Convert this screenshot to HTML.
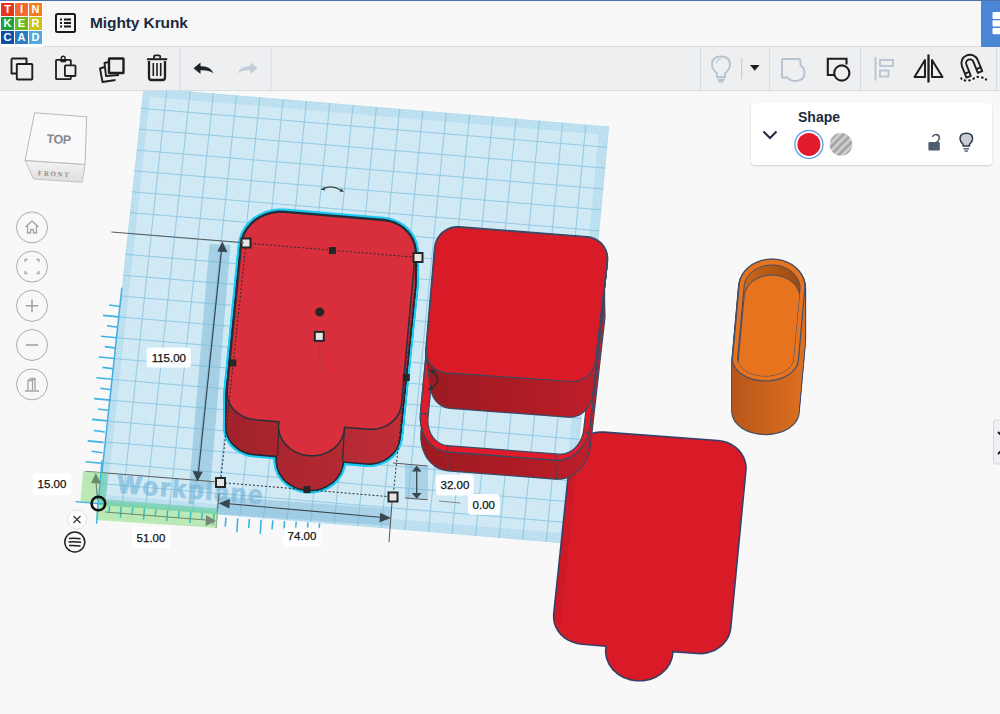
<!DOCTYPE html>
<html><head><meta charset="utf-8">
<style>
*{box-sizing:border-box;margin:0;padding:0}
html,body{width:1000px;height:714px;overflow:hidden;background:#f8f8f8;font-family:"Liberation Sans",sans-serif}
#scene{position:absolute;left:0;top:0;width:1000px;height:714px}
#hdr{position:absolute;left:0;top:0;width:1000px;height:47px;background:#f7f7f7;border-top:1px solid #4a73ad;border-bottom:1px solid #d9dde3}
#logo{position:absolute;left:0;top:0;width:43px;height:46px;background:#fff}
.lg{position:absolute;width:13px;height:13px;color:#fff;font-weight:bold;font-size:11px;line-height:13px;text-align:center}
#title{position:absolute;left:90px;top:13px;font-size:15.5px;font-weight:bold;color:#1c2b3d;letter-spacing:-0.1px}
#blue{position:absolute;left:981px;top:0;width:19px;height:46px;background:#4b86d4}
#tb{position:absolute;left:0;top:47px;width:1000px;height:44px;background:#eeeff1;border-bottom:1px solid #d9dde3}
.sep{position:absolute;top:0;width:1px;height:43px;background:#d8dce2}
svg.ic{position:absolute;overflow:visible}
.lbl{position:absolute;background:rgba(255,255,255,0.92);border-radius:3px;font-size:11px;color:#111;text-align:center}
</style></head><body>
<svg id="scene" width="1000" height="714" viewBox="0 0 1000 714">
<path d="M143.5,87.5 L609.2,126.4 L569.8,543.8 L98.5,504.5Z" fill="#b2dbee"/>
<path d="M150.0,96.9 L598.6,134.3 L560.9,533.0 L107.1,495.1Z" fill="#cae7f4"/>
<path d="M145.8,87.7L100.9,504.7M143.3,89.6L609.0,128.5M148.2,87.9L103.2,504.9M143.1,91.7L608.8,130.6M150.5,88.1L105.6,505.1M142.8,93.8L608.6,132.7M152.8,88.3L107.9,505.3M142.6,95.8L608.4,134.7M155.1,88.5L110.3,505.5M142.4,97.9L608.2,136.8M157.5,88.7L112.6,505.7M142.2,100.0L608.0,138.9M159.8,88.9L115.0,505.9M141.9,102.1L607.8,141.0M162.1,89.1L117.4,506.1M141.7,104.2L607.6,143.1M164.5,89.3L119.7,506.3M141.5,106.3L607.4,145.2M169.1,89.6L124.4,506.7M141.0,110.4L607.0,149.4M171.4,89.8L126.8,506.9M140.8,112.5L606.8,151.4M173.8,90.0L129.1,507.1M140.6,114.6L606.6,153.5M176.1,90.2L131.5,507.3M140.3,116.7L606.4,155.6M178.4,90.4L133.8,507.4M140.1,118.8L606.2,157.7M180.8,90.6L136.2,507.6M139.9,120.9L606.0,159.8M183.1,90.8L138.6,507.8M139.7,122.9L605.9,161.9M185.4,91.0L140.9,508.0M139.5,125.0L605.7,164.0M187.7,91.2L143.3,508.2M139.2,127.1L605.5,166.1M192.4,91.6L148.0,508.6M138.8,131.3L605.1,170.2M194.7,91.8L150.3,508.8M138.6,133.4L604.9,172.3M197.1,92.0L152.7,509.0M138.3,135.5L604.7,174.4M199.4,92.2L155.1,509.2M138.1,137.5L604.5,176.5M201.7,92.4L157.4,509.4M137.9,139.6L604.3,178.6M204.0,92.6L159.8,509.6M137.7,141.7L604.1,180.7M206.4,92.8L162.1,509.8M137.4,143.8L603.9,182.7M208.7,92.9L164.5,510.0M137.2,145.9L603.7,184.8M211.0,93.1L166.8,510.2M137.0,148.0L603.5,186.9M215.7,93.5L171.6,510.6M136.5,152.1L603.1,191.1M218.0,93.7L173.9,510.8M136.3,154.2L602.9,193.2M220.3,93.9L176.3,511.0M136.1,156.3L602.7,195.3M222.7,94.1L178.6,511.2M135.8,158.4L602.5,197.4M225.0,94.3L181.0,511.4M135.6,160.5L602.3,199.4M227.3,94.5L183.3,511.6M135.4,162.6L602.1,201.5M229.7,94.7L185.7,511.8M135.2,164.6L601.9,203.6M232.0,94.9L188.0,512.0M135.0,166.7L601.7,205.7M234.3,95.1L190.4,512.2M134.7,168.8L601.5,207.8M239.0,95.5L195.1,512.6M134.3,173.0L601.1,212.0M241.3,95.7L197.5,512.8M134.1,175.1L600.9,214.1M243.6,95.9L199.8,512.9M133.8,177.2L600.7,216.1M246.0,96.1L202.2,513.1M133.6,179.2L600.5,218.2M248.3,96.3L204.5,513.3M133.4,181.3L600.3,220.3M250.6,96.4L206.9,513.5M133.2,183.4L600.1,222.4M252.9,96.6L209.3,513.7M132.9,185.5L599.9,224.5M255.3,96.8L211.6,513.9M132.7,187.6L599.7,226.6M257.6,97.0L214.0,514.1M132.5,189.7L599.5,228.7M262.3,97.4L218.7,514.5M132.0,193.8L599.2,232.8M264.6,97.6L221.0,514.7M131.8,195.9L599.0,234.9M266.9,97.8L223.4,514.9M131.6,198.0L598.8,237.0M269.2,98.0L225.8,515.1M131.3,200.1L598.6,239.1M271.6,98.2L228.1,515.3M131.1,202.2L598.4,241.2M273.9,98.4L230.5,515.5M130.9,204.3L598.2,243.3M276.2,98.6L232.8,515.7M130.7,206.3L598.0,245.4M278.6,98.8L235.2,515.9M130.4,208.4L597.8,247.4M280.9,99.0L237.5,516.1M130.2,210.5L597.6,249.5M285.5,99.4L242.2,516.5M129.8,214.7L597.2,253.7M287.9,99.6L244.6,516.7M129.5,216.8L597.0,255.8M290.2,99.8L247.0,516.9M129.3,218.9L596.8,257.9M292.5,99.9L249.3,517.1M129.1,220.9L596.6,260.0M294.9,100.1L251.7,517.3M128.9,223.0L596.4,262.1M297.2,100.3L254.0,517.5M128.7,225.1L596.2,264.1M299.5,100.5L256.4,517.7M128.4,227.2L596.0,266.2M301.8,100.7L258.7,517.9M128.2,229.3L595.8,268.3M304.2,100.9L261.1,518.1M128.0,231.4L595.6,270.4M308.8,101.3L265.8,518.5M127.5,235.5L595.2,274.6M311.2,101.5L268.2,518.6M127.3,237.6L595.0,276.7M313.5,101.7L270.5,518.8M127.1,239.7L594.8,278.8M315.8,101.9L272.9,519.0M126.8,241.8L594.6,280.8M318.1,102.1L275.2,519.2M126.6,243.9L594.4,282.9M320.5,102.3L277.6,519.4M126.4,246.0L594.2,285.0M322.8,102.5L280.0,519.6M126.2,248.0L594.0,287.1M325.1,102.7L282.3,519.8M125.9,250.1L593.8,289.2M327.5,102.9L284.7,520.0M125.7,252.2L593.6,291.3M332.1,103.3L289.4,520.4M125.3,256.4L593.2,295.4M334.4,103.4L291.7,520.6M125.1,258.5L593.0,297.5M336.8,103.6L294.1,520.8M124.8,260.6L592.8,299.6M339.1,103.8L296.4,521.0M124.6,262.6L592.7,301.7M341.4,104.0L298.8,521.2M124.4,264.7L592.5,303.8M343.8,104.2L301.2,521.4M124.2,266.8L592.3,305.9M346.1,104.4L303.5,521.6M123.9,268.9L592.1,308.0M348.4,104.6L305.9,521.8M123.7,271.0L591.9,310.1M350.7,104.8L308.2,522.0M123.5,273.1L591.7,312.1M355.4,105.2L312.9,522.4M123.0,277.2L591.3,316.3M357.7,105.4L315.3,522.6M122.8,279.3L591.1,318.4M360.1,105.6L317.7,522.8M122.6,281.4L590.9,320.5M362.4,105.8L320.0,523.0M122.3,283.5L590.7,322.6M364.7,106.0L322.4,523.2M122.1,285.6L590.5,324.7M367.0,106.2L324.7,523.4M121.9,287.7L590.3,326.8M369.4,106.4L327.1,523.6M121.7,289.7L590.1,328.8M371.7,106.6L329.4,523.8M121.5,291.8L589.9,330.9M374.0,106.8L331.8,524.0M121.2,293.9L589.7,333.0M378.7,107.1L336.5,524.3M120.8,298.1L589.3,337.2M381.0,107.3L338.9,524.5M120.5,300.2L589.1,339.3M383.3,107.5L341.2,524.7M120.3,302.3L588.9,341.4M385.7,107.7L343.6,524.9M120.1,304.3L588.7,343.4M388.0,107.9L345.9,525.1M119.9,306.4L588.5,345.5M390.3,108.1L348.3,525.3M119.7,308.5L588.3,347.6M392.6,108.3L350.6,525.5M119.4,310.6L588.1,349.7M395.0,108.5L353.0,525.7M119.2,312.7L587.9,351.8M397.3,108.7L355.4,525.9M119.0,314.8L587.7,353.9M402.0,109.1L360.1,526.3M118.5,318.9L587.3,358.1M404.3,109.3L362.4,526.5M118.3,321.0L587.1,360.1M406.6,109.5L364.8,526.7M118.1,323.1L586.9,362.2M408.9,109.7L367.1,526.9M117.8,325.2L586.7,364.3M411.3,109.9L369.5,527.1M117.6,327.3L586.5,366.4M413.6,110.1L371.9,527.3M117.4,329.4L586.3,368.5M415.9,110.3L374.2,527.5M117.2,331.4L586.2,370.6M418.3,110.5L376.6,527.7M117.0,333.5L586.0,372.7M420.6,110.6L378.9,527.9M116.7,335.6L585.8,374.8M425.2,111.0L383.6,528.3M116.3,339.8L585.4,378.9M427.6,111.2L386.0,528.5M116.1,341.9L585.2,381.0M429.9,111.4L388.3,528.7M115.8,344.0L585.0,383.1M432.2,111.6L390.7,528.9M115.6,346.0L584.8,385.2M434.6,111.8L393.1,529.1M115.4,348.1L584.6,387.3M436.9,112.0L395.4,529.3M115.2,350.2L584.4,389.4M439.2,112.2L397.8,529.5M114.9,352.3L584.2,391.4M441.5,112.4L400.1,529.7M114.7,354.4L584.0,393.5M443.9,112.6L402.5,529.8M114.5,356.5L583.8,395.6M448.5,113.0L407.2,530.2M114.0,360.6L583.4,399.8M450.9,113.2L409.6,530.4M113.8,362.7L583.2,401.9M453.2,113.4L411.9,530.6M113.6,364.8L583.0,404.0M455.5,113.6L414.3,530.8M113.3,366.9L582.8,406.1M457.8,113.8L416.6,531.0M113.1,369.0L582.6,408.1M460.2,114.0L419.0,531.2M112.9,371.1L582.4,410.2M462.5,114.1L421.3,531.4M112.7,373.1L582.2,412.3M464.8,114.3L423.7,531.6M112.4,375.2L582.0,414.4M467.2,114.5L426.1,531.8M112.2,377.3L581.8,416.5M471.8,114.9L430.8,532.2M111.8,381.5L581.4,420.7M474.1,115.1L433.1,532.4M111.6,383.6L581.2,422.8M476.5,115.3L435.5,532.6M111.3,385.7L581.0,424.8M478.8,115.5L437.8,532.8M111.1,387.7L580.8,426.9M481.1,115.7L440.2,533.0M110.9,389.8L580.6,429.0M483.5,115.9L442.5,533.2M110.7,391.9L580.4,431.1M485.8,116.1L444.9,533.4M110.4,394.0L580.2,433.2M488.1,116.3L447.3,533.6M110.2,396.1L580.0,435.3M490.4,116.5L449.6,533.8M110.0,398.2L579.8,437.4M495.1,116.9L454.3,534.2M109.5,402.3L579.5,441.5M497.4,117.1L456.7,534.4M109.3,404.4L579.3,443.6M499.8,117.3L459.0,534.6M109.1,406.5L579.1,445.7M502.1,117.5L461.4,534.8M108.8,408.6L578.9,447.8M504.4,117.6L463.8,535.0M108.6,410.7L578.7,449.9M506.7,117.8L466.1,535.2M108.4,412.8L578.5,452.0M509.1,118.0L468.5,535.4M108.2,414.8L578.3,454.1M511.4,118.2L470.8,535.5M107.9,416.9L578.1,456.1M513.7,118.4L473.2,535.7M107.7,419.0L577.9,458.2M518.4,118.8L477.9,536.1M107.3,423.2L577.5,462.4M520.7,119.0L480.3,536.3M107.1,425.3L577.3,464.5M523.0,119.2L482.6,536.5M106.8,427.4L577.1,466.6M525.4,119.4L485.0,536.7M106.6,429.4L576.9,468.7M527.7,119.6L487.3,536.9M106.4,431.5L576.7,470.8M530.0,119.8L489.7,537.1M106.2,433.6L576.5,472.8M532.4,120.0L492.0,537.3M105.9,435.7L576.3,474.9M534.7,120.2L494.4,537.5M105.7,437.8L576.1,477.0M537.0,120.4L496.7,537.7M105.5,439.9L575.9,479.1M541.7,120.8L501.5,538.1M105.0,444.0L575.5,483.3M544.0,121.0L503.8,538.3M104.8,446.1L575.3,485.4M546.3,121.1L506.2,538.5M104.6,448.2L575.1,487.5M548.7,121.3L508.5,538.7M104.3,450.3L574.9,489.5M551.0,121.5L510.9,538.9M104.1,452.4L574.7,491.6M553.3,121.7L513.2,539.1M103.9,454.5L574.5,493.7M555.6,121.9L515.6,539.3M103.7,456.5L574.3,495.8M558.0,122.1L518.0,539.5M103.5,458.6L574.1,497.9M560.3,122.3L520.3,539.7M103.2,460.7L573.9,500.0M565.0,122.7L525.0,540.1M102.8,464.9L573.5,504.1M567.3,122.9L527.4,540.3M102.5,467.0L573.3,506.2M569.6,123.1L529.7,540.5M102.3,469.1L573.1,508.3M571.9,123.3L532.1,540.7M102.1,471.1L573.0,510.4M574.3,123.5L534.5,540.9M101.9,473.2L572.8,512.5M576.6,123.7L536.8,541.0M101.6,475.3L572.6,514.6M578.9,123.9L539.2,541.2M101.4,477.4L572.4,516.7M581.3,124.1L541.5,541.4M101.2,479.5L572.2,518.8M583.6,124.3L543.9,541.6M101.0,481.6L572.0,520.8M588.2,124.6L548.6,542.0M100.5,485.7L571.6,525.0M590.6,124.8L550.9,542.2M100.3,487.8L571.4,527.1M592.9,125.0L553.3,542.4M100.1,489.9L571.2,529.2M595.2,125.2L555.7,542.6M99.9,492.0L571.0,531.3M597.6,125.4L558.0,542.8M99.6,494.1L570.8,533.4M599.9,125.6L560.4,543.0M99.4,496.2L570.6,535.5M602.2,125.8L562.7,543.2M99.2,498.2L570.4,537.5M604.5,126.0L565.1,543.4M99.0,500.3L570.2,539.6M606.9,126.2L567.4,543.6M98.7,502.4L570.0,541.7" stroke="#eef8fc" stroke-width="0.5" fill="none" opacity="0.45"/>
<path d="M166.8,89.4L122.1,506.5M141.2,108.3L607.2,147.3M190.1,91.4L145.6,508.4M139.0,129.2L605.3,168.1M213.4,93.3L169.2,510.4M136.8,150.1L603.3,189.0M236.6,95.3L192.8,512.4M134.5,170.9L601.3,209.9M259.9,97.2L216.3,514.3M132.2,191.8L599.4,230.8M283.2,99.2L239.9,516.3M130.0,212.6L597.4,251.6M306.5,101.1L263.5,518.3M127.8,233.4L595.4,272.5M329.8,103.1L287.0,520.2M125.5,254.3L593.4,293.4M353.1,105.0L310.6,522.2M123.3,275.2L591.5,314.2M376.4,107.0L334.1,524.1M121.0,296.0L589.5,335.1M399.6,108.9L357.7,526.1M118.8,316.9L587.5,356.0M422.9,110.8L381.3,528.1M116.5,337.7L585.6,376.8M446.2,112.8L404.8,530.0M114.2,358.6L583.6,397.7M469.5,114.7L428.4,532.0M112.0,379.4L581.6,418.6M492.8,116.7L452.0,534.0M109.8,400.2L579.6,439.4M516.1,118.6L475.5,535.9M107.5,421.1L577.7,460.3M539.3,120.6L499.1,537.9M105.2,441.9L575.7,481.2M562.6,122.5L522.7,539.9M103.0,462.8L573.7,502.1M585.9,124.5L546.2,541.8M100.8,483.6L571.8,522.9" stroke="#8bc5e0" stroke-width="0.85" fill="none"/>
<path d="M121.9,287.7 L98.5,504.5" stroke="#46aee0" stroke-width="1.5"/>
<text x="117" y="492.5" transform="rotate(4.4 117 492.5)" font-family="Liberation Sans" font-weight="bold" font-size="25" letter-spacing="2.2" fill="#5aa6d2" stroke="#5aa6d2" stroke-width="1.2" opacity="0.48">Workplane</text>
<path d="M209.5,244 L230.5,245 L210,490 L189,489Z" fill="#7ab6d6" opacity="0.5"/>
<path d="M219,496 L392,509 L391,526 L218,514Z" fill="#7ab6d6" opacity="0.45"/>
<path d="M405,464 L428,466 L428,500 L405,498Z" fill="#7ab6d6" opacity="0.45"/>
<defs><linearGradient id="gside" x1="0" x2="1" y1="0" y2="0"><stop offset="0" stop-color="#9c1b22"/><stop offset="0.5" stop-color="#ad1b24"/><stop offset="1" stop-color="#c0202a"/></linearGradient><linearGradient id="gsideA" x1="0" x2="1" y1="0" y2="0"><stop offset="0" stop-color="#a0222b"/><stop offset="1" stop-color="#c22e37"/></linearGradient><linearGradient id="gor" x1="0" x2="1" y1="0" y2="0"><stop offset="0" stop-color="#b8561a"/><stop offset="1" stop-color="#dd7020"/></linearGradient><linearGradient id="gori" x1="0" x2="1" y1="0" y2="0"><stop offset="0" stop-color="#d06a1c"/><stop offset="0.5" stop-color="#b85a15"/><stop offset="1" stop-color="#9c4a10"/></linearGradient></defs>
<clipPath id="dclip"><path clip-rule="evenodd" d="M0,0H1000V714H0Z M465.5,260.1 L579.4,268.1 L579.4,268.1 L582.8,268.6 L586.1,269.8 L589.2,271.6 L591.9,273.9 L594.2,276.8 L596.1,280.0 L597.6,283.7 L598.5,287.5 L598.8,291.6 L598.7,295.7 L583.7,429.8 L583.7,429.8 L583.0,433.8 L581.7,437.7 L580.0,441.4 L577.8,444.8 L575.3,447.7 L572.4,450.2 L569.2,452.1 L565.9,453.4 L562.5,454.1 L559.0,454.2 L447.3,445.6 L447.3,445.6 L443.9,445.0 L440.7,443.8 L437.7,442.0 L435.0,439.7 L432.6,436.8 L430.7,433.5 L429.3,429.9 L428.3,426.1 L427.9,422.1 L428.0,418.0 L440.8,284.5 L440.8,284.5 L441.5,280.5 L442.7,276.6 L444.4,272.9 L446.5,269.5 L449.1,266.6 L452.0,264.1 L455.2,262.2 L458.5,260.9 L462.0,260.2 L465.5,260.1Z"/></clipPath>
<path d="M603.9,432.1 L717.8,440.5 L717.8,440.5 L722.6,441.2 L727.2,442.6 L731.5,444.6 L735.4,447.1 L738.8,450.2 L741.6,453.8 L743.8,457.7 L745.2,461.8 L746.0,466.2 L745.9,470.5 L730.7,628.3 L730.7,628.3 L729.9,632.6 L728.4,636.7 L726.1,640.6 L723.2,644.1 L719.7,647.2 L715.8,649.7 L711.4,651.6 L706.7,652.9 L701.8,653.6 L696.9,653.5 L672.9,651.6 L672.9,651.6 L672.1,657.6 L669.9,663.5 L666.4,668.7 L661.8,673.3 L656.2,676.9 L649.9,679.4 L643.2,680.7 L636.2,680.8 L629.5,679.6 L623.1,677.2 L617.4,673.7 L612.6,669.3 L609.0,664.1 L606.6,658.3 L605.6,652.3 L606.0,646.2 L582.0,644.2 L582.0,644.2 L577.1,643.5 L572.5,642.1 L568.2,640.1 L564.2,637.5 L560.8,634.4 L558.0,630.8 L555.8,626.9 L554.4,622.8 L553.7,618.5 L553.7,614.2 L570.2,457.3 L570.2,457.3 L571.0,453.1 L572.6,448.9 L574.9,445.1 L577.8,441.6 L581.3,438.5 L585.3,436.0 L589.6,434.1 L594.3,432.7 L599.1,432.1 L603.9,432.1Z" fill="#d91b27" stroke="#34406a" stroke-width="1.6" stroke-linejoin="round" clip-path="url(#dclip)"/>
<path d="M570.0,468.8 L577.0,468.8 L560.6,624.8 L553.6,624.8Z" fill="#b81a26" opacity="0.35"/>
<path d="M604.5,298.1 L590.0,426.4 L590.0,426.4 L589.0,432.0 L587.3,437.4 L584.9,442.5 L581.9,447.2 L578.3,451.2 L574.2,454.6 L569.8,457.3 L565.2,459.1 L560.4,460.1 L555.6,460.2 L447.4,451.8 L447.4,451.8 L442.7,451.0 L438.2,449.4 L434.0,446.9 L430.2,443.6 L426.9,439.7 L424.2,435.1 L422.2,430.1 L420.9,424.8 L420.3,419.2 L420.4,413.6 L432.6,285.9 L433.1,304.9 L420.9,432.6 L420.8,438.2 L421.4,443.8 L422.7,449.1 L424.7,454.1 L427.4,458.7 L430.7,462.6 L434.5,465.9 L438.7,468.4 L443.2,470.0 L447.9,470.8 L447.9,470.8 L556.1,479.2 L560.9,479.1 L565.7,478.1 L570.3,476.3 L574.7,473.6 L578.8,470.2 L582.4,466.2 L585.4,461.5 L587.8,456.4 L589.5,451.0 L590.5,445.4 L590.5,445.4 L605.0,317.1Z" fill="url(#gside)" stroke="#3b4a63" stroke-width="1.2" stroke-linejoin="round"/>
<path d="M467.1,252.2 L577.5,259.8 L577.5,259.8 L582.3,260.6 L586.9,262.3 L591.1,264.8 L594.9,268.0 L598.2,271.9 L600.9,276.5 L602.9,281.5 L604.2,286.8 L604.7,292.4 L604.5,298.1 L590.0,426.4 L590.0,426.4 L589.0,432.0 L587.3,437.4 L584.9,442.5 L581.9,447.2 L578.3,451.2 L574.2,454.6 L569.8,457.3 L565.2,459.1 L560.4,460.1 L555.6,460.2 L447.4,451.8 L447.4,451.8 L442.7,451.0 L438.2,449.4 L434.0,446.9 L430.2,443.6 L426.9,439.7 L424.2,435.1 L422.2,430.1 L420.9,424.8 L420.3,419.2 L420.4,413.6 L432.6,285.9 L432.6,285.9 L433.5,280.3 L435.2,274.9 L437.5,269.8 L440.5,265.2 L444.1,261.2 L448.1,257.8 L452.6,255.1 L457.3,253.3 L462.1,252.3 L467.1,252.2Z M465.5,260.1 L579.4,268.1 L579.4,268.1 L582.8,268.6 L586.1,269.8 L589.2,271.6 L591.9,273.9 L594.2,276.8 L596.1,280.0 L597.6,283.7 L598.5,287.5 L598.8,291.6 L598.7,295.7 L583.7,429.8 L583.7,429.8 L583.0,433.8 L581.7,437.7 L580.0,441.4 L577.8,444.8 L575.3,447.7 L572.4,450.2 L569.2,452.1 L565.9,453.4 L562.5,454.1 L559.0,454.2 L447.3,445.6 L447.3,445.6 L443.9,445.0 L440.7,443.8 L437.7,442.0 L435.0,439.7 L432.6,436.8 L430.7,433.5 L429.3,429.9 L428.3,426.1 L427.9,422.1 L428.0,418.0 L440.8,284.5 L440.8,284.5 L441.5,280.5 L442.7,276.6 L444.4,272.9 L446.5,269.5 L449.1,266.6 L452.0,264.1 L455.2,262.2 L458.5,260.9 L462.0,260.2 L465.5,260.1Z" fill="#e01b2a" fill-rule="evenodd" stroke="#3b4a63" stroke-width="1.2"/>
<path d="M448.0,445.6L447.4,451.8L447.9,470.8" fill="none" stroke="#3b4a63" stroke-width="1.2"/>
<path d="M556.3,454.0L555.6,460.2L556.1,479.2" fill="none" stroke="#3b4a63" stroke-width="1.2"/>
<path d="M583.4,432.0L589.4,432.4L589.4,449.4" fill="none" stroke="#3b4a63" stroke-width="1.2"/>
<path d="M420.4,413.6L428.4,414.2" stroke="#3b4a63" stroke-width="1.2"/>
<g fill="none" stroke="#3b4a63" stroke-width="2.5" stroke-linejoin="round"><path d="M462.6,262.3 L583.6,272.2 L583.6,272.2 L586.9,272.8 L590.0,273.9 L593.0,275.4 L595.6,277.5 L597.9,279.9 L599.8,282.7 L601.2,285.8 L602.2,289.1 L602.6,292.6 L602.5,296.0 L591.6,396.0 L591.6,396.0 L591.0,399.4 L589.8,402.7 L588.2,405.8 L586.2,408.6 L583.8,411.1 L581.1,413.2 L578.1,414.8 L575.0,415.9 L571.7,416.4 L568.5,416.5 L450.3,407.8 L450.3,407.8 L447.1,407.3 L444.0,406.3 L441.1,404.7 L438.4,402.7 L436.1,400.2 L434.2,397.4 L432.8,394.3 L431.8,391.0 L431.3,387.5 L431.3,384.0 L439.6,282.8 L439.6,282.8 L440.1,279.3 L441.2,276.0 L442.7,272.9 L444.7,270.0 L447.1,267.5 L449.8,265.5 L452.8,263.9 L456.0,262.8 L459.3,262.3 L462.6,262.3Z"/><path d="M462.4,260.2 L583.8,270.2 L583.8,270.2 L587.1,270.7 L590.3,271.8 L593.2,273.4 L595.9,275.4 L598.2,277.9 L600.1,280.7 L601.5,283.8 L602.4,287.1 L602.8,290.5 L602.7,294.0 L591.8,393.9 L591.8,393.9 L591.2,397.3 L590.1,400.6 L588.5,403.7 L586.4,406.6 L584.0,409.0 L581.3,411.1 L578.3,412.7 L575.2,413.8 L571.9,414.4 L568.6,414.4 L450.1,405.8 L450.1,405.8 L446.8,405.3 L443.7,404.2 L440.8,402.6 L438.2,400.6 L435.9,398.2 L434.0,395.3 L432.5,392.2 L431.5,388.9 L431.0,385.4 L431.0,381.9 L439.3,280.7 L439.3,280.7 L439.8,277.3 L440.9,273.9 L442.4,270.8 L444.4,268.0 L446.8,265.5 L449.6,263.4 L452.6,261.8 L455.8,260.7 L459.1,260.2 L462.4,260.2Z"/><path d="M462.2,258.1 L584.0,268.1 L584.0,268.1 L587.3,268.7 L590.5,269.7 L593.5,271.3 L596.1,273.4 L598.4,275.8 L600.3,278.6 L601.8,281.7 L602.7,285.0 L603.1,288.4 L603.0,291.9 L592.1,391.9 L592.1,391.9 L591.4,395.3 L590.3,398.6 L588.7,401.7 L586.7,404.5 L584.2,407.0 L581.5,409.0 L578.5,410.6 L575.3,411.8 L572.1,412.3 L568.8,412.4 L449.8,403.7 L449.8,403.7 L446.6,403.2 L443.5,402.1 L440.5,400.6 L437.9,398.6 L435.6,396.1 L433.7,393.3 L432.2,390.2 L431.2,386.8 L430.7,383.4 L430.8,379.9 L439.0,278.7 L439.0,278.7 L439.6,275.2 L440.6,271.9 L442.2,268.7 L444.2,265.9 L446.6,263.4 L449.3,261.4 L452.3,259.8 L455.5,258.7 L458.9,258.1 L462.2,258.1Z"/><path d="M462.1,256.1 L584.2,266.1 L584.2,266.1 L587.5,266.6 L590.7,267.7 L593.7,269.3 L596.4,271.3 L598.7,273.8 L600.6,276.6 L602.0,279.7 L603.0,283.0 L603.4,286.4 L603.3,289.8 L592.3,389.8 L592.3,389.8 L591.7,393.2 L590.5,396.5 L588.9,399.6 L586.9,402.5 L584.4,404.9 L581.7,407.0 L578.7,408.6 L575.5,409.7 L572.2,410.3 L568.9,410.3 L449.6,401.6 L449.6,401.6 L446.3,401.1 L443.2,400.1 L440.3,398.5 L437.6,396.5 L435.3,394.0 L433.4,391.2 L431.9,388.1 L430.9,384.8 L430.4,381.3 L430.5,377.8 L438.8,276.6 L438.8,276.6 L439.3,273.2 L440.4,269.8 L441.9,266.7 L443.9,263.8 L446.3,261.4 L449.1,259.3 L452.1,257.7 L455.3,256.6 L458.7,256.1 L462.1,256.1Z"/><path d="M461.9,254.0 L584.4,264.0 L584.4,264.0 L587.8,264.6 L590.9,265.6 L593.9,267.2 L596.6,269.3 L598.9,271.7 L600.8,274.5 L602.3,277.6 L603.2,280.9 L603.6,284.3 L603.5,287.8 L592.5,387.7 L592.5,387.7 L591.9,391.2 L590.7,394.5 L589.1,397.6 L587.1,400.4 L584.6,402.9 L581.9,404.9 L578.9,406.5 L575.7,407.6 L572.4,408.2 L569.1,408.2 L449.4,399.6 L449.4,399.6 L446.1,399.1 L443.0,398.0 L440.0,396.5 L437.4,394.4 L435.0,392.0 L433.1,389.2 L431.6,386.1 L430.6,382.7 L430.2,379.3 L430.2,375.8 L438.5,274.6 L438.5,274.6 L439.1,271.1 L440.1,267.8 L441.7,264.6 L443.7,261.8 L446.1,259.3 L448.9,257.2 L451.9,255.7 L455.1,254.6 L458.5,254.0 L461.9,254.0Z"/><path d="M461.7,252.0 L584.6,262.0 L584.6,262.0 L588.0,262.5 L591.2,263.6 L594.2,265.2 L596.9,267.2 L599.2,269.6 L601.1,272.5 L602.5,275.5 L603.5,278.8 L603.9,282.3 L603.8,285.7 L592.8,385.7 L592.8,385.7 L592.1,389.1 L591.0,392.4 L589.3,395.5 L587.3,398.3 L584.9,400.8 L582.1,402.9 L579.1,404.5 L575.9,405.6 L572.6,406.2 L569.2,406.2 L449.1,397.5 L449.1,397.5 L445.9,397.0 L442.7,396.0 L439.8,394.4 L437.1,392.4 L434.8,389.9 L432.8,387.1 L431.4,384.0 L430.4,380.7 L429.9,377.2 L429.9,373.7 L438.2,272.5 L438.2,272.5 L438.8,269.0 L439.9,265.7 L441.4,262.6 L443.4,259.7 L445.9,257.2 L448.6,255.2 L451.7,253.6 L454.9,252.5 L458.3,252.0 L461.7,252.0Z"/><path d="M461.5,249.9 L584.8,259.9 L584.8,259.9 L588.2,260.4 L591.4,261.5 L594.4,263.1 L597.1,265.1 L599.4,267.6 L601.4,270.4 L602.8,273.5 L603.7,276.8 L604.2,280.2 L604.1,283.7 L593.0,383.6 L593.0,383.6 L592.3,387.0 L591.2,390.4 L589.6,393.5 L587.5,396.3 L585.1,398.7 L582.3,400.8 L579.3,402.4 L576.0,403.5 L572.7,404.1 L569.4,404.1 L448.9,395.5 L448.9,395.5 L445.6,395.0 L442.5,393.9 L439.5,392.3 L436.8,390.3 L434.5,387.9 L432.6,385.0 L431.1,381.9 L430.1,378.6 L429.6,375.2 L429.6,371.6 L438.0,270.4 L438.0,270.4 L438.5,267.0 L439.6,263.6 L441.2,260.5 L443.2,257.7 L445.6,255.2 L448.4,253.1 L451.5,251.5 L454.7,250.4 L458.1,249.9 L461.5,249.9Z"/><path d="M461.3,247.8 L585.0,257.8 L585.0,257.8 L588.4,258.4 L591.6,259.5 L594.6,261.0 L597.3,263.1 L599.7,265.5 L601.6,268.3 L603.1,271.4 L604.0,274.7 L604.4,278.1 L604.3,281.6 L593.2,381.6 L593.2,381.6 L592.6,385.0 L591.4,388.3 L589.8,391.4 L587.7,394.2 L585.3,396.7 L582.5,398.8 L579.4,400.4 L576.2,401.5 L572.9,402.0 L569.5,402.1 L448.7,393.4 L448.7,393.4 L445.4,392.9 L442.2,391.8 L439.3,390.3 L436.6,388.3 L434.2,385.8 L432.3,383.0 L430.8,379.9 L429.8,376.6 L429.3,373.1 L429.3,369.6 L437.7,268.4 L437.7,268.4 L438.3,264.9 L439.4,261.6 L440.9,258.5 L443.0,255.6 L445.4,253.1 L448.2,251.1 L451.2,249.5 L454.5,248.4 L457.9,247.8 L461.3,247.8Z"/><path d="M461.1,245.8 L585.2,255.8 L585.2,255.8 L588.6,256.3 L591.9,257.4 L594.9,259.0 L597.6,261.0 L599.9,263.5 L601.9,266.3 L603.3,269.4 L604.3,272.7 L604.7,276.1 L604.6,279.6 L593.4,379.5 L593.4,379.5 L592.8,382.9 L591.6,386.2 L590.0,389.3 L587.9,392.2 L585.5,394.6 L582.7,396.7 L579.6,398.3 L576.4,399.4 L573.1,400.0 L569.7,400.0 L448.5,391.4 L448.5,391.4 L445.2,390.8 L442.0,389.8 L439.0,388.2 L436.3,386.2 L434.0,383.7 L432.0,380.9 L430.5,377.8 L429.5,374.5 L429.0,371.0 L429.0,367.5 L437.5,266.3 L437.5,266.3 L438.0,262.9 L439.1,259.5 L440.7,256.4 L442.7,253.6 L445.1,251.1 L447.9,249.0 L451.0,247.4 L454.3,246.3 L457.7,245.8 L461.1,245.8Z"/><path d="M460.9,243.7 L585.4,253.7 L585.4,253.7 L588.8,254.3 L592.1,255.3 L595.1,256.9 L597.8,259.0 L600.2,261.4 L602.1,264.2 L603.6,267.3 L604.5,270.6 L605.0,274.0 L604.8,277.5 L593.7,377.4 L593.7,377.4 L593.0,380.9 L591.9,384.2 L590.2,387.3 L588.1,390.1 L585.7,392.6 L582.9,394.6 L579.8,396.2 L576.6,397.3 L573.2,397.9 L569.9,397.9 L448.2,389.3 L448.2,389.3 L444.9,388.8 L441.7,387.7 L438.7,386.2 L436.0,384.1 L433.7,381.7 L431.7,378.9 L430.2,375.8 L429.2,372.4 L428.7,369.0 L428.7,365.5 L437.2,264.3 L437.2,264.3 L437.8,260.8 L438.8,257.5 L440.4,254.3 L442.5,251.5 L444.9,249.0 L447.7,246.9 L450.8,245.4 L454.1,244.3 L457.5,243.7 L460.9,243.7Z"/><path d="M460.7,241.7 L585.6,251.7 L585.6,251.7 L589.0,252.2 L592.3,253.3 L595.3,254.9 L598.1,256.9 L600.4,259.4 L602.4,262.2 L603.8,265.2 L604.8,268.5 L605.2,272.0 L605.1,275.4 L593.9,375.4 L593.9,375.4 L593.3,378.8 L592.1,382.1 L590.4,385.2 L588.4,388.0 L585.9,390.5 L583.1,392.6 L580.0,394.2 L576.7,395.3 L573.4,395.9 L570.0,395.9 L448.0,387.2 L448.0,387.2 L444.7,386.7 L441.5,385.7 L438.5,384.1 L435.8,382.1 L433.4,379.6 L431.4,376.8 L429.9,373.7 L428.9,370.4 L428.4,366.9 L428.4,363.4 L436.9,262.2 L436.9,262.2 L437.5,258.7 L438.6,255.4 L440.2,252.3 L442.2,249.4 L444.7,247.0 L447.5,244.9 L450.6,243.3 L453.9,242.2 L457.3,241.7 L460.7,241.7Z"/><path d="M460.6,239.6 L585.8,249.6 L585.8,249.6 L589.3,250.1 L592.5,251.2 L595.6,252.8 L598.3,254.8 L600.7,257.3 L602.6,260.1 L604.1,263.2 L605.1,266.5 L605.5,269.9 L605.4,273.4 L594.1,373.3 L594.1,373.3 L593.5,376.8 L592.3,380.1 L590.7,383.2 L588.6,386.0 L586.1,388.5 L583.3,390.5 L580.2,392.1 L576.9,393.2 L573.6,393.8 L570.2,393.8 L447.8,385.2 L447.8,385.2 L444.4,384.7 L441.2,383.6 L438.2,382.1 L435.5,380.0 L433.1,377.6 L431.2,374.8 L429.6,371.6 L428.6,368.3 L428.1,364.9 L428.2,361.4 L436.7,260.2 L436.7,260.2 L437.2,256.7 L438.3,253.3 L439.9,250.2 L442.0,247.4 L444.4,244.9 L447.3,242.8 L450.4,241.2 L453.7,240.2 L457.1,239.6 L460.6,239.6Z"/><path d="M460.4,237.5 L586.1,247.5 L586.1,247.5 L589.5,248.1 L592.8,249.2 L595.8,250.7 L598.6,252.8 L600.9,255.2 L602.9,258.0 L604.4,261.1 L605.3,264.4 L605.8,267.9 L605.6,271.3 L594.4,371.3 L594.4,371.3 L593.7,374.7 L592.5,378.0 L590.9,381.1 L588.8,383.9 L586.3,386.4 L583.5,388.5 L580.4,390.1 L577.1,391.2 L573.7,391.7 L570.3,391.8 L447.5,383.1 L447.5,383.1 L444.2,382.6 L441.0,381.6 L438.0,380.0 L435.2,378.0 L432.9,375.5 L430.9,372.7 L429.4,369.6 L428.3,366.3 L427.8,362.8 L427.9,359.3 L436.4,258.1 L436.4,258.1 L437.0,254.6 L438.1,251.3 L439.7,248.2 L441.7,245.3 L444.2,242.8 L447.0,240.8 L450.1,239.2 L453.4,238.1 L456.9,237.5 L460.4,237.5Z"/><path d="M460.2,235.5 L586.3,245.5 L586.3,245.5 L589.7,246.0 L593.0,247.1 L596.0,248.7 L598.8,250.7 L601.2,253.2 L603.2,256.0 L604.6,259.1 L605.6,262.4 L606.0,265.8 L605.9,269.3 L594.6,369.2 L594.6,369.2 L593.9,372.6 L592.8,375.9 L591.1,379.0 L589.0,381.9 L586.5,384.3 L583.7,386.4 L580.6,388.0 L577.3,389.1 L573.9,389.7 L570.5,389.7 L447.3,381.1 L447.3,381.1 L444.0,380.5 L440.7,379.5 L437.7,377.9 L435.0,375.9 L432.6,373.5 L430.6,370.6 L429.1,367.5 L428.0,364.2 L427.5,360.7 L427.6,357.2 L436.1,256.0 L436.1,256.0 L436.7,252.6 L437.8,249.2 L439.4,246.1 L441.5,243.3 L444.0,240.8 L446.8,238.7 L449.9,237.1 L453.2,236.0 L456.7,235.5 L460.2,235.5Z"/><path d="M460.0,233.4 L586.5,243.4 L586.5,243.4 L589.9,244.0 L593.2,245.0 L596.3,246.6 L599.0,248.7 L601.4,251.1 L603.4,253.9 L604.9,257.0 L605.9,260.3 L606.3,263.7 L606.2,267.2 L594.8,367.2 L594.8,367.2 L594.2,370.6 L593.0,373.9 L591.3,377.0 L589.2,379.8 L586.7,382.3 L583.9,384.3 L580.7,385.9 L577.5,387.0 L574.1,387.6 L570.6,387.7 L447.1,379.0 L447.1,379.0 L443.7,378.5 L440.5,377.4 L437.4,375.9 L434.7,373.8 L432.3,371.4 L430.3,368.6 L428.8,365.5 L427.8,362.1 L427.3,358.7 L427.3,355.2 L435.9,254.0 L435.9,254.0 L436.4,250.5 L437.5,247.2 L439.2,244.0 L441.2,241.2 L443.7,238.7 L446.6,236.7 L449.7,235.1 L453.0,234.0 L456.5,233.4 L460.0,233.4Z"/><path d="M459.8,231.4 L586.7,241.4 L586.7,241.4 L590.1,241.9 L593.4,243.0 L596.5,244.6 L599.3,246.6 L601.7,249.1 L603.7,251.9 L605.2,255.0 L606.1,258.3 L606.6,261.7 L606.4,265.1 L595.1,365.1 L595.1,365.1 L594.4,368.5 L593.2,371.8 L591.5,374.9 L589.4,377.7 L586.9,380.2 L584.1,382.3 L580.9,383.9 L577.6,385.0 L574.2,385.6 L570.8,385.6 L446.9,376.9 L446.9,376.9 L443.5,376.4 L440.2,375.4 L437.2,373.8 L434.4,371.8 L432.0,369.3 L430.0,366.5 L428.5,363.4 L427.5,360.1 L427.0,356.6 L427.0,353.1 L435.6,251.9 L435.6,251.9 L436.2,248.4 L437.3,245.1 L438.9,242.0 L441.0,239.1 L443.5,236.7 L446.3,234.6 L449.5,233.0 L452.8,231.9 L456.3,231.4 L459.8,231.4Z"/><path d="M459.6,229.3 L586.9,239.3 L586.9,239.3 L590.3,239.8 L593.7,240.9 L596.8,242.5 L599.5,244.5 L601.9,247.0 L603.9,249.8 L605.4,252.9 L606.4,256.2 L606.8,259.6 L606.7,263.1 L595.3,363.0 L595.3,363.0 L594.6,366.5 L593.4,369.8 L591.8,372.9 L589.6,375.7 L587.1,378.2 L584.2,380.2 L581.1,381.8 L577.8,382.9 L574.4,383.5 L570.9,383.5 L446.6,374.9 L446.6,374.9 L443.2,374.4 L440.0,373.3 L436.9,371.8 L434.2,369.7 L431.8,367.3 L429.8,364.5 L428.2,361.4 L427.2,358.0 L426.7,354.6 L426.7,351.1 L435.4,249.9 L435.4,249.9 L435.9,246.4 L437.0,243.1 L438.6,239.9 L440.7,237.1 L443.2,234.6 L446.1,232.5 L449.3,230.9 L452.6,229.9 L456.1,229.3 L459.6,229.3Z"/><path d="M459.4,227.3 L587.1,237.2 L587.1,237.2 L590.6,237.8 L593.9,238.9 L597.0,240.4 L599.8,242.5 L602.2,244.9 L604.2,247.7 L605.7,250.8 L606.7,254.1 L607.1,257.6 L607.0,261.0 L595.5,361.0 L595.5,361.0 L594.9,364.4 L593.7,367.7 L592.0,370.8 L589.9,373.6 L587.3,376.1 L584.4,378.2 L581.3,379.8 L578.0,380.9 L574.6,381.4 L571.1,381.5 L446.4,372.8 L446.4,372.8 L443.0,372.3 L439.7,371.3 L436.7,369.7 L433.9,367.7 L431.5,365.2 L429.5,362.4 L427.9,359.3 L426.9,356.0 L426.4,352.5 L426.4,349.0 L435.1,247.8 L435.1,247.8 L435.7,244.3 L436.8,241.0 L438.4,237.9 L440.5,235.0 L443.0,232.5 L445.9,230.5 L449.0,228.9 L452.4,227.8 L455.9,227.3 L459.4,227.3Z"/></g>
<g fill="url(#gside)" stroke="none"><path d="M462.6,262.3 L583.6,272.2 L583.6,272.2 L586.9,272.8 L590.0,273.9 L593.0,275.4 L595.6,277.5 L597.9,279.9 L599.8,282.7 L601.2,285.8 L602.2,289.1 L602.6,292.6 L602.5,296.0 L591.6,396.0 L591.6,396.0 L591.0,399.4 L589.8,402.7 L588.2,405.8 L586.2,408.6 L583.8,411.1 L581.1,413.2 L578.1,414.8 L575.0,415.9 L571.7,416.4 L568.5,416.5 L450.3,407.8 L450.3,407.8 L447.1,407.3 L444.0,406.3 L441.1,404.7 L438.4,402.7 L436.1,400.2 L434.2,397.4 L432.8,394.3 L431.8,391.0 L431.3,387.5 L431.3,384.0 L439.6,282.8 L439.6,282.8 L440.1,279.3 L441.2,276.0 L442.7,272.9 L444.7,270.0 L447.1,267.5 L449.8,265.5 L452.8,263.9 L456.0,262.8 L459.3,262.3 L462.6,262.3Z"/><path d="M462.5,261.2 L583.7,271.2 L583.7,271.2 L587.0,271.8 L590.2,272.8 L593.1,274.4 L595.8,276.5 L598.1,278.9 L599.9,281.7 L601.4,284.8 L602.3,288.1 L602.7,291.5 L602.6,295.0 L591.7,394.9 L591.7,394.9 L591.1,398.4 L590.0,401.7 L588.4,404.8 L586.3,407.6 L583.9,410.1 L581.2,412.1 L578.2,413.7 L575.1,414.8 L571.8,415.4 L568.5,415.4 L450.2,406.8 L450.2,406.8 L446.9,406.3 L443.8,405.2 L440.9,403.7 L438.3,401.6 L436.0,399.2 L434.1,396.4 L432.6,393.3 L431.7,389.9 L431.2,386.5 L431.2,383.0 L439.4,281.8 L439.4,281.8 L440.0,278.3 L441.0,275.0 L442.6,271.8 L444.6,269.0 L446.9,266.5 L449.7,264.4 L452.7,262.9 L455.9,261.8 L459.2,261.2 L462.5,261.2Z"/><path d="M462.4,260.2 L583.8,270.2 L583.8,270.2 L587.1,270.7 L590.3,271.8 L593.2,273.4 L595.9,275.4 L598.2,277.9 L600.1,280.7 L601.5,283.8 L602.4,287.1 L602.8,290.5 L602.7,294.0 L591.8,393.9 L591.8,393.9 L591.2,397.3 L590.1,400.6 L588.5,403.7 L586.4,406.6 L584.0,409.0 L581.3,411.1 L578.3,412.7 L575.2,413.8 L571.9,414.4 L568.6,414.4 L450.1,405.8 L450.1,405.8 L446.8,405.3 L443.7,404.2 L440.8,402.6 L438.2,400.6 L435.9,398.2 L434.0,395.3 L432.5,392.2 L431.5,388.9 L431.0,385.4 L431.0,381.9 L439.3,280.7 L439.3,280.7 L439.8,277.3 L440.9,273.9 L442.4,270.8 L444.4,268.0 L446.8,265.5 L449.6,263.4 L452.6,261.8 L455.8,260.7 L459.1,260.2 L462.4,260.2Z"/><path d="M462.3,259.2 L583.9,269.2 L583.9,269.2 L587.2,269.7 L590.4,270.8 L593.3,272.4 L596.0,274.4 L598.3,276.9 L600.2,279.7 L601.6,282.7 L602.6,286.0 L603.0,289.5 L602.9,292.9 L591.9,392.9 L591.9,392.9 L591.3,396.3 L590.2,399.6 L588.6,402.7 L586.5,405.5 L584.1,408.0 L581.4,410.1 L578.4,411.7 L575.2,412.8 L572.0,413.4 L568.7,413.4 L449.9,404.7 L449.9,404.7 L446.7,404.2 L443.6,403.2 L440.7,401.6 L438.0,399.6 L435.7,397.1 L433.8,394.3 L432.4,391.2 L431.4,387.9 L430.9,384.4 L430.9,380.9 L439.2,279.7 L439.2,279.7 L439.7,276.2 L440.8,272.9 L442.3,269.8 L444.3,266.9 L446.7,264.5 L449.4,262.4 L452.4,260.8 L455.7,259.7 L459.0,259.2 L462.3,259.2Z"/><path d="M462.2,258.1 L584.0,268.1 L584.0,268.1 L587.3,268.7 L590.5,269.7 L593.5,271.3 L596.1,273.4 L598.4,275.8 L600.3,278.6 L601.8,281.7 L602.7,285.0 L603.1,288.4 L603.0,291.9 L592.1,391.9 L592.1,391.9 L591.4,395.3 L590.3,398.6 L588.7,401.7 L586.7,404.5 L584.2,407.0 L581.5,409.0 L578.5,410.6 L575.3,411.8 L572.1,412.3 L568.8,412.4 L449.8,403.7 L449.8,403.7 L446.6,403.2 L443.5,402.1 L440.5,400.6 L437.9,398.6 L435.6,396.1 L433.7,393.3 L432.2,390.2 L431.2,386.8 L430.7,383.4 L430.8,379.9 L439.0,278.7 L439.0,278.7 L439.6,275.2 L440.6,271.9 L442.2,268.7 L444.2,265.9 L446.6,263.4 L449.3,261.4 L452.3,259.8 L455.5,258.7 L458.9,258.1 L462.2,258.1Z"/><path d="M462.2,257.1 L584.1,267.1 L584.1,267.1 L587.4,267.6 L590.6,268.7 L593.6,270.3 L596.2,272.3 L598.6,274.8 L600.5,277.6 L601.9,280.7 L602.8,284.0 L603.2,287.4 L603.1,290.9 L592.2,390.8 L592.2,390.8 L591.5,394.3 L590.4,397.6 L588.8,400.7 L586.8,403.5 L584.3,406.0 L581.6,408.0 L578.6,409.6 L575.4,410.7 L572.1,411.3 L568.8,411.3 L449.7,402.7 L449.7,402.7 L446.5,402.2 L443.3,401.1 L440.4,399.6 L437.8,397.5 L435.5,395.1 L433.5,392.3 L432.1,389.1 L431.1,385.8 L430.6,382.4 L430.6,378.9 L438.9,277.7 L438.9,277.7 L439.5,274.2 L440.5,270.8 L442.1,267.7 L444.1,264.9 L446.5,262.4 L449.2,260.3 L452.2,258.7 L455.4,257.7 L458.8,257.1 L462.2,257.1Z"/><path d="M462.1,256.1 L584.2,266.1 L584.2,266.1 L587.5,266.6 L590.7,267.7 L593.7,269.3 L596.4,271.3 L598.7,273.8 L600.6,276.6 L602.0,279.7 L603.0,283.0 L603.4,286.4 L603.3,289.8 L592.3,389.8 L592.3,389.8 L591.7,393.2 L590.5,396.5 L588.9,399.6 L586.9,402.5 L584.4,404.9 L581.7,407.0 L578.7,408.6 L575.5,409.7 L572.2,410.3 L568.9,410.3 L449.6,401.6 L449.6,401.6 L446.3,401.1 L443.2,400.1 L440.3,398.5 L437.6,396.5 L435.3,394.0 L433.4,391.2 L431.9,388.1 L430.9,384.8 L430.4,381.3 L430.5,377.8 L438.8,276.6 L438.8,276.6 L439.3,273.2 L440.4,269.8 L441.9,266.7 L443.9,263.8 L446.3,261.4 L449.1,259.3 L452.1,257.7 L455.3,256.6 L458.7,256.1 L462.1,256.1Z"/><path d="M462.0,255.0 L584.3,265.0 L584.3,265.0 L587.6,265.6 L590.8,266.7 L593.8,268.2 L596.5,270.3 L598.8,272.7 L600.7,275.5 L602.1,278.6 L603.1,281.9 L603.5,285.4 L603.4,288.8 L592.4,388.8 L592.4,388.8 L591.8,392.2 L590.6,395.5 L589.0,398.6 L587.0,401.4 L584.5,403.9 L581.8,406.0 L578.8,407.6 L575.6,408.7 L572.3,409.2 L569.0,409.3 L449.5,400.6 L449.5,400.6 L446.2,400.1 L443.1,399.1 L440.2,397.5 L437.5,395.5 L435.2,393.0 L433.3,390.2 L431.8,387.1 L430.8,383.8 L430.3,380.3 L430.3,376.8 L438.6,275.6 L438.6,275.6 L439.2,272.1 L440.3,268.8 L441.8,265.7 L443.8,262.8 L446.2,260.3 L449.0,258.3 L452.0,256.7 L455.2,255.6 L458.6,255.0 L462.0,255.0Z"/><path d="M461.9,254.0 L584.4,264.0 L584.4,264.0 L587.8,264.6 L590.9,265.6 L593.9,267.2 L596.6,269.3 L598.9,271.7 L600.8,274.5 L602.3,277.6 L603.2,280.9 L603.6,284.3 L603.5,287.8 L592.5,387.7 L592.5,387.7 L591.9,391.2 L590.7,394.5 L589.1,397.6 L587.1,400.4 L584.6,402.9 L581.9,404.9 L578.9,406.5 L575.7,407.6 L572.4,408.2 L569.1,408.2 L449.4,399.6 L449.4,399.6 L446.1,399.1 L443.0,398.0 L440.0,396.5 L437.4,394.4 L435.0,392.0 L433.1,389.2 L431.6,386.1 L430.6,382.7 L430.2,379.3 L430.2,375.8 L438.5,274.6 L438.5,274.6 L439.1,271.1 L440.1,267.8 L441.7,264.6 L443.7,261.8 L446.1,259.3 L448.9,257.2 L451.9,255.7 L455.1,254.6 L458.5,254.0 L461.9,254.0Z"/><path d="M461.8,253.0 L584.5,263.0 L584.5,263.0 L587.9,263.5 L591.1,264.6 L594.0,266.2 L596.7,268.2 L599.1,270.7 L601.0,273.5 L602.4,276.6 L603.3,279.9 L603.8,283.3 L603.7,286.8 L592.6,386.7 L592.6,386.7 L592.0,390.1 L590.9,393.4 L589.2,396.5 L587.2,399.4 L584.7,401.8 L582.0,403.9 L579.0,405.5 L575.8,406.6 L572.5,407.2 L569.2,407.2 L449.3,398.6 L449.3,398.6 L446.0,398.0 L442.8,397.0 L439.9,395.4 L437.2,393.4 L434.9,391.0 L433.0,388.1 L431.5,385.0 L430.5,381.7 L430.0,378.2 L430.0,374.7 L438.4,273.5 L438.4,273.5 L438.9,270.1 L440.0,266.7 L441.6,263.6 L443.6,260.8 L446.0,258.3 L448.7,256.2 L451.8,254.6 L455.0,253.5 L458.4,253.0 L461.8,253.0Z"/><path d="M461.7,252.0 L584.6,262.0 L584.6,262.0 L588.0,262.5 L591.2,263.6 L594.2,265.2 L596.9,267.2 L599.2,269.6 L601.1,272.5 L602.5,275.5 L603.5,278.8 L603.9,282.3 L603.8,285.7 L592.8,385.7 L592.8,385.7 L592.1,389.1 L591.0,392.4 L589.3,395.5 L587.3,398.3 L584.9,400.8 L582.1,402.9 L579.1,404.5 L575.9,405.6 L572.6,406.2 L569.2,406.2 L449.1,397.5 L449.1,397.5 L445.9,397.0 L442.7,396.0 L439.8,394.4 L437.1,392.4 L434.8,389.9 L432.8,387.1 L431.4,384.0 L430.4,380.7 L429.9,377.2 L429.9,373.7 L438.2,272.5 L438.2,272.5 L438.8,269.0 L439.9,265.7 L441.4,262.6 L443.4,259.7 L445.9,257.2 L448.6,255.2 L451.7,253.6 L454.9,252.5 L458.3,252.0 L461.7,252.0Z"/><path d="M461.6,250.9 L584.7,260.9 L584.7,260.9 L588.1,261.5 L591.3,262.5 L594.3,264.1 L597.0,266.2 L599.3,268.6 L601.2,271.4 L602.7,274.5 L603.6,277.8 L604.0,281.2 L603.9,284.7 L592.9,384.7 L592.9,384.7 L592.2,388.1 L591.1,391.4 L589.5,394.5 L587.4,397.3 L585.0,399.8 L582.2,401.8 L579.2,403.4 L576.0,404.5 L572.6,405.1 L569.3,405.2 L449.0,396.5 L449.0,396.5 L445.7,396.0 L442.6,394.9 L439.6,393.4 L437.0,391.3 L434.6,388.9 L432.7,386.1 L431.2,383.0 L430.2,379.6 L429.7,376.2 L429.7,372.7 L438.1,271.5 L438.1,271.5 L438.7,268.0 L439.7,264.7 L441.3,261.5 L443.3,258.7 L445.7,256.2 L448.5,254.2 L451.6,252.6 L454.8,251.5 L458.2,250.9 L461.6,250.9Z"/><path d="M461.5,249.9 L584.8,259.9 L584.8,259.9 L588.2,260.4 L591.4,261.5 L594.4,263.1 L597.1,265.1 L599.4,267.6 L601.4,270.4 L602.8,273.5 L603.7,276.8 L604.2,280.2 L604.1,283.7 L593.0,383.6 L593.0,383.6 L592.3,387.0 L591.2,390.4 L589.6,393.5 L587.5,396.3 L585.1,398.7 L582.3,400.8 L579.3,402.4 L576.0,403.5 L572.7,404.1 L569.4,404.1 L448.9,395.5 L448.9,395.5 L445.6,395.0 L442.5,393.9 L439.5,392.3 L436.8,390.3 L434.5,387.9 L432.6,385.0 L431.1,381.9 L430.1,378.6 L429.6,375.2 L429.6,371.6 L438.0,270.4 L438.0,270.4 L438.5,267.0 L439.6,263.6 L441.2,260.5 L443.2,257.7 L445.6,255.2 L448.4,253.1 L451.5,251.5 L454.7,250.4 L458.1,249.9 L461.5,249.9Z"/><path d="M461.4,248.9 L584.9,258.9 L584.9,258.9 L588.3,259.4 L591.5,260.5 L594.5,262.1 L597.2,264.1 L599.6,266.6 L601.5,269.4 L602.9,272.5 L603.9,275.8 L604.3,279.2 L604.2,282.6 L593.1,382.6 L593.1,382.6 L592.5,386.0 L591.3,389.3 L589.7,392.4 L587.6,395.2 L585.2,397.7 L582.4,399.8 L579.3,401.4 L576.1,402.5 L572.8,403.1 L569.5,403.1 L448.8,394.4 L448.8,394.4 L445.5,393.9 L442.3,392.9 L439.4,391.3 L436.7,389.3 L434.4,386.8 L432.4,384.0 L430.9,380.9 L429.9,377.6 L429.4,374.1 L429.5,370.6 L437.9,269.4 L437.9,269.4 L438.4,265.9 L439.5,262.6 L441.1,259.5 L443.1,256.6 L445.5,254.2 L448.3,252.1 L451.3,250.5 L454.6,249.4 L458.0,248.9 L461.4,248.9Z"/><path d="M461.3,247.8 L585.0,257.8 L585.0,257.8 L588.4,258.4 L591.6,259.5 L594.6,261.0 L597.3,263.1 L599.7,265.5 L601.6,268.3 L603.1,271.4 L604.0,274.7 L604.4,278.1 L604.3,281.6 L593.2,381.6 L593.2,381.6 L592.6,385.0 L591.4,388.3 L589.8,391.4 L587.7,394.2 L585.3,396.7 L582.5,398.8 L579.4,400.4 L576.2,401.5 L572.9,402.0 L569.5,402.1 L448.7,393.4 L448.7,393.4 L445.4,392.9 L442.2,391.8 L439.3,390.3 L436.6,388.3 L434.2,385.8 L432.3,383.0 L430.8,379.9 L429.8,376.6 L429.3,373.1 L429.3,369.6 L437.7,268.4 L437.7,268.4 L438.3,264.9 L439.4,261.6 L440.9,258.5 L443.0,255.6 L445.4,253.1 L448.2,251.1 L451.2,249.5 L454.5,248.4 L457.9,247.8 L461.3,247.8Z"/><path d="M461.2,246.8 L585.1,256.8 L585.1,256.8 L588.5,257.3 L591.7,258.4 L594.8,260.0 L597.5,262.0 L599.8,264.5 L601.7,267.3 L603.2,270.4 L604.1,273.7 L604.6,277.1 L604.4,280.6 L593.3,380.5 L593.3,380.5 L592.7,384.0 L591.5,387.3 L589.9,390.4 L587.8,393.2 L585.4,395.7 L582.6,397.7 L579.5,399.3 L576.3,400.4 L573.0,401.0 L569.6,401.0 L448.6,392.4 L448.6,392.4 L445.3,391.9 L442.1,390.8 L439.1,389.3 L436.4,387.2 L434.1,384.8 L432.1,382.0 L430.6,378.9 L429.6,375.5 L429.1,372.1 L429.2,368.6 L437.6,267.4 L437.6,267.4 L438.1,263.9 L439.2,260.6 L440.8,257.4 L442.8,254.6 L445.3,252.1 L448.1,250.0 L451.1,248.4 L454.4,247.4 L457.8,246.8 L461.2,246.8Z"/><path d="M461.1,245.8 L585.2,255.8 L585.2,255.8 L588.6,256.3 L591.9,257.4 L594.9,259.0 L597.6,261.0 L599.9,263.5 L601.9,266.3 L603.3,269.4 L604.3,272.7 L604.7,276.1 L604.6,279.6 L593.4,379.5 L593.4,379.5 L592.8,382.9 L591.6,386.2 L590.0,389.3 L587.9,392.2 L585.5,394.6 L582.7,396.7 L579.6,398.3 L576.4,399.4 L573.1,400.0 L569.7,400.0 L448.5,391.4 L448.5,391.4 L445.2,390.8 L442.0,389.8 L439.0,388.2 L436.3,386.2 L434.0,383.7 L432.0,380.9 L430.5,377.8 L429.5,374.5 L429.0,371.0 L429.0,367.5 L437.5,266.3 L437.5,266.3 L438.0,262.9 L439.1,259.5 L440.7,256.4 L442.7,253.6 L445.1,251.1 L447.9,249.0 L451.0,247.4 L454.3,246.3 L457.7,245.8 L461.1,245.8Z"/><path d="M461.0,244.8 L585.3,254.7 L585.3,254.7 L588.7,255.3 L592.0,256.4 L595.0,257.9 L597.7,260.0 L600.1,262.4 L602.0,265.2 L603.5,268.3 L604.4,271.6 L604.8,275.1 L604.7,278.5 L593.6,378.5 L593.6,378.5 L592.9,381.9 L591.8,385.2 L590.1,388.3 L588.0,391.1 L585.6,393.6 L582.8,395.7 L579.7,397.3 L576.5,398.4 L573.1,398.9 L569.8,399.0 L448.3,390.3 L448.3,390.3 L445.0,389.8 L441.8,388.8 L438.9,387.2 L436.2,385.2 L433.8,382.7 L431.9,379.9 L430.4,376.8 L429.3,373.5 L428.8,370.0 L428.9,366.5 L437.3,265.3 L437.3,265.3 L437.9,261.8 L439.0,258.5 L440.5,255.4 L442.6,252.5 L445.0,250.0 L447.8,248.0 L450.9,246.4 L454.2,245.3 L457.6,244.8 L461.0,244.8Z"/><path d="M460.9,243.7 L585.4,253.7 L585.4,253.7 L588.8,254.3 L592.1,255.3 L595.1,256.9 L597.8,259.0 L600.2,261.4 L602.1,264.2 L603.6,267.3 L604.5,270.6 L605.0,274.0 L604.8,277.5 L593.7,377.4 L593.7,377.4 L593.0,380.9 L591.9,384.2 L590.2,387.3 L588.1,390.1 L585.7,392.6 L582.9,394.6 L579.8,396.2 L576.6,397.3 L573.2,397.9 L569.9,397.9 L448.2,389.3 L448.2,389.3 L444.9,388.8 L441.7,387.7 L438.7,386.2 L436.0,384.1 L433.7,381.7 L431.7,378.9 L430.2,375.8 L429.2,372.4 L428.7,369.0 L428.7,365.5 L437.2,264.3 L437.2,264.3 L437.8,260.8 L438.8,257.5 L440.4,254.3 L442.5,251.5 L444.9,249.0 L447.7,246.9 L450.8,245.4 L454.1,244.3 L457.5,243.7 L460.9,243.7Z"/><path d="M460.8,242.7 L585.5,252.7 L585.5,252.7 L588.9,253.2 L592.2,254.3 L595.2,255.9 L598.0,257.9 L600.3,260.4 L602.3,263.2 L603.7,266.3 L604.7,269.6 L605.1,273.0 L605.0,276.5 L593.8,376.4 L593.8,376.4 L593.1,379.8 L592.0,383.1 L590.3,386.2 L588.3,389.1 L585.8,391.5 L583.0,393.6 L579.9,395.2 L576.7,396.3 L573.3,396.9 L569.9,396.9 L448.1,388.3 L448.1,388.3 L444.8,387.8 L441.6,386.7 L438.6,385.1 L435.9,383.1 L433.5,380.7 L431.6,377.8 L430.1,374.7 L429.1,371.4 L428.6,367.9 L428.6,364.4 L437.1,263.2 L437.1,263.2 L437.6,259.8 L438.7,256.4 L440.3,253.3 L442.3,250.5 L444.8,248.0 L447.6,245.9 L450.7,244.3 L454.0,243.2 L457.4,242.7 L460.8,242.7Z"/><path d="M460.7,241.7 L585.6,251.7 L585.6,251.7 L589.0,252.2 L592.3,253.3 L595.3,254.9 L598.1,256.9 L600.4,259.4 L602.4,262.2 L603.8,265.2 L604.8,268.5 L605.2,272.0 L605.1,275.4 L593.9,375.4 L593.9,375.4 L593.3,378.8 L592.1,382.1 L590.4,385.2 L588.4,388.0 L585.9,390.5 L583.1,392.6 L580.0,394.2 L576.7,395.3 L573.4,395.9 L570.0,395.9 L448.0,387.2 L448.0,387.2 L444.7,386.7 L441.5,385.7 L438.5,384.1 L435.8,382.1 L433.4,379.6 L431.4,376.8 L429.9,373.7 L428.9,370.4 L428.4,366.9 L428.4,363.4 L436.9,262.2 L436.9,262.2 L437.5,258.7 L438.6,255.4 L440.2,252.3 L442.2,249.4 L444.7,247.0 L447.5,244.9 L450.6,243.3 L453.9,242.2 L457.3,241.7 L460.7,241.7Z"/><path d="M460.6,240.6 L585.7,250.6 L585.7,250.6 L589.2,251.2 L592.4,252.2 L595.5,253.8 L598.2,255.9 L600.6,258.3 L602.5,261.1 L604.0,264.2 L604.9,267.5 L605.4,270.9 L605.2,274.4 L594.0,374.4 L594.0,374.4 L593.4,377.8 L592.2,381.1 L590.6,384.2 L588.5,387.0 L586.0,389.5 L583.2,391.5 L580.1,393.1 L576.8,394.3 L573.5,394.8 L570.1,394.9 L447.9,386.2 L447.9,386.2 L444.6,385.7 L441.3,384.6 L438.4,383.1 L435.6,381.1 L433.3,378.6 L431.3,375.8 L429.8,372.7 L428.8,369.3 L428.3,365.9 L428.3,362.4 L436.8,261.2 L436.8,261.2 L437.4,257.7 L438.5,254.4 L440.0,251.2 L442.1,248.4 L444.6,245.9 L447.4,243.9 L450.5,242.3 L453.8,241.2 L457.2,240.6 L460.6,240.6Z"/><path d="M460.6,239.6 L585.8,249.6 L585.8,249.6 L589.3,250.1 L592.5,251.2 L595.6,252.8 L598.3,254.8 L600.7,257.3 L602.6,260.1 L604.1,263.2 L605.1,266.5 L605.5,269.9 L605.4,273.4 L594.1,373.3 L594.1,373.3 L593.5,376.8 L592.3,380.1 L590.7,383.2 L588.6,386.0 L586.1,388.5 L583.3,390.5 L580.2,392.1 L576.9,393.2 L573.6,393.8 L570.2,393.8 L447.8,385.2 L447.8,385.2 L444.4,384.7 L441.2,383.6 L438.2,382.1 L435.5,380.0 L433.1,377.6 L431.2,374.8 L429.6,371.6 L428.6,368.3 L428.1,364.9 L428.2,361.4 L436.7,260.2 L436.7,260.2 L437.2,256.7 L438.3,253.3 L439.9,250.2 L442.0,247.4 L444.4,244.9 L447.3,242.8 L450.4,241.2 L453.7,240.2 L457.1,239.6 L460.6,239.6Z"/><path d="M460.5,238.6 L585.9,248.6 L585.9,248.6 L589.4,249.1 L592.6,250.2 L595.7,251.8 L598.4,253.8 L600.8,256.3 L602.8,259.1 L604.2,262.2 L605.2,265.5 L605.6,268.9 L605.5,272.3 L594.3,372.3 L594.3,372.3 L593.6,375.7 L592.4,379.0 L590.8,382.1 L588.7,385.0 L586.2,387.4 L583.4,389.5 L580.3,391.1 L577.0,392.2 L573.6,392.8 L570.2,392.8 L447.7,384.1 L447.7,384.1 L444.3,383.6 L441.1,382.6 L438.1,381.0 L435.4,379.0 L433.0,376.5 L431.0,373.7 L429.5,370.6 L428.5,367.3 L428.0,363.8 L428.0,360.3 L436.5,259.1 L436.5,259.1 L437.1,255.7 L438.2,252.3 L439.8,249.2 L441.8,246.3 L444.3,243.9 L447.1,241.8 L450.2,240.2 L453.6,239.1 L457.0,238.6 L460.5,238.6Z"/><path d="M460.4,237.5 L586.1,247.5 L586.1,247.5 L589.5,248.1 L592.8,249.2 L595.8,250.7 L598.6,252.8 L600.9,255.2 L602.9,258.0 L604.4,261.1 L605.3,264.4 L605.8,267.9 L605.6,271.3 L594.4,371.3 L594.4,371.3 L593.7,374.7 L592.5,378.0 L590.9,381.1 L588.8,383.9 L586.3,386.4 L583.5,388.5 L580.4,390.1 L577.1,391.2 L573.7,391.7 L570.3,391.8 L447.5,383.1 L447.5,383.1 L444.2,382.6 L441.0,381.6 L438.0,380.0 L435.2,378.0 L432.9,375.5 L430.9,372.7 L429.4,369.6 L428.3,366.3 L427.8,362.8 L427.9,359.3 L436.4,258.1 L436.4,258.1 L437.0,254.6 L438.1,251.3 L439.7,248.2 L441.7,245.3 L444.2,242.8 L447.0,240.8 L450.1,239.2 L453.4,238.1 L456.9,237.5 L460.4,237.5Z"/><path d="M460.3,236.5 L586.2,246.5 L586.2,246.5 L589.6,247.1 L592.9,248.1 L595.9,249.7 L598.7,251.8 L601.1,254.2 L603.0,257.0 L604.5,260.1 L605.5,263.4 L605.9,266.8 L605.8,270.3 L594.5,370.2 L594.5,370.2 L593.8,373.7 L592.7,377.0 L591.0,380.1 L588.9,382.9 L586.4,385.4 L583.6,387.4 L580.5,389.0 L577.2,390.1 L573.8,390.7 L570.4,390.7 L447.4,382.1 L447.4,382.1 L444.1,381.6 L440.9,380.5 L437.8,379.0 L435.1,376.9 L432.7,374.5 L430.7,371.7 L429.2,368.6 L428.2,365.2 L427.7,361.8 L427.7,358.3 L436.3,257.1 L436.3,257.1 L436.8,253.6 L437.9,250.3 L439.5,247.1 L441.6,244.3 L444.1,241.8 L446.9,239.7 L450.0,238.2 L453.3,237.1 L456.8,236.5 L460.3,236.5Z"/><path d="M460.2,235.5 L586.3,245.5 L586.3,245.5 L589.7,246.0 L593.0,247.1 L596.0,248.7 L598.8,250.7 L601.2,253.2 L603.2,256.0 L604.6,259.1 L605.6,262.4 L606.0,265.8 L605.9,269.3 L594.6,369.2 L594.6,369.2 L593.9,372.6 L592.8,375.9 L591.1,379.0 L589.0,381.9 L586.5,384.3 L583.7,386.4 L580.6,388.0 L577.3,389.1 L573.9,389.7 L570.5,389.7 L447.3,381.1 L447.3,381.1 L444.0,380.5 L440.7,379.5 L437.7,377.9 L435.0,375.9 L432.6,373.5 L430.6,370.6 L429.1,367.5 L428.0,364.2 L427.5,360.7 L427.6,357.2 L436.1,256.0 L436.1,256.0 L436.7,252.6 L437.8,249.2 L439.4,246.1 L441.5,243.3 L444.0,240.8 L446.8,238.7 L449.9,237.1 L453.2,236.0 L456.7,235.5 L460.2,235.5Z"/><path d="M460.1,234.5 L586.4,244.5 L586.4,244.5 L589.8,245.0 L593.1,246.1 L596.2,247.7 L598.9,249.7 L601.3,252.1 L603.3,255.0 L604.8,258.0 L605.7,261.3 L606.2,264.8 L606.0,268.2 L594.7,368.2 L594.7,368.2 L594.1,371.6 L592.9,374.9 L591.2,378.0 L589.1,380.8 L586.6,383.3 L583.8,385.4 L580.7,387.0 L577.4,388.1 L574.0,388.7 L570.6,388.7 L447.2,380.0 L447.2,380.0 L443.8,379.5 L440.6,378.5 L437.6,376.9 L434.8,374.9 L432.4,372.4 L430.5,369.6 L428.9,366.5 L427.9,363.2 L427.4,359.7 L427.4,356.2 L436.0,255.0 L436.0,255.0 L436.6,251.5 L437.7,248.2 L439.3,245.1 L441.4,242.2 L443.8,239.7 L446.7,237.7 L449.8,236.1 L453.1,235.0 L456.6,234.5 L460.1,234.5Z"/><path d="M460.0,233.4 L586.5,243.4 L586.5,243.4 L589.9,244.0 L593.2,245.0 L596.3,246.6 L599.0,248.7 L601.4,251.1 L603.4,253.9 L604.9,257.0 L605.9,260.3 L606.3,263.7 L606.2,267.2 L594.8,367.2 L594.8,367.2 L594.2,370.6 L593.0,373.9 L591.3,377.0 L589.2,379.8 L586.7,382.3 L583.9,384.3 L580.7,385.9 L577.5,387.0 L574.1,387.6 L570.6,387.7 L447.1,379.0 L447.1,379.0 L443.7,378.5 L440.5,377.4 L437.4,375.9 L434.7,373.8 L432.3,371.4 L430.3,368.6 L428.8,365.5 L427.8,362.1 L427.3,358.7 L427.3,355.2 L435.9,254.0 L435.9,254.0 L436.4,250.5 L437.5,247.2 L439.2,244.0 L441.2,241.2 L443.7,238.7 L446.6,236.7 L449.7,235.1 L453.0,234.0 L456.5,233.4 L460.0,233.4Z"/><path d="M459.9,232.4 L586.6,242.4 L586.6,242.4 L590.0,242.9 L593.3,244.0 L596.4,245.6 L599.2,247.6 L601.6,250.1 L603.5,252.9 L605.0,256.0 L606.0,259.3 L606.4,262.7 L606.3,266.2 L594.9,366.1 L594.9,366.1 L594.3,369.5 L593.1,372.9 L591.4,376.0 L589.3,378.8 L586.8,381.2 L584.0,383.3 L580.8,384.9 L577.5,386.0 L574.1,386.6 L570.7,386.6 L447.0,378.0 L447.0,378.0 L443.6,377.5 L440.4,376.4 L437.3,374.8 L434.6,372.8 L432.2,370.4 L430.2,367.5 L428.6,364.4 L427.6,361.1 L427.1,357.7 L427.1,354.1 L435.7,252.9 L435.7,252.9 L436.3,249.5 L437.4,246.1 L439.0,243.0 L441.1,240.2 L443.6,237.7 L446.4,235.6 L449.6,234.0 L452.9,232.9 L456.4,232.4 L459.9,232.4Z"/><path d="M459.8,231.4 L586.7,241.4 L586.7,241.4 L590.1,241.9 L593.4,243.0 L596.5,244.6 L599.3,246.6 L601.7,249.1 L603.7,251.9 L605.2,255.0 L606.1,258.3 L606.6,261.7 L606.4,265.1 L595.1,365.1 L595.1,365.1 L594.4,368.5 L593.2,371.8 L591.5,374.9 L589.4,377.7 L586.9,380.2 L584.1,382.3 L580.9,383.9 L577.6,385.0 L574.2,385.6 L570.8,385.6 L446.9,376.9 L446.9,376.9 L443.5,376.4 L440.2,375.4 L437.2,373.8 L434.4,371.8 L432.0,369.3 L430.0,366.5 L428.5,363.4 L427.5,360.1 L427.0,356.6 L427.0,353.1 L435.6,251.9 L435.6,251.9 L436.2,248.4 L437.3,245.1 L438.9,242.0 L441.0,239.1 L443.5,236.7 L446.3,234.6 L449.5,233.0 L452.8,231.9 L456.3,231.4 L459.8,231.4Z"/><path d="M459.7,230.3 L586.8,240.3 L586.8,240.3 L590.2,240.9 L593.5,242.0 L596.6,243.5 L599.4,245.6 L601.8,248.0 L603.8,250.8 L605.3,253.9 L606.3,257.2 L606.7,260.6 L606.6,264.1 L595.2,364.1 L595.2,364.1 L594.5,367.5 L593.3,370.8 L591.7,373.9 L589.5,376.7 L587.0,379.2 L584.2,381.3 L581.0,382.9 L577.7,384.0 L574.3,384.5 L570.9,384.6 L446.7,375.9 L446.7,375.9 L443.4,375.4 L440.1,374.3 L437.1,372.8 L434.3,370.8 L431.9,368.3 L429.9,365.5 L428.4,362.4 L427.3,359.1 L426.8,355.6 L426.8,352.1 L435.5,250.9 L435.5,250.9 L436.1,247.4 L437.2,244.1 L438.8,241.0 L440.9,238.1 L443.4,235.6 L446.2,233.6 L449.4,232.0 L452.7,230.9 L456.2,230.3 L459.7,230.3Z"/><path d="M459.6,229.3 L586.9,239.3 L586.9,239.3 L590.3,239.8 L593.7,240.9 L596.8,242.5 L599.5,244.5 L601.9,247.0 L603.9,249.8 L605.4,252.9 L606.4,256.2 L606.8,259.6 L606.7,263.1 L595.3,363.0 L595.3,363.0 L594.6,366.5 L593.4,369.8 L591.8,372.9 L589.6,375.7 L587.1,378.2 L584.2,380.2 L581.1,381.8 L577.8,382.9 L574.4,383.5 L570.9,383.5 L446.6,374.9 L446.6,374.9 L443.2,374.4 L440.0,373.3 L436.9,371.8 L434.2,369.7 L431.8,367.3 L429.8,364.5 L428.2,361.4 L427.2,358.0 L426.7,354.6 L426.7,351.1 L435.4,249.9 L435.4,249.9 L435.9,246.4 L437.0,243.1 L438.6,239.9 L440.7,237.1 L443.2,234.6 L446.1,232.5 L449.3,230.9 L452.6,229.9 L456.1,229.3 L459.6,229.3Z"/><path d="M459.5,228.3 L587.0,238.3 L587.0,238.3 L590.4,238.8 L593.8,239.9 L596.9,241.5 L599.7,243.5 L602.1,246.0 L604.1,248.8 L605.6,251.9 L606.5,255.2 L607.0,258.6 L606.8,262.1 L595.4,362.0 L595.4,362.0 L594.7,365.4 L593.6,368.7 L591.9,371.8 L589.7,374.7 L587.2,377.1 L584.3,379.2 L581.2,380.8 L577.9,381.9 L574.5,382.5 L571.0,382.5 L446.5,373.9 L446.5,373.9 L443.1,373.3 L439.9,372.3 L436.8,370.7 L434.0,368.7 L431.6,366.2 L429.6,363.4 L428.1,360.3 L427.0,357.0 L426.5,353.5 L426.6,350.0 L435.2,248.8 L435.2,248.8 L435.8,245.4 L436.9,242.0 L438.5,238.9 L440.6,236.1 L443.1,233.6 L446.0,231.5 L449.1,229.9 L452.5,228.8 L456.0,228.3 L459.5,228.3Z"/><path d="M459.4,227.3 L587.1,237.2 L587.1,237.2 L590.6,237.8 L593.9,238.9 L597.0,240.4 L599.8,242.5 L602.2,244.9 L604.2,247.7 L605.7,250.8 L606.7,254.1 L607.1,257.6 L607.0,261.0 L595.5,361.0 L595.5,361.0 L594.9,364.4 L593.7,367.7 L592.0,370.8 L589.9,373.6 L587.3,376.1 L584.4,378.2 L581.3,379.8 L578.0,380.9 L574.6,381.4 L571.1,381.5 L446.4,372.8 L446.4,372.8 L443.0,372.3 L439.7,371.3 L436.7,369.7 L433.9,367.7 L431.5,365.2 L429.5,362.4 L427.9,359.3 L426.9,356.0 L426.4,352.5 L426.4,349.0 L435.1,247.8 L435.1,247.8 L435.7,244.3 L436.8,241.0 L438.4,237.9 L440.5,235.0 L443.0,232.5 L445.9,230.5 L449.0,228.9 L452.4,227.8 L455.9,227.3 L459.4,227.3Z"/></g>
<path d="M459.4,227.3 L587.1,237.2 L587.1,237.2 L590.6,237.8 L593.9,238.9 L597.0,240.4 L599.8,242.5 L602.2,244.9 L604.2,247.7 L605.7,250.8 L606.7,254.1 L607.1,257.6 L607.0,261.0 L595.5,361.0 L595.5,361.0 L594.9,364.4 L593.7,367.7 L592.0,370.8 L589.9,373.6 L587.3,376.1 L584.4,378.2 L581.3,379.8 L578.0,380.9 L574.6,381.4 L571.1,381.5 L446.4,372.8 L446.4,372.8 L443.0,372.3 L439.7,371.3 L436.7,369.7 L433.9,367.7 L431.5,365.2 L429.5,362.4 L427.9,359.3 L426.9,356.0 L426.4,352.5 L426.4,349.0 L435.1,247.8 L435.1,247.8 L435.7,244.3 L436.8,241.0 L438.4,237.9 L440.5,235.0 L443.0,232.5 L445.9,230.5 L449.0,228.9 L452.4,227.8 L455.9,227.3 L459.4,227.3Z" fill="#d91b27" stroke="#3b4a63" stroke-width="1.2"/>
<g fill="none" stroke="#1ec8f5" stroke-width="7.5" stroke-linejoin="round"><path d="M285.5,246.3 L383.1,254.6 L383.1,254.6 L388.5,255.4 L393.7,257.0 L398.6,259.3 L403.0,262.3 L406.8,265.8 L410.0,269.8 L412.4,274.2 L414.0,278.9 L414.8,283.8 L414.7,288.7 L399.1,438.7 L399.1,438.7 L398.3,442.9 L396.7,446.9 L394.5,450.7 L391.6,454.1 L388.2,457.1 L384.3,459.5 L380.0,461.4 L375.5,462.7 L370.7,463.3 L366.0,463.2 L342.6,461.2 L342.6,461.2 L341.7,467.2 L339.6,472.9 L336.1,478.0 L331.6,482.5 L326.2,486.0 L320.0,488.4 L313.5,489.7 L306.8,489.8 L300.2,488.6 L294.0,486.2 L288.5,482.8 L283.8,478.5 L280.3,473.3 L278.0,467.7 L277.1,461.8 L277.5,455.8 L254.1,453.8 L254.1,453.8 L249.4,453.1 L244.9,451.7 L240.7,449.7 L236.9,447.1 L233.5,444.1 L230.8,440.6 L228.7,436.8 L227.3,432.7 L226.6,428.5 L226.7,424.2 L242.2,278.4 L242.2,278.4 L243.3,272.9 L245.3,267.6 L248.2,262.7 L252.0,258.2 L256.5,254.3 L261.6,251.1 L267.2,248.7 L273.1,247.0 L279.3,246.2 L285.5,246.3Z"/><path d="M285.5,244.3 L383.1,252.6 L383.1,252.6 L388.5,253.4 L393.7,255.0 L398.6,257.3 L403.0,260.2 L406.8,263.8 L410.0,267.8 L412.4,272.2 L414.1,276.9 L414.8,281.8 L414.8,286.7 L399.2,436.7 L399.2,436.7 L398.4,440.9 L396.9,444.9 L394.6,448.7 L391.8,452.1 L388.4,455.1 L384.5,457.5 L380.2,459.4 L375.6,460.7 L370.9,461.3 L366.1,461.2 L342.7,459.2 L342.7,459.2 L341.9,465.2 L339.7,470.9 L336.3,476.0 L331.7,480.5 L326.3,484.0 L320.2,486.4 L313.6,487.7 L306.9,487.8 L300.3,486.6 L294.1,484.2 L288.6,480.8 L283.9,476.5 L280.4,471.3 L278.1,465.7 L277.2,459.8 L277.6,453.8 L254.2,451.8 L254.2,451.8 L249.5,451.1 L245.0,449.7 L240.7,447.7 L236.9,445.1 L233.6,442.1 L230.8,438.6 L228.7,434.8 L227.3,430.7 L226.7,426.5 L226.7,422.2 L242.2,276.4 L242.2,276.4 L243.3,270.9 L245.3,265.6 L248.2,260.7 L251.9,256.2 L256.4,252.3 L261.5,249.1 L267.1,246.7 L273.1,245.0 L279.2,244.2 L285.5,244.3Z"/><path d="M285.4,242.3 L383.1,250.5 L383.1,250.5 L388.5,251.4 L393.7,253.0 L398.6,255.3 L403.0,258.2 L406.8,261.8 L410.0,265.8 L412.4,270.2 L414.1,274.9 L414.9,279.8 L414.8,284.7 L399.4,434.7 L399.4,434.7 L398.5,438.9 L397.0,442.9 L394.8,446.7 L391.9,450.1 L388.5,453.1 L384.6,455.5 L380.3,457.4 L375.7,458.7 L371.0,459.3 L366.2,459.2 L342.8,457.2 L342.8,457.2 L342.0,463.2 L339.8,468.9 L336.4,474.0 L331.9,478.5 L326.4,482.0 L320.3,484.4 L313.7,485.7 L307.0,485.8 L300.4,484.6 L294.2,482.2 L288.7,478.8 L284.0,474.5 L280.5,469.3 L278.2,463.7 L277.2,457.8 L277.7,451.8 L254.2,449.8 L254.2,449.8 L249.5,449.1 L245.0,447.7 L240.8,445.7 L237.0,443.1 L233.6,440.1 L230.9,436.6 L228.8,432.8 L227.4,428.7 L226.7,424.5 L226.8,420.2 L242.1,274.4 L242.1,274.4 L243.2,268.9 L245.2,263.6 L248.2,258.7 L251.9,254.2 L256.4,250.3 L261.5,247.1 L267.1,244.7 L273.0,243.0 L279.2,242.2 L285.4,242.3Z"/><path d="M285.4,240.3 L383.1,248.5 L383.1,248.5 L388.5,249.4 L393.7,251.0 L398.6,253.3 L403.0,256.2 L406.8,259.8 L410.0,263.8 L412.5,268.2 L414.1,272.9 L414.9,277.8 L414.8,282.7 L399.5,432.7 L399.5,432.7 L398.7,436.9 L397.1,440.9 L394.9,444.7 L392.1,448.1 L388.6,451.1 L384.7,453.5 L380.5,455.4 L375.9,456.7 L371.2,457.3 L366.4,457.2 L342.9,455.2 L342.9,455.2 L342.1,461.2 L339.9,466.9 L336.5,472.0 L332.0,476.5 L326.5,480.0 L320.4,482.4 L313.8,483.7 L307.1,483.8 L300.5,482.6 L294.3,480.2 L288.8,476.8 L284.1,472.5 L280.6,467.3 L278.3,461.7 L277.3,455.8 L277.7,449.8 L254.3,447.8 L254.3,447.8 L249.6,447.1 L245.1,445.7 L240.8,443.7 L237.0,441.1 L233.7,438.1 L230.9,434.6 L228.8,430.8 L227.4,426.7 L226.7,422.5 L226.8,418.2 L242.1,272.4 L242.1,272.4 L243.2,266.9 L245.2,261.6 L248.1,256.7 L251.8,252.2 L256.3,248.3 L261.4,245.1 L267.0,242.7 L273.0,241.0 L279.1,240.2 L285.4,240.3Z"/><path d="M285.3,238.3 L383.1,246.5 L383.1,246.5 L388.5,247.4 L393.7,249.0 L398.6,251.3 L403.0,254.2 L406.8,257.7 L410.0,261.8 L412.5,266.2 L414.1,270.9 L414.9,275.8 L414.8,280.7 L399.6,430.7 L399.6,430.7 L398.8,434.9 L397.3,438.9 L395.1,442.7 L392.2,446.1 L388.8,449.1 L384.9,451.5 L380.6,453.4 L376.0,454.7 L371.3,455.3 L366.5,455.2 L343.1,453.2 L343.1,453.2 L342.2,459.2 L340.1,464.9 L336.7,470.0 L332.1,474.5 L326.7,478.0 L320.5,480.4 L314.0,481.7 L307.2,481.8 L300.6,480.6 L294.4,478.2 L288.9,474.8 L284.2,470.5 L280.7,465.3 L278.4,459.7 L277.4,453.8 L277.8,447.8 L254.4,445.8 L254.4,445.8 L249.7,445.1 L245.1,443.7 L240.9,441.7 L237.1,439.1 L233.7,436.1 L231.0,432.6 L228.9,428.8 L227.4,424.7 L226.8,420.5 L226.8,416.2 L242.1,270.4 L242.1,270.4 L243.1,264.9 L245.1,259.6 L248.1,254.7 L251.8,250.2 L256.3,246.3 L261.4,243.1 L267.0,240.7 L272.9,239.0 L279.1,238.2 L285.3,238.3Z"/><path d="M285.3,236.3 L383.1,244.5 L383.1,244.5 L388.5,245.4 L393.7,246.9 L398.6,249.2 L403.0,252.2 L406.8,255.7 L410.0,259.8 L412.5,264.2 L414.1,268.9 L414.9,273.8 L414.9,278.7 L399.8,428.7 L399.8,428.7 L399.0,432.9 L397.4,436.9 L395.2,440.7 L392.3,444.1 L388.9,447.1 L385.0,449.5 L380.7,451.4 L376.2,452.7 L371.4,453.3 L366.6,453.2 L343.2,451.2 L343.2,451.2 L342.4,457.2 L340.2,462.9 L336.8,468.0 L332.3,472.5 L326.8,476.0 L320.7,478.4 L314.1,479.7 L307.3,479.8 L300.7,478.6 L294.5,476.2 L289.0,472.8 L284.3,468.5 L280.8,463.3 L278.5,457.7 L277.5,451.8 L277.9,445.8 L254.4,443.8 L254.4,443.8 L249.7,443.1 L245.2,441.7 L240.9,439.7 L237.1,437.1 L233.8,434.1 L231.0,430.6 L228.9,426.8 L227.5,422.7 L226.8,418.5 L226.9,414.2 L242.0,268.4 L242.0,268.4 L243.1,262.9 L245.1,257.6 L248.0,252.7 L251.7,248.2 L256.2,244.3 L261.3,241.1 L266.9,238.7 L272.9,237.0 L279.1,236.2 L285.3,236.3Z"/><path d="M285.2,234.3 L383.1,242.5 L383.1,242.5 L388.5,243.3 L393.7,244.9 L398.6,247.2 L403.0,250.2 L406.9,253.7 L410.0,257.8 L412.5,262.2 L414.1,266.9 L414.9,271.8 L414.9,276.7 L399.9,426.7 L399.9,426.7 L399.1,430.9 L397.6,434.9 L395.3,438.7 L392.5,442.1 L389.1,445.1 L385.2,447.5 L380.9,449.4 L376.3,450.7 L371.6,451.3 L366.8,451.2 L343.3,449.2 L343.3,449.2 L342.5,455.2 L340.3,460.9 L336.9,466.0 L332.4,470.5 L326.9,474.0 L320.8,476.4 L314.2,477.7 L307.5,477.8 L300.8,476.6 L294.6,474.2 L289.1,470.8 L284.4,466.5 L280.9,461.3 L278.5,455.7 L277.6,449.8 L278.0,443.8 L254.5,441.8 L254.5,441.8 L249.8,441.1 L245.2,439.7 L241.0,437.7 L237.2,435.1 L233.8,432.1 L231.0,428.6 L228.9,424.8 L227.5,420.7 L226.8,416.5 L226.9,412.2 L242.0,266.4 L242.0,266.4 L243.0,260.9 L245.1,255.6 L248.0,250.7 L251.7,246.2 L256.2,242.3 L261.3,239.1 L266.9,236.7 L272.8,235.0 L279.0,234.2 L285.2,234.3Z"/><path d="M285.2,232.3 L383.1,240.5 L383.1,240.5 L388.5,241.3 L393.7,242.9 L398.6,245.2 L403.0,248.2 L406.9,251.7 L410.0,255.7 L412.5,260.2 L414.1,264.9 L415.0,269.7 L414.9,274.7 L400.0,424.7 L400.0,424.7 L399.2,428.9 L397.7,432.9 L395.5,436.7 L392.6,440.1 L389.2,443.1 L385.3,445.5 L381.0,447.4 L376.4,448.7 L371.7,449.3 L366.9,449.2 L343.4,447.2 L343.4,447.2 L342.6,453.2 L340.5,458.9 L337.0,464.0 L332.5,468.5 L327.1,472.0 L320.9,474.4 L314.3,475.7 L307.6,475.8 L301.0,474.6 L294.7,472.2 L289.2,468.8 L284.5,464.5 L281.0,459.3 L278.6,453.7 L277.6,447.8 L278.0,441.8 L254.6,439.8 L254.6,439.8 L249.8,439.1 L245.3,437.7 L241.0,435.7 L237.2,433.1 L233.9,430.1 L231.1,426.6 L229.0,422.8 L227.5,418.7 L226.9,414.5 L226.9,410.2 L241.9,264.4 L241.9,264.4 L243.0,258.9 L245.0,253.6 L247.9,248.7 L251.7,244.2 L256.1,240.3 L261.2,237.1 L266.8,234.7 L272.8,233.0 L279.0,232.2 L285.2,232.3Z"/><path d="M285.2,230.3 L383.0,238.5 L383.0,238.5 L388.5,239.3 L393.7,240.9 L398.6,243.2 L403.0,246.2 L406.9,249.7 L410.1,253.7 L412.5,258.2 L414.2,262.9 L415.0,267.7 L414.9,272.7 L400.2,422.7 L400.2,422.7 L399.4,426.9 L397.8,430.9 L395.6,434.7 L392.8,438.1 L389.4,441.1 L385.4,443.5 L381.2,445.4 L376.6,446.7 L371.8,447.3 L367.0,447.2 L343.5,445.2 L343.5,445.2 L342.7,451.2 L340.6,456.9 L337.2,462.0 L332.6,466.5 L327.2,470.0 L321.0,472.4 L314.4,473.7 L307.7,473.8 L301.1,472.6 L294.8,470.2 L289.3,466.8 L284.6,462.5 L281.0,457.3 L278.7,451.7 L277.7,445.8 L278.1,439.8 L254.6,437.8 L254.6,437.8 L249.9,437.1 L245.3,435.7 L241.1,433.7 L237.3,431.1 L233.9,428.1 L231.1,424.6 L229.0,420.8 L227.6,416.7 L226.9,412.5 L227.0,408.2 L241.9,262.4 L241.9,262.4 L243.0,256.9 L245.0,251.6 L247.9,246.7 L251.6,242.2 L256.1,238.3 L261.2,235.1 L266.8,232.7 L272.7,231.0 L278.9,230.2 L285.2,230.3Z"/><path d="M285.1,228.3 L383.0,236.5 L383.0,236.5 L388.5,237.3 L393.7,238.9 L398.6,241.2 L403.0,244.2 L406.9,247.7 L410.1,251.7 L412.5,256.1 L414.2,260.8 L415.0,265.7 L414.9,270.6 L400.3,420.7 L400.3,420.7 L399.5,424.9 L398.0,428.9 L395.8,432.7 L392.9,436.1 L389.5,439.1 L385.6,441.5 L381.3,443.4 L376.7,444.7 L372.0,445.3 L367.2,445.2 L343.7,443.2 L343.7,443.2 L342.9,449.2 L340.7,454.9 L337.3,460.0 L332.8,464.5 L327.3,468.0 L321.2,470.4 L314.6,471.7 L307.8,471.8 L301.2,470.6 L294.9,468.2 L289.4,464.8 L284.7,460.5 L281.1,455.3 L278.8,449.7 L277.8,443.8 L278.2,437.8 L254.7,435.8 L254.7,435.8 L250.0,435.1 L245.4,433.7 L241.2,431.7 L237.3,429.1 L233.9,426.1 L231.2,422.6 L229.0,418.8 L227.6,414.7 L226.9,410.5 L227.0,406.2 L241.9,260.4 L241.9,260.4 L242.9,254.9 L244.9,249.6 L247.8,244.7 L251.6,240.2 L256.0,236.3 L261.1,233.1 L266.7,230.7 L272.7,229.0 L278.9,228.2 L285.1,228.3Z"/><path d="M285.1,226.3 L383.0,234.5 L383.0,234.5 L388.5,235.3 L393.7,236.9 L398.6,239.2 L403.0,242.1 L406.9,245.7 L410.1,249.7 L412.5,254.1 L414.2,258.8 L415.0,263.7 L415.0,268.6 L400.4,418.7 L400.4,418.7 L399.6,422.9 L398.1,426.9 L395.9,430.7 L393.1,434.1 L389.6,437.1 L385.7,439.5 L381.4,441.4 L376.9,442.7 L372.1,443.3 L367.3,443.2 L343.8,441.2 L343.8,441.2 L343.0,447.2 L340.8,452.9 L337.4,458.0 L332.9,462.5 L327.4,466.0 L321.3,468.4 L314.7,469.7 L307.9,469.8 L301.3,468.6 L295.1,466.2 L289.5,462.8 L284.8,458.5 L281.2,453.3 L278.9,447.7 L277.9,441.8 L278.3,435.8 L254.7,433.8 L254.7,433.8 L250.0,433.1 L245.5,431.7 L241.2,429.7 L237.4,427.1 L234.0,424.1 L231.2,420.6 L229.1,416.8 L227.7,412.7 L227.0,408.5 L227.0,404.2 L241.8,258.4 L241.8,258.4 L242.9,252.9 L244.9,247.6 L247.8,242.7 L251.5,238.2 L256.0,234.3 L261.1,231.1 L266.7,228.7 L272.6,227.0 L278.8,226.2 L285.1,226.3Z"/><path d="M285.0,224.3 L383.0,232.5 L383.0,232.5 L388.4,233.3 L393.7,234.9 L398.6,237.2 L403.0,240.1 L406.9,243.7 L410.1,247.7 L412.5,252.1 L414.2,256.8 L415.0,261.7 L415.0,266.6 L400.6,416.7 L400.6,416.7 L399.8,420.9 L398.3,424.9 L396.0,428.7 L393.2,432.1 L389.8,435.1 L385.9,437.5 L381.6,439.4 L377.0,440.7 L372.2,441.3 L367.4,441.2 L343.9,439.2 L343.9,439.2 L343.1,445.2 L341.0,450.9 L337.5,456.0 L333.0,460.5 L327.6,464.0 L321.4,466.4 L314.8,467.7 L308.0,467.8 L301.4,466.6 L295.2,464.2 L289.6,460.8 L284.9,456.5 L281.3,451.3 L279.0,445.7 L278.0,439.8 L278.4,433.8 L254.8,431.8 L254.8,431.8 L250.1,431.1 L245.5,429.7 L241.3,427.7 L237.4,425.1 L234.0,422.1 L231.3,418.6 L229.1,414.8 L227.7,410.7 L227.0,406.5 L227.0,402.2 L241.8,256.4 L241.8,256.4 L242.8,250.9 L244.8,245.6 L247.7,240.7 L251.5,236.2 L255.9,232.3 L261.0,229.1 L266.6,226.7 L272.6,225.0 L278.8,224.2 L285.0,224.3Z"/><path d="M285.0,222.3 L383.0,230.4 L383.0,230.4 L388.4,231.3 L393.7,232.9 L398.6,235.2 L403.0,238.1 L406.9,241.7 L410.1,245.7 L412.6,250.1 L414.2,254.8 L415.1,259.7 L415.0,264.6 L400.7,414.7 L400.7,414.7 L399.9,418.9 L398.4,422.9 L396.2,426.7 L393.3,430.1 L389.9,433.1 L386.0,435.5 L381.7,437.4 L377.1,438.7 L372.4,439.3 L367.6,439.2 L344.0,437.2 L344.0,437.2 L343.2,443.2 L341.1,448.9 L337.7,454.0 L333.1,458.5 L327.7,462.0 L321.5,464.4 L314.9,465.7 L308.2,465.8 L301.5,464.6 L295.3,462.2 L289.7,458.8 L285.0,454.5 L281.4,449.3 L279.1,443.7 L278.1,437.8 L278.4,431.8 L254.9,429.8 L254.9,429.8 L250.1,429.1 L245.6,427.7 L241.3,425.7 L237.4,423.1 L234.1,420.1 L231.3,416.6 L229.2,412.8 L227.7,408.7 L227.0,404.5 L227.1,400.2 L241.7,254.4 L241.7,254.4 L242.8,248.9 L244.8,243.6 L247.7,238.7 L251.4,234.2 L255.9,230.3 L261.0,227.1 L266.6,224.7 L272.5,223.0 L278.7,222.2 L285.0,222.3Z"/><path d="M284.9,220.3 L383.0,228.4 L383.0,228.4 L388.4,229.3 L393.7,230.9 L398.6,233.2 L403.0,236.1 L406.9,239.7 L410.1,243.7 L412.6,248.1 L414.2,252.8 L415.1,257.7 L415.0,262.6 L400.8,412.6 L400.8,412.6 L400.0,416.9 L398.5,420.9 L396.3,424.7 L393.5,428.1 L390.1,431.1 L386.2,433.5 L381.9,435.4 L377.3,436.7 L372.5,437.3 L367.7,437.2 L344.1,435.2 L344.1,435.2 L343.3,441.2 L341.2,446.9 L337.8,452.0 L333.3,456.5 L327.8,460.0 L321.7,462.4 L315.1,463.7 L308.3,463.8 L301.6,462.6 L295.4,460.2 L289.8,456.8 L285.1,452.5 L281.5,447.3 L279.1,441.7 L278.1,435.8 L278.5,429.8 L254.9,427.8 L254.9,427.8 L250.2,427.1 L245.6,425.7 L241.4,423.7 L237.5,421.1 L234.1,418.1 L231.3,414.6 L229.2,410.8 L227.8,406.7 L227.1,402.5 L227.1,398.2 L241.7,252.4 L241.7,252.4 L242.7,246.9 L244.7,241.6 L247.6,236.7 L251.4,232.2 L255.8,228.3 L260.9,225.1 L266.5,222.7 L272.5,221.0 L278.7,220.2 L284.9,220.3Z"/><path d="M284.9,218.3 L383.0,226.4 L383.0,226.4 L388.4,227.3 L393.6,228.9 L398.5,231.2 L403.0,234.1 L406.9,237.6 L410.1,241.7 L412.6,246.1 L414.3,250.8 L415.1,255.7 L415.1,260.6 L401.0,410.6 L401.0,410.6 L400.2,414.9 L398.7,418.9 L396.5,422.7 L393.6,426.1 L390.2,429.1 L386.3,431.5 L382.0,433.4 L377.4,434.7 L372.7,435.3 L367.8,435.2 L344.3,433.2 L344.3,433.2 L343.5,439.2 L341.3,444.9 L337.9,450.0 L333.4,454.5 L327.9,458.0 L321.8,460.4 L315.2,461.7 L308.4,461.8 L301.7,460.6 L295.5,458.2 L289.9,454.8 L285.2,450.5 L281.6,445.3 L279.2,439.7 L278.2,433.8 L278.6,427.8 L255.0,425.8 L255.0,425.8 L250.2,425.1 L245.7,423.7 L241.4,421.7 L237.5,419.1 L234.2,416.1 L231.4,412.6 L229.2,408.8 L227.8,404.7 L227.1,400.5 L227.1,396.2 L241.7,250.4 L241.7,250.4 L242.7,244.9 L244.7,239.6 L247.6,234.7 L251.3,230.2 L255.8,226.3 L260.9,223.1 L266.5,220.7 L272.4,219.0 L278.6,218.2 L284.9,218.3Z"/><path d="M284.8,216.3 L383.0,224.4 L383.0,224.4 L388.4,225.3 L393.6,226.8 L398.5,229.1 L403.0,232.1 L406.9,235.6 L410.1,239.7 L412.6,244.1 L414.3,248.8 L415.1,253.7 L415.1,258.6 L401.1,408.6 L401.1,408.6 L400.3,412.9 L398.8,416.9 L396.6,420.7 L393.8,424.1 L390.3,427.1 L386.4,429.5 L382.1,431.4 L377.6,432.7 L372.8,433.3 L368.0,433.2 L344.4,431.2 L344.4,431.2 L343.6,437.2 L341.5,442.9 L338.1,448.0 L333.5,452.5 L328.1,456.0 L321.9,458.4 L315.3,459.7 L308.5,459.8 L301.9,458.6 L295.6,456.2 L290.0,452.8 L285.3,448.4 L281.7,443.3 L279.3,437.7 L278.3,431.8 L278.7,425.8 L255.1,423.8 L255.1,423.8 L250.3,423.1 L245.7,421.7 L241.5,419.7 L237.6,417.1 L234.2,414.1 L231.4,410.6 L229.3,406.8 L227.8,402.7 L227.1,398.5 L227.2,394.2 L241.6,248.4 L241.6,248.4 L242.6,242.9 L244.6,237.6 L247.5,232.7 L251.3,228.2 L255.7,224.3 L260.8,221.1 L266.4,218.7 L272.4,217.0 L278.6,216.2 L284.8,216.3Z"/><path d="M284.8,214.3 L382.9,222.4 L382.9,222.4 L388.4,223.2 L393.6,224.8 L398.5,227.1 L403.0,230.1 L406.9,233.6 L410.1,237.6 L412.6,242.1 L414.3,246.8 L415.1,251.6 L415.1,256.6 L401.2,406.6 L401.2,406.6 L400.5,410.8 L399.0,414.9 L396.8,418.7 L393.9,422.1 L390.5,425.1 L386.6,427.5 L382.3,429.4 L377.7,430.7 L372.9,431.3 L368.1,431.2 L344.5,429.2 L344.5,429.2 L343.7,435.2 L341.6,440.9 L338.2,446.0 L333.7,450.5 L328.2,454.0 L322.0,456.4 L315.4,457.7 L308.6,457.8 L302.0,456.6 L295.7,454.2 L290.1,450.8 L285.4,446.4 L281.8,441.3 L279.4,435.7 L278.4,429.8 L278.7,423.8 L255.1,421.8 L255.1,421.8 L250.4,421.1 L245.8,419.7 L241.5,417.7 L237.6,415.1 L234.3,412.1 L231.5,408.6 L229.3,404.8 L227.9,400.7 L227.2,396.5 L227.2,392.2 L241.6,246.4 L241.6,246.4 L242.6,240.9 L244.6,235.6 L247.5,230.7 L251.2,226.2 L255.7,222.3 L260.8,219.1 L266.4,216.7 L272.3,215.0 L278.5,214.2 L284.8,214.3Z"/><path d="M284.7,212.3 L382.9,220.4 L382.9,220.4 L388.4,221.2 L393.6,222.8 L398.5,225.1 L403.0,228.1 L406.9,231.6 L410.1,235.6 L412.6,240.1 L414.3,244.8 L415.1,249.6 L415.1,254.6 L401.4,404.6 L401.4,404.6 L400.6,408.8 L399.1,412.9 L396.9,416.7 L394.0,420.1 L390.6,423.1 L386.7,425.5 L382.4,427.4 L377.8,428.7 L373.1,429.3 L368.2,429.2 L344.6,427.2 L344.6,427.2 L343.8,433.2 L341.7,438.9 L338.3,444.0 L333.8,448.5 L328.3,452.0 L322.2,454.4 L315.5,455.7 L308.8,455.8 L302.1,454.6 L295.8,452.2 L290.2,448.8 L285.5,444.4 L281.9,439.3 L279.5,433.7 L278.5,427.8 L278.8,421.8 L255.2,419.8 L255.2,419.8 L250.4,419.1 L245.9,417.7 L241.6,415.7 L237.7,413.1 L234.3,410.1 L231.5,406.6 L229.4,402.8 L227.9,398.7 L227.2,394.5 L227.2,390.2 L241.5,244.4 L241.5,244.4 L242.6,238.9 L244.5,233.6 L247.4,228.7 L251.2,224.2 L255.6,220.3 L260.7,217.1 L266.3,214.7 L272.3,213.0 L278.5,212.2 L284.7,212.3Z"/></g>
<g fill="none" stroke="#222a33" stroke-width="3.2" stroke-linejoin="round"><path d="M285.5,246.3 L383.1,254.6 L383.1,254.6 L388.5,255.4 L393.7,257.0 L398.6,259.3 L403.0,262.3 L406.8,265.8 L410.0,269.8 L412.4,274.2 L414.0,278.9 L414.8,283.8 L414.7,288.7 L399.1,438.7 L399.1,438.7 L398.3,442.9 L396.7,446.9 L394.5,450.7 L391.6,454.1 L388.2,457.1 L384.3,459.5 L380.0,461.4 L375.5,462.7 L370.7,463.3 L366.0,463.2 L342.6,461.2 L342.6,461.2 L341.7,467.2 L339.6,472.9 L336.1,478.0 L331.6,482.5 L326.2,486.0 L320.0,488.4 L313.5,489.7 L306.8,489.8 L300.2,488.6 L294.0,486.2 L288.5,482.8 L283.8,478.5 L280.3,473.3 L278.0,467.7 L277.1,461.8 L277.5,455.8 L254.1,453.8 L254.1,453.8 L249.4,453.1 L244.9,451.7 L240.7,449.7 L236.9,447.1 L233.5,444.1 L230.8,440.6 L228.7,436.8 L227.3,432.7 L226.6,428.5 L226.7,424.2 L242.2,278.4 L242.2,278.4 L243.3,272.9 L245.3,267.6 L248.2,262.7 L252.0,258.2 L256.5,254.3 L261.6,251.1 L267.2,248.7 L273.1,247.0 L279.3,246.2 L285.5,246.3Z"/><path d="M285.5,244.3 L383.1,252.6 L383.1,252.6 L388.5,253.4 L393.7,255.0 L398.6,257.3 L403.0,260.2 L406.8,263.8 L410.0,267.8 L412.4,272.2 L414.1,276.9 L414.8,281.8 L414.8,286.7 L399.2,436.7 L399.2,436.7 L398.4,440.9 L396.9,444.9 L394.6,448.7 L391.8,452.1 L388.4,455.1 L384.5,457.5 L380.2,459.4 L375.6,460.7 L370.9,461.3 L366.1,461.2 L342.7,459.2 L342.7,459.2 L341.9,465.2 L339.7,470.9 L336.3,476.0 L331.7,480.5 L326.3,484.0 L320.2,486.4 L313.6,487.7 L306.9,487.8 L300.3,486.6 L294.1,484.2 L288.6,480.8 L283.9,476.5 L280.4,471.3 L278.1,465.7 L277.2,459.8 L277.6,453.8 L254.2,451.8 L254.2,451.8 L249.5,451.1 L245.0,449.7 L240.7,447.7 L236.9,445.1 L233.6,442.1 L230.8,438.6 L228.7,434.8 L227.3,430.7 L226.7,426.5 L226.7,422.2 L242.2,276.4 L242.2,276.4 L243.3,270.9 L245.3,265.6 L248.2,260.7 L251.9,256.2 L256.4,252.3 L261.5,249.1 L267.1,246.7 L273.1,245.0 L279.2,244.2 L285.5,244.3Z"/><path d="M285.4,242.3 L383.1,250.5 L383.1,250.5 L388.5,251.4 L393.7,253.0 L398.6,255.3 L403.0,258.2 L406.8,261.8 L410.0,265.8 L412.4,270.2 L414.1,274.9 L414.9,279.8 L414.8,284.7 L399.4,434.7 L399.4,434.7 L398.5,438.9 L397.0,442.9 L394.8,446.7 L391.9,450.1 L388.5,453.1 L384.6,455.5 L380.3,457.4 L375.7,458.7 L371.0,459.3 L366.2,459.2 L342.8,457.2 L342.8,457.2 L342.0,463.2 L339.8,468.9 L336.4,474.0 L331.9,478.5 L326.4,482.0 L320.3,484.4 L313.7,485.7 L307.0,485.8 L300.4,484.6 L294.2,482.2 L288.7,478.8 L284.0,474.5 L280.5,469.3 L278.2,463.7 L277.2,457.8 L277.7,451.8 L254.2,449.8 L254.2,449.8 L249.5,449.1 L245.0,447.7 L240.8,445.7 L237.0,443.1 L233.6,440.1 L230.9,436.6 L228.8,432.8 L227.4,428.7 L226.7,424.5 L226.8,420.2 L242.1,274.4 L242.1,274.4 L243.2,268.9 L245.2,263.6 L248.2,258.7 L251.9,254.2 L256.4,250.3 L261.5,247.1 L267.1,244.7 L273.0,243.0 L279.2,242.2 L285.4,242.3Z"/><path d="M285.4,240.3 L383.1,248.5 L383.1,248.5 L388.5,249.4 L393.7,251.0 L398.6,253.3 L403.0,256.2 L406.8,259.8 L410.0,263.8 L412.5,268.2 L414.1,272.9 L414.9,277.8 L414.8,282.7 L399.5,432.7 L399.5,432.7 L398.7,436.9 L397.1,440.9 L394.9,444.7 L392.1,448.1 L388.6,451.1 L384.7,453.5 L380.5,455.4 L375.9,456.7 L371.2,457.3 L366.4,457.2 L342.9,455.2 L342.9,455.2 L342.1,461.2 L339.9,466.9 L336.5,472.0 L332.0,476.5 L326.5,480.0 L320.4,482.4 L313.8,483.7 L307.1,483.8 L300.5,482.6 L294.3,480.2 L288.8,476.8 L284.1,472.5 L280.6,467.3 L278.3,461.7 L277.3,455.8 L277.7,449.8 L254.3,447.8 L254.3,447.8 L249.6,447.1 L245.1,445.7 L240.8,443.7 L237.0,441.1 L233.7,438.1 L230.9,434.6 L228.8,430.8 L227.4,426.7 L226.7,422.5 L226.8,418.2 L242.1,272.4 L242.1,272.4 L243.2,266.9 L245.2,261.6 L248.1,256.7 L251.8,252.2 L256.3,248.3 L261.4,245.1 L267.0,242.7 L273.0,241.0 L279.1,240.2 L285.4,240.3Z"/><path d="M285.3,238.3 L383.1,246.5 L383.1,246.5 L388.5,247.4 L393.7,249.0 L398.6,251.3 L403.0,254.2 L406.8,257.7 L410.0,261.8 L412.5,266.2 L414.1,270.9 L414.9,275.8 L414.8,280.7 L399.6,430.7 L399.6,430.7 L398.8,434.9 L397.3,438.9 L395.1,442.7 L392.2,446.1 L388.8,449.1 L384.9,451.5 L380.6,453.4 L376.0,454.7 L371.3,455.3 L366.5,455.2 L343.1,453.2 L343.1,453.2 L342.2,459.2 L340.1,464.9 L336.7,470.0 L332.1,474.5 L326.7,478.0 L320.5,480.4 L314.0,481.7 L307.2,481.8 L300.6,480.6 L294.4,478.2 L288.9,474.8 L284.2,470.5 L280.7,465.3 L278.4,459.7 L277.4,453.8 L277.8,447.8 L254.4,445.8 L254.4,445.8 L249.7,445.1 L245.1,443.7 L240.9,441.7 L237.1,439.1 L233.7,436.1 L231.0,432.6 L228.9,428.8 L227.4,424.7 L226.8,420.5 L226.8,416.2 L242.1,270.4 L242.1,270.4 L243.1,264.9 L245.1,259.6 L248.1,254.7 L251.8,250.2 L256.3,246.3 L261.4,243.1 L267.0,240.7 L272.9,239.0 L279.1,238.2 L285.3,238.3Z"/><path d="M285.3,236.3 L383.1,244.5 L383.1,244.5 L388.5,245.4 L393.7,246.9 L398.6,249.2 L403.0,252.2 L406.8,255.7 L410.0,259.8 L412.5,264.2 L414.1,268.9 L414.9,273.8 L414.9,278.7 L399.8,428.7 L399.8,428.7 L399.0,432.9 L397.4,436.9 L395.2,440.7 L392.3,444.1 L388.9,447.1 L385.0,449.5 L380.7,451.4 L376.2,452.7 L371.4,453.3 L366.6,453.2 L343.2,451.2 L343.2,451.2 L342.4,457.2 L340.2,462.9 L336.8,468.0 L332.3,472.5 L326.8,476.0 L320.7,478.4 L314.1,479.7 L307.3,479.8 L300.7,478.6 L294.5,476.2 L289.0,472.8 L284.3,468.5 L280.8,463.3 L278.5,457.7 L277.5,451.8 L277.9,445.8 L254.4,443.8 L254.4,443.8 L249.7,443.1 L245.2,441.7 L240.9,439.7 L237.1,437.1 L233.8,434.1 L231.0,430.6 L228.9,426.8 L227.5,422.7 L226.8,418.5 L226.9,414.2 L242.0,268.4 L242.0,268.4 L243.1,262.9 L245.1,257.6 L248.0,252.7 L251.7,248.2 L256.2,244.3 L261.3,241.1 L266.9,238.7 L272.9,237.0 L279.1,236.2 L285.3,236.3Z"/><path d="M285.2,234.3 L383.1,242.5 L383.1,242.5 L388.5,243.3 L393.7,244.9 L398.6,247.2 L403.0,250.2 L406.9,253.7 L410.0,257.8 L412.5,262.2 L414.1,266.9 L414.9,271.8 L414.9,276.7 L399.9,426.7 L399.9,426.7 L399.1,430.9 L397.6,434.9 L395.3,438.7 L392.5,442.1 L389.1,445.1 L385.2,447.5 L380.9,449.4 L376.3,450.7 L371.6,451.3 L366.8,451.2 L343.3,449.2 L343.3,449.2 L342.5,455.2 L340.3,460.9 L336.9,466.0 L332.4,470.5 L326.9,474.0 L320.8,476.4 L314.2,477.7 L307.5,477.8 L300.8,476.6 L294.6,474.2 L289.1,470.8 L284.4,466.5 L280.9,461.3 L278.5,455.7 L277.6,449.8 L278.0,443.8 L254.5,441.8 L254.5,441.8 L249.8,441.1 L245.2,439.7 L241.0,437.7 L237.2,435.1 L233.8,432.1 L231.0,428.6 L228.9,424.8 L227.5,420.7 L226.8,416.5 L226.9,412.2 L242.0,266.4 L242.0,266.4 L243.0,260.9 L245.1,255.6 L248.0,250.7 L251.7,246.2 L256.2,242.3 L261.3,239.1 L266.9,236.7 L272.8,235.0 L279.0,234.2 L285.2,234.3Z"/><path d="M285.2,232.3 L383.1,240.5 L383.1,240.5 L388.5,241.3 L393.7,242.9 L398.6,245.2 L403.0,248.2 L406.9,251.7 L410.0,255.7 L412.5,260.2 L414.1,264.9 L415.0,269.7 L414.9,274.7 L400.0,424.7 L400.0,424.7 L399.2,428.9 L397.7,432.9 L395.5,436.7 L392.6,440.1 L389.2,443.1 L385.3,445.5 L381.0,447.4 L376.4,448.7 L371.7,449.3 L366.9,449.2 L343.4,447.2 L343.4,447.2 L342.6,453.2 L340.5,458.9 L337.0,464.0 L332.5,468.5 L327.1,472.0 L320.9,474.4 L314.3,475.7 L307.6,475.8 L301.0,474.6 L294.7,472.2 L289.2,468.8 L284.5,464.5 L281.0,459.3 L278.6,453.7 L277.6,447.8 L278.0,441.8 L254.6,439.8 L254.6,439.8 L249.8,439.1 L245.3,437.7 L241.0,435.7 L237.2,433.1 L233.9,430.1 L231.1,426.6 L229.0,422.8 L227.5,418.7 L226.9,414.5 L226.9,410.2 L241.9,264.4 L241.9,264.4 L243.0,258.9 L245.0,253.6 L247.9,248.7 L251.7,244.2 L256.1,240.3 L261.2,237.1 L266.8,234.7 L272.8,233.0 L279.0,232.2 L285.2,232.3Z"/><path d="M285.2,230.3 L383.0,238.5 L383.0,238.5 L388.5,239.3 L393.7,240.9 L398.6,243.2 L403.0,246.2 L406.9,249.7 L410.1,253.7 L412.5,258.2 L414.2,262.9 L415.0,267.7 L414.9,272.7 L400.2,422.7 L400.2,422.7 L399.4,426.9 L397.8,430.9 L395.6,434.7 L392.8,438.1 L389.4,441.1 L385.4,443.5 L381.2,445.4 L376.6,446.7 L371.8,447.3 L367.0,447.2 L343.5,445.2 L343.5,445.2 L342.7,451.2 L340.6,456.9 L337.2,462.0 L332.6,466.5 L327.2,470.0 L321.0,472.4 L314.4,473.7 L307.7,473.8 L301.1,472.6 L294.8,470.2 L289.3,466.8 L284.6,462.5 L281.0,457.3 L278.7,451.7 L277.7,445.8 L278.1,439.8 L254.6,437.8 L254.6,437.8 L249.9,437.1 L245.3,435.7 L241.1,433.7 L237.3,431.1 L233.9,428.1 L231.1,424.6 L229.0,420.8 L227.6,416.7 L226.9,412.5 L227.0,408.2 L241.9,262.4 L241.9,262.4 L243.0,256.9 L245.0,251.6 L247.9,246.7 L251.6,242.2 L256.1,238.3 L261.2,235.1 L266.8,232.7 L272.7,231.0 L278.9,230.2 L285.2,230.3Z"/><path d="M285.1,228.3 L383.0,236.5 L383.0,236.5 L388.5,237.3 L393.7,238.9 L398.6,241.2 L403.0,244.2 L406.9,247.7 L410.1,251.7 L412.5,256.1 L414.2,260.8 L415.0,265.7 L414.9,270.6 L400.3,420.7 L400.3,420.7 L399.5,424.9 L398.0,428.9 L395.8,432.7 L392.9,436.1 L389.5,439.1 L385.6,441.5 L381.3,443.4 L376.7,444.7 L372.0,445.3 L367.2,445.2 L343.7,443.2 L343.7,443.2 L342.9,449.2 L340.7,454.9 L337.3,460.0 L332.8,464.5 L327.3,468.0 L321.2,470.4 L314.6,471.7 L307.8,471.8 L301.2,470.6 L294.9,468.2 L289.4,464.8 L284.7,460.5 L281.1,455.3 L278.8,449.7 L277.8,443.8 L278.2,437.8 L254.7,435.8 L254.7,435.8 L250.0,435.1 L245.4,433.7 L241.2,431.7 L237.3,429.1 L233.9,426.1 L231.2,422.6 L229.0,418.8 L227.6,414.7 L226.9,410.5 L227.0,406.2 L241.9,260.4 L241.9,260.4 L242.9,254.9 L244.9,249.6 L247.8,244.7 L251.6,240.2 L256.0,236.3 L261.1,233.1 L266.7,230.7 L272.7,229.0 L278.9,228.2 L285.1,228.3Z"/><path d="M285.1,226.3 L383.0,234.5 L383.0,234.5 L388.5,235.3 L393.7,236.9 L398.6,239.2 L403.0,242.1 L406.9,245.7 L410.1,249.7 L412.5,254.1 L414.2,258.8 L415.0,263.7 L415.0,268.6 L400.4,418.7 L400.4,418.7 L399.6,422.9 L398.1,426.9 L395.9,430.7 L393.1,434.1 L389.6,437.1 L385.7,439.5 L381.4,441.4 L376.9,442.7 L372.1,443.3 L367.3,443.2 L343.8,441.2 L343.8,441.2 L343.0,447.2 L340.8,452.9 L337.4,458.0 L332.9,462.5 L327.4,466.0 L321.3,468.4 L314.7,469.7 L307.9,469.8 L301.3,468.6 L295.1,466.2 L289.5,462.8 L284.8,458.5 L281.2,453.3 L278.9,447.7 L277.9,441.8 L278.3,435.8 L254.7,433.8 L254.7,433.8 L250.0,433.1 L245.5,431.7 L241.2,429.7 L237.4,427.1 L234.0,424.1 L231.2,420.6 L229.1,416.8 L227.7,412.7 L227.0,408.5 L227.0,404.2 L241.8,258.4 L241.8,258.4 L242.9,252.9 L244.9,247.6 L247.8,242.7 L251.5,238.2 L256.0,234.3 L261.1,231.1 L266.7,228.7 L272.6,227.0 L278.8,226.2 L285.1,226.3Z"/><path d="M285.0,224.3 L383.0,232.5 L383.0,232.5 L388.4,233.3 L393.7,234.9 L398.6,237.2 L403.0,240.1 L406.9,243.7 L410.1,247.7 L412.5,252.1 L414.2,256.8 L415.0,261.7 L415.0,266.6 L400.6,416.7 L400.6,416.7 L399.8,420.9 L398.3,424.9 L396.0,428.7 L393.2,432.1 L389.8,435.1 L385.9,437.5 L381.6,439.4 L377.0,440.7 L372.2,441.3 L367.4,441.2 L343.9,439.2 L343.9,439.2 L343.1,445.2 L341.0,450.9 L337.5,456.0 L333.0,460.5 L327.6,464.0 L321.4,466.4 L314.8,467.7 L308.0,467.8 L301.4,466.6 L295.2,464.2 L289.6,460.8 L284.9,456.5 L281.3,451.3 L279.0,445.7 L278.0,439.8 L278.4,433.8 L254.8,431.8 L254.8,431.8 L250.1,431.1 L245.5,429.7 L241.3,427.7 L237.4,425.1 L234.0,422.1 L231.3,418.6 L229.1,414.8 L227.7,410.7 L227.0,406.5 L227.0,402.2 L241.8,256.4 L241.8,256.4 L242.8,250.9 L244.8,245.6 L247.7,240.7 L251.5,236.2 L255.9,232.3 L261.0,229.1 L266.6,226.7 L272.6,225.0 L278.8,224.2 L285.0,224.3Z"/><path d="M285.0,222.3 L383.0,230.4 L383.0,230.4 L388.4,231.3 L393.7,232.9 L398.6,235.2 L403.0,238.1 L406.9,241.7 L410.1,245.7 L412.6,250.1 L414.2,254.8 L415.1,259.7 L415.0,264.6 L400.7,414.7 L400.7,414.7 L399.9,418.9 L398.4,422.9 L396.2,426.7 L393.3,430.1 L389.9,433.1 L386.0,435.5 L381.7,437.4 L377.1,438.7 L372.4,439.3 L367.6,439.2 L344.0,437.2 L344.0,437.2 L343.2,443.2 L341.1,448.9 L337.7,454.0 L333.1,458.5 L327.7,462.0 L321.5,464.4 L314.9,465.7 L308.2,465.8 L301.5,464.6 L295.3,462.2 L289.7,458.8 L285.0,454.5 L281.4,449.3 L279.1,443.7 L278.1,437.8 L278.4,431.8 L254.9,429.8 L254.9,429.8 L250.1,429.1 L245.6,427.7 L241.3,425.7 L237.4,423.1 L234.1,420.1 L231.3,416.6 L229.2,412.8 L227.7,408.7 L227.0,404.5 L227.1,400.2 L241.7,254.4 L241.7,254.4 L242.8,248.9 L244.8,243.6 L247.7,238.7 L251.4,234.2 L255.9,230.3 L261.0,227.1 L266.6,224.7 L272.5,223.0 L278.7,222.2 L285.0,222.3Z"/><path d="M284.9,220.3 L383.0,228.4 L383.0,228.4 L388.4,229.3 L393.7,230.9 L398.6,233.2 L403.0,236.1 L406.9,239.7 L410.1,243.7 L412.6,248.1 L414.2,252.8 L415.1,257.7 L415.0,262.6 L400.8,412.6 L400.8,412.6 L400.0,416.9 L398.5,420.9 L396.3,424.7 L393.5,428.1 L390.1,431.1 L386.2,433.5 L381.9,435.4 L377.3,436.7 L372.5,437.3 L367.7,437.2 L344.1,435.2 L344.1,435.2 L343.3,441.2 L341.2,446.9 L337.8,452.0 L333.3,456.5 L327.8,460.0 L321.7,462.4 L315.1,463.7 L308.3,463.8 L301.6,462.6 L295.4,460.2 L289.8,456.8 L285.1,452.5 L281.5,447.3 L279.1,441.7 L278.1,435.8 L278.5,429.8 L254.9,427.8 L254.9,427.8 L250.2,427.1 L245.6,425.7 L241.4,423.7 L237.5,421.1 L234.1,418.1 L231.3,414.6 L229.2,410.8 L227.8,406.7 L227.1,402.5 L227.1,398.2 L241.7,252.4 L241.7,252.4 L242.7,246.9 L244.7,241.6 L247.6,236.7 L251.4,232.2 L255.8,228.3 L260.9,225.1 L266.5,222.7 L272.5,221.0 L278.7,220.2 L284.9,220.3Z"/><path d="M284.9,218.3 L383.0,226.4 L383.0,226.4 L388.4,227.3 L393.6,228.9 L398.5,231.2 L403.0,234.1 L406.9,237.6 L410.1,241.7 L412.6,246.1 L414.3,250.8 L415.1,255.7 L415.1,260.6 L401.0,410.6 L401.0,410.6 L400.2,414.9 L398.7,418.9 L396.5,422.7 L393.6,426.1 L390.2,429.1 L386.3,431.5 L382.0,433.4 L377.4,434.7 L372.7,435.3 L367.8,435.2 L344.3,433.2 L344.3,433.2 L343.5,439.2 L341.3,444.9 L337.9,450.0 L333.4,454.5 L327.9,458.0 L321.8,460.4 L315.2,461.7 L308.4,461.8 L301.7,460.6 L295.5,458.2 L289.9,454.8 L285.2,450.5 L281.6,445.3 L279.2,439.7 L278.2,433.8 L278.6,427.8 L255.0,425.8 L255.0,425.8 L250.2,425.1 L245.7,423.7 L241.4,421.7 L237.5,419.1 L234.2,416.1 L231.4,412.6 L229.2,408.8 L227.8,404.7 L227.1,400.5 L227.1,396.2 L241.7,250.4 L241.7,250.4 L242.7,244.9 L244.7,239.6 L247.6,234.7 L251.3,230.2 L255.8,226.3 L260.9,223.1 L266.5,220.7 L272.4,219.0 L278.6,218.2 L284.9,218.3Z"/><path d="M284.8,216.3 L383.0,224.4 L383.0,224.4 L388.4,225.3 L393.6,226.8 L398.5,229.1 L403.0,232.1 L406.9,235.6 L410.1,239.7 L412.6,244.1 L414.3,248.8 L415.1,253.7 L415.1,258.6 L401.1,408.6 L401.1,408.6 L400.3,412.9 L398.8,416.9 L396.6,420.7 L393.8,424.1 L390.3,427.1 L386.4,429.5 L382.1,431.4 L377.6,432.7 L372.8,433.3 L368.0,433.2 L344.4,431.2 L344.4,431.2 L343.6,437.2 L341.5,442.9 L338.1,448.0 L333.5,452.5 L328.1,456.0 L321.9,458.4 L315.3,459.7 L308.5,459.8 L301.9,458.6 L295.6,456.2 L290.0,452.8 L285.3,448.4 L281.7,443.3 L279.3,437.7 L278.3,431.8 L278.7,425.8 L255.1,423.8 L255.1,423.8 L250.3,423.1 L245.7,421.7 L241.5,419.7 L237.6,417.1 L234.2,414.1 L231.4,410.6 L229.3,406.8 L227.8,402.7 L227.1,398.5 L227.2,394.2 L241.6,248.4 L241.6,248.4 L242.6,242.9 L244.6,237.6 L247.5,232.7 L251.3,228.2 L255.7,224.3 L260.8,221.1 L266.4,218.7 L272.4,217.0 L278.6,216.2 L284.8,216.3Z"/><path d="M284.8,214.3 L382.9,222.4 L382.9,222.4 L388.4,223.2 L393.6,224.8 L398.5,227.1 L403.0,230.1 L406.9,233.6 L410.1,237.6 L412.6,242.1 L414.3,246.8 L415.1,251.6 L415.1,256.6 L401.2,406.6 L401.2,406.6 L400.5,410.8 L399.0,414.9 L396.8,418.7 L393.9,422.1 L390.5,425.1 L386.6,427.5 L382.3,429.4 L377.7,430.7 L372.9,431.3 L368.1,431.2 L344.5,429.2 L344.5,429.2 L343.7,435.2 L341.6,440.9 L338.2,446.0 L333.7,450.5 L328.2,454.0 L322.0,456.4 L315.4,457.7 L308.6,457.8 L302.0,456.6 L295.7,454.2 L290.1,450.8 L285.4,446.4 L281.8,441.3 L279.4,435.7 L278.4,429.8 L278.7,423.8 L255.1,421.8 L255.1,421.8 L250.4,421.1 L245.8,419.7 L241.5,417.7 L237.6,415.1 L234.3,412.1 L231.5,408.6 L229.3,404.8 L227.9,400.7 L227.2,396.5 L227.2,392.2 L241.6,246.4 L241.6,246.4 L242.6,240.9 L244.6,235.6 L247.5,230.7 L251.2,226.2 L255.7,222.3 L260.8,219.1 L266.4,216.7 L272.3,215.0 L278.5,214.2 L284.8,214.3Z"/><path d="M284.7,212.3 L382.9,220.4 L382.9,220.4 L388.4,221.2 L393.6,222.8 L398.5,225.1 L403.0,228.1 L406.9,231.6 L410.1,235.6 L412.6,240.1 L414.3,244.8 L415.1,249.6 L415.1,254.6 L401.4,404.6 L401.4,404.6 L400.6,408.8 L399.1,412.9 L396.9,416.7 L394.0,420.1 L390.6,423.1 L386.7,425.5 L382.4,427.4 L377.8,428.7 L373.1,429.3 L368.2,429.2 L344.6,427.2 L344.6,427.2 L343.8,433.2 L341.7,438.9 L338.3,444.0 L333.8,448.5 L328.3,452.0 L322.2,454.4 L315.5,455.7 L308.8,455.8 L302.1,454.6 L295.8,452.2 L290.2,448.8 L285.5,444.4 L281.9,439.3 L279.5,433.7 L278.5,427.8 L278.8,421.8 L255.2,419.8 L255.2,419.8 L250.4,419.1 L245.9,417.7 L241.6,415.7 L237.7,413.1 L234.3,410.1 L231.5,406.6 L229.4,402.8 L227.9,398.7 L227.2,394.5 L227.2,390.2 L241.5,244.4 L241.5,244.4 L242.6,238.9 L244.5,233.6 L247.4,228.7 L251.2,224.2 L255.6,220.3 L260.7,217.1 L266.3,214.7 L272.3,213.0 L278.5,212.2 L284.7,212.3Z"/></g>
<g fill="url(#gsideA)" stroke="none"><path d="M285.5,246.3 L383.1,254.6 L383.1,254.6 L388.5,255.4 L393.7,257.0 L398.6,259.3 L403.0,262.3 L406.8,265.8 L410.0,269.8 L412.4,274.2 L414.0,278.9 L414.8,283.8 L414.7,288.7 L399.1,438.7 L399.1,438.7 L398.3,442.9 L396.7,446.9 L394.5,450.7 L391.6,454.1 L388.2,457.1 L384.3,459.5 L380.0,461.4 L375.5,462.7 L370.7,463.3 L366.0,463.2 L342.6,461.2 L342.6,461.2 L341.7,467.2 L339.6,472.9 L336.1,478.0 L331.6,482.5 L326.2,486.0 L320.0,488.4 L313.5,489.7 L306.8,489.8 L300.2,488.6 L294.0,486.2 L288.5,482.8 L283.8,478.5 L280.3,473.3 L278.0,467.7 L277.1,461.8 L277.5,455.8 L254.1,453.8 L254.1,453.8 L249.4,453.1 L244.9,451.7 L240.7,449.7 L236.9,447.1 L233.5,444.1 L230.8,440.6 L228.7,436.8 L227.3,432.7 L226.6,428.5 L226.7,424.2 L242.2,278.4 L242.2,278.4 L243.3,272.9 L245.3,267.6 L248.2,262.7 L252.0,258.2 L256.5,254.3 L261.6,251.1 L267.2,248.7 L273.1,247.0 L279.3,246.2 L285.5,246.3Z"/><path d="M285.5,245.3 L383.1,253.6 L383.1,253.6 L388.5,254.4 L393.7,256.0 L398.6,258.3 L403.0,261.2 L406.8,264.8 L410.0,268.8 L412.4,273.2 L414.0,277.9 L414.8,282.8 L414.8,287.7 L399.2,437.7 L399.2,437.7 L398.3,441.9 L396.8,445.9 L394.6,449.7 L391.7,453.1 L388.3,456.1 L384.4,458.5 L380.1,460.4 L375.5,461.7 L370.8,462.3 L366.0,462.2 L342.6,460.2 L342.6,460.2 L341.8,466.2 L339.6,471.9 L336.2,477.0 L331.7,481.5 L326.2,485.0 L320.1,487.4 L313.5,488.7 L306.8,488.8 L300.2,487.6 L294.0,485.2 L288.5,481.8 L283.9,477.5 L280.4,472.3 L278.1,466.7 L277.1,460.8 L277.5,454.8 L254.2,452.8 L254.2,452.8 L249.4,452.1 L244.9,450.7 L240.7,448.7 L236.9,446.1 L233.6,443.1 L230.8,439.6 L228.7,435.8 L227.3,431.7 L226.6,427.5 L226.7,423.2 L242.2,277.4 L242.2,277.4 L243.3,271.9 L245.3,266.6 L248.2,261.7 L252.0,257.2 L256.4,253.3 L261.5,250.1 L267.1,247.7 L273.1,246.0 L279.3,245.2 L285.5,245.3Z"/><path d="M285.5,244.3 L383.1,252.6 L383.1,252.6 L388.5,253.4 L393.7,255.0 L398.6,257.3 L403.0,260.2 L406.8,263.8 L410.0,267.8 L412.4,272.2 L414.1,276.9 L414.8,281.8 L414.8,286.7 L399.2,436.7 L399.2,436.7 L398.4,440.9 L396.9,444.9 L394.6,448.7 L391.8,452.1 L388.4,455.1 L384.5,457.5 L380.2,459.4 L375.6,460.7 L370.9,461.3 L366.1,461.2 L342.7,459.2 L342.7,459.2 L341.9,465.2 L339.7,470.9 L336.3,476.0 L331.7,480.5 L326.3,484.0 L320.2,486.4 L313.6,487.7 L306.9,487.8 L300.3,486.6 L294.1,484.2 L288.6,480.8 L283.9,476.5 L280.4,471.3 L278.1,465.7 L277.2,459.8 L277.6,453.8 L254.2,451.8 L254.2,451.8 L249.5,451.1 L245.0,449.7 L240.7,447.7 L236.9,445.1 L233.6,442.1 L230.8,438.6 L228.7,434.8 L227.3,430.7 L226.7,426.5 L226.7,422.2 L242.2,276.4 L242.2,276.4 L243.3,270.9 L245.3,265.6 L248.2,260.7 L251.9,256.2 L256.4,252.3 L261.5,249.1 L267.1,246.7 L273.1,245.0 L279.2,244.2 L285.5,244.3Z"/><path d="M285.4,243.3 L383.1,251.5 L383.1,251.5 L388.5,252.4 L393.7,254.0 L398.6,256.3 L403.0,259.2 L406.8,262.8 L410.0,266.8 L412.4,271.2 L414.1,275.9 L414.8,280.8 L414.8,285.7 L399.3,435.7 L399.3,435.7 L398.5,439.9 L396.9,443.9 L394.7,447.7 L391.9,451.1 L388.4,454.1 L384.5,456.5 L380.2,458.4 L375.7,459.7 L370.9,460.3 L366.2,460.2 L342.8,458.2 L342.8,458.2 L341.9,464.2 L339.8,469.9 L336.3,475.0 L331.8,479.5 L326.4,483.0 L320.2,485.4 L313.6,486.7 L306.9,486.8 L300.3,485.6 L294.1,483.2 L288.6,479.8 L284.0,475.5 L280.5,470.3 L278.2,464.7 L277.2,458.8 L277.6,452.8 L254.2,450.8 L254.2,450.8 L249.5,450.1 L245.0,448.7 L240.8,446.7 L236.9,444.1 L233.6,441.1 L230.9,437.6 L228.8,433.8 L227.4,429.7 L226.7,425.5 L226.8,421.2 L242.2,275.4 L242.2,275.4 L243.2,269.9 L245.3,264.6 L248.2,259.7 L251.9,255.2 L256.4,251.3 L261.5,248.1 L267.1,245.7 L273.0,244.0 L279.2,243.2 L285.4,243.3Z"/><path d="M285.4,242.3 L383.1,250.5 L383.1,250.5 L388.5,251.4 L393.7,253.0 L398.6,255.3 L403.0,258.2 L406.8,261.8 L410.0,265.8 L412.4,270.2 L414.1,274.9 L414.9,279.8 L414.8,284.7 L399.4,434.7 L399.4,434.7 L398.5,438.9 L397.0,442.9 L394.8,446.7 L391.9,450.1 L388.5,453.1 L384.6,455.5 L380.3,457.4 L375.7,458.7 L371.0,459.3 L366.2,459.2 L342.8,457.2 L342.8,457.2 L342.0,463.2 L339.8,468.9 L336.4,474.0 L331.9,478.5 L326.4,482.0 L320.3,484.4 L313.7,485.7 L307.0,485.8 L300.4,484.6 L294.2,482.2 L288.7,478.8 L284.0,474.5 L280.5,469.3 L278.2,463.7 L277.2,457.8 L277.7,451.8 L254.2,449.8 L254.2,449.8 L249.5,449.1 L245.0,447.7 L240.8,445.7 L237.0,443.1 L233.6,440.1 L230.9,436.6 L228.8,432.8 L227.4,428.7 L226.7,424.5 L226.8,420.2 L242.1,274.4 L242.1,274.4 L243.2,268.9 L245.2,263.6 L248.2,258.7 L251.9,254.2 L256.4,250.3 L261.5,247.1 L267.1,244.7 L273.0,243.0 L279.2,242.2 L285.4,242.3Z"/><path d="M285.4,241.3 L383.1,249.5 L383.1,249.5 L388.5,250.4 L393.7,252.0 L398.6,254.3 L403.0,257.2 L406.8,260.8 L410.0,264.8 L412.4,269.2 L414.1,273.9 L414.9,278.8 L414.8,283.7 L399.4,433.7 L399.4,433.7 L398.6,437.9 L397.1,441.9 L394.9,445.7 L392.0,449.1 L388.6,452.1 L384.7,454.5 L380.4,456.4 L375.8,457.7 L371.1,458.3 L366.3,458.2 L342.9,456.2 L342.9,456.2 L342.1,462.2 L339.9,467.9 L336.5,473.0 L331.9,477.5 L326.5,481.0 L320.3,483.4 L313.8,484.7 L307.0,484.8 L300.4,483.6 L294.2,481.2 L288.7,477.8 L284.1,473.5 L280.5,468.3 L278.2,462.7 L277.3,456.8 L277.7,450.8 L254.3,448.8 L254.3,448.8 L249.6,448.1 L245.0,446.7 L240.8,444.7 L237.0,442.1 L233.7,439.1 L230.9,435.6 L228.8,431.8 L227.4,427.7 L226.7,423.5 L226.8,419.2 L242.1,273.4 L242.1,273.4 L243.2,267.9 L245.2,262.6 L248.1,257.7 L251.9,253.2 L256.3,249.3 L261.4,246.1 L267.0,243.7 L273.0,242.0 L279.2,241.2 L285.4,241.3Z"/><path d="M285.4,240.3 L383.1,248.5 L383.1,248.5 L388.5,249.4 L393.7,251.0 L398.6,253.3 L403.0,256.2 L406.8,259.8 L410.0,263.8 L412.5,268.2 L414.1,272.9 L414.9,277.8 L414.8,282.7 L399.5,432.7 L399.5,432.7 L398.7,436.9 L397.1,440.9 L394.9,444.7 L392.1,448.1 L388.6,451.1 L384.7,453.5 L380.5,455.4 L375.9,456.7 L371.2,457.3 L366.4,457.2 L342.9,455.2 L342.9,455.2 L342.1,461.2 L339.9,466.9 L336.5,472.0 L332.0,476.5 L326.5,480.0 L320.4,482.4 L313.8,483.7 L307.1,483.8 L300.5,482.6 L294.3,480.2 L288.8,476.8 L284.1,472.5 L280.6,467.3 L278.3,461.7 L277.3,455.8 L277.7,449.8 L254.3,447.8 L254.3,447.8 L249.6,447.1 L245.1,445.7 L240.8,443.7 L237.0,441.1 L233.7,438.1 L230.9,434.6 L228.8,430.8 L227.4,426.7 L226.7,422.5 L226.8,418.2 L242.1,272.4 L242.1,272.4 L243.2,266.9 L245.2,261.6 L248.1,256.7 L251.8,252.2 L256.3,248.3 L261.4,245.1 L267.0,242.7 L273.0,241.0 L279.1,240.2 L285.4,240.3Z"/><path d="M285.4,239.3 L383.1,247.5 L383.1,247.5 L388.5,248.4 L393.7,250.0 L398.6,252.3 L403.0,255.2 L406.8,258.8 L410.0,262.8 L412.5,267.2 L414.1,271.9 L414.9,276.8 L414.8,281.7 L399.6,431.7 L399.6,431.7 L398.7,435.9 L397.2,439.9 L395.0,443.7 L392.1,447.1 L388.7,450.1 L384.8,452.5 L380.5,454.4 L376.0,455.7 L371.2,456.3 L366.4,456.2 L343.0,454.2 L343.0,454.2 L342.2,460.2 L340.0,465.9 L336.6,471.0 L332.1,475.5 L326.6,479.0 L320.5,481.4 L313.9,482.7 L307.2,482.8 L300.6,481.6 L294.4,479.2 L288.8,475.8 L284.2,471.5 L280.6,466.3 L278.3,460.7 L277.4,454.8 L277.8,448.8 L254.3,446.8 L254.3,446.8 L249.6,446.1 L245.1,444.7 L240.9,442.7 L237.0,440.1 L233.7,437.1 L230.9,433.6 L228.8,429.8 L227.4,425.7 L226.7,421.5 L226.8,417.2 L242.1,271.4 L242.1,271.4 L243.2,265.9 L245.2,260.6 L248.1,255.7 L251.8,251.2 L256.3,247.3 L261.4,244.1 L267.0,241.7 L272.9,240.0 L279.1,239.2 L285.4,239.3Z"/><path d="M285.3,238.3 L383.1,246.5 L383.1,246.5 L388.5,247.4 L393.7,249.0 L398.6,251.3 L403.0,254.2 L406.8,257.7 L410.0,261.8 L412.5,266.2 L414.1,270.9 L414.9,275.8 L414.8,280.7 L399.6,430.7 L399.6,430.7 L398.8,434.9 L397.3,438.9 L395.1,442.7 L392.2,446.1 L388.8,449.1 L384.9,451.5 L380.6,453.4 L376.0,454.7 L371.3,455.3 L366.5,455.2 L343.1,453.2 L343.1,453.2 L342.2,459.2 L340.1,464.9 L336.7,470.0 L332.1,474.5 L326.7,478.0 L320.5,480.4 L314.0,481.7 L307.2,481.8 L300.6,480.6 L294.4,478.2 L288.9,474.8 L284.2,470.5 L280.7,465.3 L278.4,459.7 L277.4,453.8 L277.8,447.8 L254.4,445.8 L254.4,445.8 L249.7,445.1 L245.1,443.7 L240.9,441.7 L237.1,439.1 L233.7,436.1 L231.0,432.6 L228.9,428.8 L227.4,424.7 L226.8,420.5 L226.8,416.2 L242.1,270.4 L242.1,270.4 L243.1,264.9 L245.1,259.6 L248.1,254.7 L251.8,250.2 L256.3,246.3 L261.4,243.1 L267.0,240.7 L272.9,239.0 L279.1,238.2 L285.3,238.3Z"/><path d="M285.3,237.3 L383.1,245.5 L383.1,245.5 L388.5,246.4 L393.7,248.0 L398.6,250.3 L403.0,253.2 L406.8,256.7 L410.0,260.8 L412.5,265.2 L414.1,269.9 L414.9,274.8 L414.8,279.7 L399.7,429.7 L399.7,429.7 L398.9,433.9 L397.4,437.9 L395.1,441.7 L392.3,445.1 L388.9,448.1 L385.0,450.5 L380.7,452.4 L376.1,453.7 L371.4,454.3 L366.6,454.2 L343.1,452.2 L343.1,452.2 L342.3,458.2 L340.1,463.9 L336.7,469.0 L332.2,473.5 L326.7,477.0 L320.6,479.4 L314.0,480.7 L307.3,480.8 L300.7,479.6 L294.5,477.2 L288.9,473.8 L284.3,469.5 L280.7,464.3 L278.4,458.7 L277.4,452.8 L277.9,446.8 L254.4,444.8 L254.4,444.8 L249.7,444.1 L245.2,442.7 L240.9,440.7 L237.1,438.1 L233.7,435.1 L231.0,431.6 L228.9,427.8 L227.5,423.7 L226.8,419.5 L226.8,415.2 L242.0,269.4 L242.0,269.4 L243.1,263.9 L245.1,258.6 L248.0,253.7 L251.8,249.2 L256.2,245.3 L261.3,242.1 L266.9,239.7 L272.9,238.0 L279.1,237.2 L285.3,237.3Z"/><path d="M285.3,236.3 L383.1,244.5 L383.1,244.5 L388.5,245.4 L393.7,246.9 L398.6,249.2 L403.0,252.2 L406.8,255.7 L410.0,259.8 L412.5,264.2 L414.1,268.9 L414.9,273.8 L414.9,278.7 L399.8,428.7 L399.8,428.7 L399.0,432.9 L397.4,436.9 L395.2,440.7 L392.3,444.1 L388.9,447.1 L385.0,449.5 L380.7,451.4 L376.2,452.7 L371.4,453.3 L366.6,453.2 L343.2,451.2 L343.2,451.2 L342.4,457.2 L340.2,462.9 L336.8,468.0 L332.3,472.5 L326.8,476.0 L320.7,478.4 L314.1,479.7 L307.3,479.8 L300.7,478.6 L294.5,476.2 L289.0,472.8 L284.3,468.5 L280.8,463.3 L278.5,457.7 L277.5,451.8 L277.9,445.8 L254.4,443.8 L254.4,443.8 L249.7,443.1 L245.2,441.7 L240.9,439.7 L237.1,437.1 L233.8,434.1 L231.0,430.6 L228.9,426.8 L227.5,422.7 L226.8,418.5 L226.9,414.2 L242.0,268.4 L242.0,268.4 L243.1,262.9 L245.1,257.6 L248.0,252.7 L251.7,248.2 L256.2,244.3 L261.3,241.1 L266.9,238.7 L272.9,237.0 L279.1,236.2 L285.3,236.3Z"/><path d="M285.3,235.3 L383.1,243.5 L383.1,243.5 L388.5,244.4 L393.7,245.9 L398.6,248.2 L403.0,251.2 L406.8,254.7 L410.0,258.8 L412.5,263.2 L414.1,267.9 L414.9,272.8 L414.9,277.7 L399.8,427.7 L399.8,427.7 L399.0,431.9 L397.5,435.9 L395.3,439.7 L392.4,443.1 L389.0,446.1 L385.1,448.5 L380.8,450.4 L376.2,451.7 L371.5,452.3 L366.7,452.2 L343.2,450.2 L343.2,450.2 L342.4,456.2 L340.3,461.9 L336.8,467.0 L332.3,471.5 L326.9,475.0 L320.7,477.4 L314.1,478.7 L307.4,478.8 L300.8,477.6 L294.6,475.2 L289.0,471.8 L284.4,467.5 L280.8,462.3 L278.5,456.7 L277.5,450.8 L277.9,444.8 L254.5,442.8 L254.5,442.8 L249.7,442.1 L245.2,440.7 L241.0,438.7 L237.1,436.1 L233.8,433.1 L231.0,429.6 L228.9,425.8 L227.5,421.7 L226.8,417.5 L226.9,413.2 L242.0,267.4 L242.0,267.4 L243.1,261.9 L245.1,256.6 L248.0,251.7 L251.7,247.2 L256.2,243.3 L261.3,240.1 L266.9,237.7 L272.9,236.0 L279.0,235.2 L285.3,235.3Z"/><path d="M285.2,234.3 L383.1,242.5 L383.1,242.5 L388.5,243.3 L393.7,244.9 L398.6,247.2 L403.0,250.2 L406.9,253.7 L410.0,257.8 L412.5,262.2 L414.1,266.9 L414.9,271.8 L414.9,276.7 L399.9,426.7 L399.9,426.7 L399.1,430.9 L397.6,434.9 L395.3,438.7 L392.5,442.1 L389.1,445.1 L385.2,447.5 L380.9,449.4 L376.3,450.7 L371.6,451.3 L366.8,451.2 L343.3,449.2 L343.3,449.2 L342.5,455.2 L340.3,460.9 L336.9,466.0 L332.4,470.5 L326.9,474.0 L320.8,476.4 L314.2,477.7 L307.5,477.8 L300.8,476.6 L294.6,474.2 L289.1,470.8 L284.4,466.5 L280.9,461.3 L278.5,455.7 L277.6,449.8 L278.0,443.8 L254.5,441.8 L254.5,441.8 L249.8,441.1 L245.2,439.7 L241.0,437.7 L237.2,435.1 L233.8,432.1 L231.0,428.6 L228.9,424.8 L227.5,420.7 L226.8,416.5 L226.9,412.2 L242.0,266.4 L242.0,266.4 L243.0,260.9 L245.1,255.6 L248.0,250.7 L251.7,246.2 L256.2,242.3 L261.3,239.1 L266.9,236.7 L272.8,235.0 L279.0,234.2 L285.2,234.3Z"/><path d="M285.2,233.3 L383.1,241.5 L383.1,241.5 L388.5,242.3 L393.7,243.9 L398.6,246.2 L403.0,249.2 L406.9,252.7 L410.0,256.7 L412.5,261.2 L414.1,265.9 L414.9,270.7 L414.9,275.7 L400.0,425.7 L400.0,425.7 L399.2,429.9 L397.6,433.9 L395.4,437.7 L392.6,441.1 L389.1,444.1 L385.2,446.5 L380.9,448.4 L376.4,449.7 L371.6,450.3 L366.8,450.2 L343.4,448.2 L343.4,448.2 L342.5,454.2 L340.4,459.9 L337.0,465.0 L332.4,469.5 L327.0,473.0 L320.8,475.4 L314.3,476.7 L307.5,476.8 L300.9,475.6 L294.7,473.2 L289.1,469.8 L284.5,465.5 L280.9,460.3 L278.6,454.7 L277.6,448.8 L278.0,442.8 L254.5,440.8 L254.5,440.8 L249.8,440.1 L245.3,438.7 L241.0,436.7 L237.2,434.1 L233.8,431.1 L231.1,427.6 L228.9,423.8 L227.5,419.7 L226.8,415.5 L226.9,411.2 L242.0,265.4 L242.0,265.4 L243.0,259.9 L245.0,254.6 L247.9,249.7 L251.7,245.2 L256.1,241.3 L261.2,238.1 L266.8,235.7 L272.8,234.0 L279.0,233.2 L285.2,233.3Z"/><path d="M285.2,232.3 L383.1,240.5 L383.1,240.5 L388.5,241.3 L393.7,242.9 L398.6,245.2 L403.0,248.2 L406.9,251.7 L410.0,255.7 L412.5,260.2 L414.1,264.9 L415.0,269.7 L414.9,274.7 L400.0,424.7 L400.0,424.7 L399.2,428.9 L397.7,432.9 L395.5,436.7 L392.6,440.1 L389.2,443.1 L385.3,445.5 L381.0,447.4 L376.4,448.7 L371.7,449.3 L366.9,449.2 L343.4,447.2 L343.4,447.2 L342.6,453.2 L340.5,458.9 L337.0,464.0 L332.5,468.5 L327.1,472.0 L320.9,474.4 L314.3,475.7 L307.6,475.8 L301.0,474.6 L294.7,472.2 L289.2,468.8 L284.5,464.5 L281.0,459.3 L278.6,453.7 L277.6,447.8 L278.0,441.8 L254.6,439.8 L254.6,439.8 L249.8,439.1 L245.3,437.7 L241.0,435.7 L237.2,433.1 L233.9,430.1 L231.1,426.6 L229.0,422.8 L227.5,418.7 L226.9,414.5 L226.9,410.2 L241.9,264.4 L241.9,264.4 L243.0,258.9 L245.0,253.6 L247.9,248.7 L251.7,244.2 L256.1,240.3 L261.2,237.1 L266.8,234.7 L272.8,233.0 L279.0,232.2 L285.2,232.3Z"/><path d="M285.2,231.3 L383.0,239.5 L383.0,239.5 L388.5,240.3 L393.7,241.9 L398.6,244.2 L403.0,247.2 L406.9,250.7 L410.0,254.7 L412.5,259.2 L414.2,263.9 L415.0,268.7 L414.9,273.7 L400.1,423.7 L400.1,423.7 L399.3,427.9 L397.8,431.9 L395.6,435.7 L392.7,439.1 L389.3,442.1 L385.4,444.5 L381.1,446.4 L376.5,447.7 L371.8,448.3 L367.0,448.2 L343.5,446.2 L343.5,446.2 L342.7,452.2 L340.5,457.9 L337.1,463.0 L332.6,467.5 L327.1,471.0 L321.0,473.4 L314.4,474.7 L307.6,474.8 L301.0,473.6 L294.8,471.2 L289.2,467.8 L284.6,463.5 L281.0,458.3 L278.7,452.7 L277.7,446.8 L278.1,440.8 L254.6,438.8 L254.6,438.8 L249.9,438.1 L245.3,436.7 L241.1,434.7 L237.2,432.1 L233.9,429.1 L231.1,425.6 L229.0,421.8 L227.6,417.7 L226.9,413.5 L226.9,409.2 L241.9,263.4 L241.9,263.4 L243.0,257.9 L245.0,252.6 L247.9,247.7 L251.6,243.2 L256.1,239.3 L261.2,236.1 L266.8,233.7 L272.8,232.0 L278.9,231.2 L285.2,231.3Z"/><path d="M285.2,230.3 L383.0,238.5 L383.0,238.5 L388.5,239.3 L393.7,240.9 L398.6,243.2 L403.0,246.2 L406.9,249.7 L410.1,253.7 L412.5,258.2 L414.2,262.9 L415.0,267.7 L414.9,272.7 L400.2,422.7 L400.2,422.7 L399.4,426.9 L397.8,430.9 L395.6,434.7 L392.8,438.1 L389.4,441.1 L385.4,443.5 L381.2,445.4 L376.6,446.7 L371.8,447.3 L367.0,447.2 L343.5,445.2 L343.5,445.2 L342.7,451.2 L340.6,456.9 L337.2,462.0 L332.6,466.5 L327.2,470.0 L321.0,472.4 L314.4,473.7 L307.7,473.8 L301.1,472.6 L294.8,470.2 L289.3,466.8 L284.6,462.5 L281.0,457.3 L278.7,451.7 L277.7,445.8 L278.1,439.8 L254.6,437.8 L254.6,437.8 L249.9,437.1 L245.3,435.7 L241.1,433.7 L237.3,431.1 L233.9,428.1 L231.1,424.6 L229.0,420.8 L227.6,416.7 L226.9,412.5 L227.0,408.2 L241.9,262.4 L241.9,262.4 L243.0,256.9 L245.0,251.6 L247.9,246.7 L251.6,242.2 L256.1,238.3 L261.2,235.1 L266.8,232.7 L272.7,231.0 L278.9,230.2 L285.2,230.3Z"/><path d="M285.1,229.3 L383.0,237.5 L383.0,237.5 L388.5,238.3 L393.7,239.9 L398.6,242.2 L403.0,245.2 L406.9,248.7 L410.1,252.7 L412.5,257.1 L414.2,261.9 L415.0,266.7 L414.9,271.7 L400.2,421.7 L400.2,421.7 L399.4,425.9 L397.9,429.9 L395.7,433.7 L392.8,437.1 L389.4,440.1 L385.5,442.5 L381.2,444.4 L376.7,445.7 L371.9,446.3 L367.1,446.2 L343.6,444.2 L343.6,444.2 L342.8,450.2 L340.6,455.9 L337.2,461.0 L332.7,465.5 L327.2,469.0 L321.1,471.4 L314.5,472.7 L307.8,472.8 L301.1,471.6 L294.9,469.2 L289.3,465.8 L284.7,461.5 L281.1,456.3 L278.8,450.7 L277.8,444.8 L278.2,438.8 L254.7,436.8 L254.7,436.8 L249.9,436.1 L245.4,434.7 L241.1,432.7 L237.3,430.1 L233.9,427.1 L231.2,423.6 L229.0,419.8 L227.6,415.7 L226.9,411.5 L227.0,407.2 L241.9,261.4 L241.9,261.4 L242.9,255.9 L244.9,250.6 L247.8,245.7 L251.6,241.2 L256.0,237.3 L261.1,234.1 L266.7,231.7 L272.7,230.0 L278.9,229.2 L285.1,229.3Z"/><path d="M285.1,228.3 L383.0,236.5 L383.0,236.5 L388.5,237.3 L393.7,238.9 L398.6,241.2 L403.0,244.2 L406.9,247.7 L410.1,251.7 L412.5,256.1 L414.2,260.8 L415.0,265.7 L414.9,270.6 L400.3,420.7 L400.3,420.7 L399.5,424.9 L398.0,428.9 L395.8,432.7 L392.9,436.1 L389.5,439.1 L385.6,441.5 L381.3,443.4 L376.7,444.7 L372.0,445.3 L367.2,445.2 L343.7,443.2 L343.7,443.2 L342.9,449.2 L340.7,454.9 L337.3,460.0 L332.8,464.5 L327.3,468.0 L321.2,470.4 L314.6,471.7 L307.8,471.8 L301.2,470.6 L294.9,468.2 L289.4,464.8 L284.7,460.5 L281.1,455.3 L278.8,449.7 L277.8,443.8 L278.2,437.8 L254.7,435.8 L254.7,435.8 L250.0,435.1 L245.4,433.7 L241.2,431.7 L237.3,429.1 L233.9,426.1 L231.2,422.6 L229.0,418.8 L227.6,414.7 L226.9,410.5 L227.0,406.2 L241.9,260.4 L241.9,260.4 L242.9,254.9 L244.9,249.6 L247.8,244.7 L251.6,240.2 L256.0,236.3 L261.1,233.1 L266.7,230.7 L272.7,229.0 L278.9,228.2 L285.1,228.3Z"/><path d="M285.1,227.3 L383.0,235.5 L383.0,235.5 L388.5,236.3 L393.7,237.9 L398.6,240.2 L403.0,243.2 L406.9,246.7 L410.1,250.7 L412.5,255.1 L414.2,259.8 L415.0,264.7 L415.0,269.6 L400.4,419.7 L400.4,419.7 L399.6,423.9 L398.0,427.9 L395.8,431.7 L393.0,435.1 L389.6,438.1 L385.7,440.5 L381.4,442.4 L376.8,443.7 L372.0,444.3 L367.2,444.2 L343.7,442.2 L343.7,442.2 L342.9,448.2 L340.8,453.9 L337.4,459.0 L332.8,463.5 L327.4,467.0 L321.2,469.4 L314.6,470.7 L307.9,470.8 L301.2,469.6 L295.0,467.2 L289.4,463.8 L284.8,459.5 L281.2,454.3 L278.8,448.7 L277.9,442.8 L278.2,436.8 L254.7,434.8 L254.7,434.8 L250.0,434.1 L245.4,432.7 L241.2,430.7 L237.3,428.1 L234.0,425.1 L231.2,421.6 L229.1,417.8 L227.6,413.7 L226.9,409.5 L227.0,405.2 L241.8,259.4 L241.8,259.4 L242.9,253.9 L244.9,248.6 L247.8,243.7 L251.5,239.2 L256.0,235.3 L261.1,232.1 L266.7,229.7 L272.7,228.0 L278.8,227.2 L285.1,227.3Z"/><path d="M285.1,226.3 L383.0,234.5 L383.0,234.5 L388.5,235.3 L393.7,236.9 L398.6,239.2 L403.0,242.1 L406.9,245.7 L410.1,249.7 L412.5,254.1 L414.2,258.8 L415.0,263.7 L415.0,268.6 L400.4,418.7 L400.4,418.7 L399.6,422.9 L398.1,426.9 L395.9,430.7 L393.1,434.1 L389.6,437.1 L385.7,439.5 L381.4,441.4 L376.9,442.7 L372.1,443.3 L367.3,443.2 L343.8,441.2 L343.8,441.2 L343.0,447.2 L340.8,452.9 L337.4,458.0 L332.9,462.5 L327.4,466.0 L321.3,468.4 L314.7,469.7 L307.9,469.8 L301.3,468.6 L295.1,466.2 L289.5,462.8 L284.8,458.5 L281.2,453.3 L278.9,447.7 L277.9,441.8 L278.3,435.8 L254.7,433.8 L254.7,433.8 L250.0,433.1 L245.5,431.7 L241.2,429.7 L237.4,427.1 L234.0,424.1 L231.2,420.6 L229.1,416.8 L227.7,412.7 L227.0,408.5 L227.0,404.2 L241.8,258.4 L241.8,258.4 L242.9,252.9 L244.9,247.6 L247.8,242.7 L251.5,238.2 L256.0,234.3 L261.1,231.1 L266.7,228.7 L272.6,227.0 L278.8,226.2 L285.1,226.3Z"/><path d="M285.0,225.3 L383.0,233.5 L383.0,233.5 L388.4,234.3 L393.7,235.9 L398.6,238.2 L403.0,241.1 L406.9,244.7 L410.1,248.7 L412.5,253.1 L414.2,257.8 L415.0,262.7 L415.0,267.6 L400.5,417.7 L400.5,417.7 L399.7,421.9 L398.2,425.9 L396.0,429.7 L393.1,433.1 L389.7,436.1 L385.8,438.5 L381.5,440.4 L376.9,441.7 L372.2,442.3 L367.4,442.2 L343.8,440.2 L343.8,440.2 L343.0,446.2 L340.9,451.9 L337.5,457.0 L333.0,461.5 L327.5,465.0 L321.3,467.4 L314.7,468.7 L308.0,468.8 L301.3,467.6 L295.1,465.2 L289.5,461.8 L284.9,457.5 L281.3,452.3 L278.9,446.7 L277.9,440.8 L278.3,434.8 L254.8,432.8 L254.8,432.8 L250.0,432.1 L245.5,430.7 L241.2,428.7 L237.4,426.1 L234.0,423.1 L231.2,419.6 L229.1,415.8 L227.7,411.7 L227.0,407.5 L227.0,403.2 L241.8,257.4 L241.8,257.4 L242.8,251.9 L244.8,246.6 L247.7,241.7 L251.5,237.2 L255.9,233.3 L261.0,230.1 L266.6,227.7 L272.6,226.0 L278.8,225.2 L285.0,225.3Z"/><path d="M285.0,224.3 L383.0,232.5 L383.0,232.5 L388.4,233.3 L393.7,234.9 L398.6,237.2 L403.0,240.1 L406.9,243.7 L410.1,247.7 L412.5,252.1 L414.2,256.8 L415.0,261.7 L415.0,266.6 L400.6,416.7 L400.6,416.7 L399.8,420.9 L398.3,424.9 L396.0,428.7 L393.2,432.1 L389.8,435.1 L385.9,437.5 L381.6,439.4 L377.0,440.7 L372.2,441.3 L367.4,441.2 L343.9,439.2 L343.9,439.2 L343.1,445.2 L341.0,450.9 L337.5,456.0 L333.0,460.5 L327.6,464.0 L321.4,466.4 L314.8,467.7 L308.0,467.8 L301.4,466.6 L295.2,464.2 L289.6,460.8 L284.9,456.5 L281.3,451.3 L279.0,445.7 L278.0,439.8 L278.4,433.8 L254.8,431.8 L254.8,431.8 L250.1,431.1 L245.5,429.7 L241.3,427.7 L237.4,425.1 L234.0,422.1 L231.3,418.6 L229.1,414.8 L227.7,410.7 L227.0,406.5 L227.0,402.2 L241.8,256.4 L241.8,256.4 L242.8,250.9 L244.8,245.6 L247.7,240.7 L251.5,236.2 L255.9,232.3 L261.0,229.1 L266.6,226.7 L272.6,225.0 L278.8,224.2 L285.0,224.3Z"/><path d="M285.0,223.3 L383.0,231.5 L383.0,231.5 L388.4,232.3 L393.7,233.9 L398.6,236.2 L403.0,239.1 L406.9,242.7 L410.1,246.7 L412.5,251.1 L414.2,255.8 L415.0,260.7 L415.0,265.6 L400.6,415.7 L400.6,415.7 L399.8,419.9 L398.3,423.9 L396.1,427.7 L393.3,431.1 L389.9,434.1 L385.9,436.5 L381.6,438.4 L377.1,439.7 L372.3,440.3 L367.5,440.2 L344.0,438.2 L344.0,438.2 L343.2,444.2 L341.0,449.9 L337.6,455.0 L333.1,459.5 L327.6,463.0 L321.5,465.4 L314.9,466.7 L308.1,466.8 L301.5,465.6 L295.2,463.2 L289.6,459.8 L284.9,455.5 L281.4,450.3 L279.0,444.7 L278.0,438.8 L278.4,432.8 L254.8,430.8 L254.8,430.8 L250.1,430.1 L245.5,428.7 L241.3,426.7 L237.4,424.1 L234.1,421.1 L231.3,417.6 L229.1,413.8 L227.7,409.7 L227.0,405.5 L227.1,401.2 L241.8,255.4 L241.8,255.4 L242.8,249.9 L244.8,244.6 L247.7,239.7 L251.4,235.2 L255.9,231.3 L261.0,228.1 L266.6,225.7 L272.6,224.0 L278.7,223.2 L285.0,223.3Z"/><path d="M285.0,222.3 L383.0,230.4 L383.0,230.4 L388.4,231.3 L393.7,232.9 L398.6,235.2 L403.0,238.1 L406.9,241.7 L410.1,245.7 L412.6,250.1 L414.2,254.8 L415.1,259.7 L415.0,264.6 L400.7,414.7 L400.7,414.7 L399.9,418.9 L398.4,422.9 L396.2,426.7 L393.3,430.1 L389.9,433.1 L386.0,435.5 L381.7,437.4 L377.1,438.7 L372.4,439.3 L367.6,439.2 L344.0,437.2 L344.0,437.2 L343.2,443.2 L341.1,448.9 L337.7,454.0 L333.1,458.5 L327.7,462.0 L321.5,464.4 L314.9,465.7 L308.2,465.8 L301.5,464.6 L295.3,462.2 L289.7,458.8 L285.0,454.5 L281.4,449.3 L279.1,443.7 L278.1,437.8 L278.4,431.8 L254.9,429.8 L254.9,429.8 L250.1,429.1 L245.6,427.7 L241.3,425.7 L237.4,423.1 L234.1,420.1 L231.3,416.6 L229.2,412.8 L227.7,408.7 L227.0,404.5 L227.1,400.2 L241.7,254.4 L241.7,254.4 L242.8,248.9 L244.8,243.6 L247.7,238.7 L251.4,234.2 L255.9,230.3 L261.0,227.1 L266.6,224.7 L272.5,223.0 L278.7,222.2 L285.0,222.3Z"/><path d="M284.9,221.3 L383.0,229.4 L383.0,229.4 L388.4,230.3 L393.7,231.9 L398.6,234.2 L403.0,237.1 L406.9,240.7 L410.1,244.7 L412.6,249.1 L414.2,253.8 L415.1,258.7 L415.0,263.6 L400.8,413.7 L400.8,413.7 L400.0,417.9 L398.5,421.9 L396.3,425.7 L393.4,429.1 L390.0,432.1 L386.1,434.5 L381.8,436.4 L377.2,437.7 L372.5,438.3 L367.6,438.2 L344.1,436.2 L344.1,436.2 L343.3,442.2 L341.1,447.9 L337.7,453.0 L333.2,457.5 L327.8,461.0 L321.6,463.4 L315.0,464.7 L308.2,464.8 L301.6,463.6 L295.3,461.2 L289.7,457.8 L285.0,453.5 L281.5,448.3 L279.1,442.7 L278.1,436.8 L278.5,430.8 L254.9,428.8 L254.9,428.8 L250.2,428.1 L245.6,426.7 L241.3,424.7 L237.5,422.1 L234.1,419.1 L231.3,415.6 L229.2,411.8 L227.7,407.7 L227.0,403.5 L227.1,399.2 L241.7,253.4 L241.7,253.4 L242.8,247.9 L244.8,242.6 L247.7,237.7 L251.4,233.2 L255.9,229.3 L260.9,226.1 L266.5,223.7 L272.5,222.0 L278.7,221.2 L284.9,221.3Z"/><path d="M284.9,220.3 L383.0,228.4 L383.0,228.4 L388.4,229.3 L393.7,230.9 L398.6,233.2 L403.0,236.1 L406.9,239.7 L410.1,243.7 L412.6,248.1 L414.2,252.8 L415.1,257.7 L415.0,262.6 L400.8,412.6 L400.8,412.6 L400.0,416.9 L398.5,420.9 L396.3,424.7 L393.5,428.1 L390.1,431.1 L386.2,433.5 L381.9,435.4 L377.3,436.7 L372.5,437.3 L367.7,437.2 L344.1,435.2 L344.1,435.2 L343.3,441.2 L341.2,446.9 L337.8,452.0 L333.3,456.5 L327.8,460.0 L321.7,462.4 L315.1,463.7 L308.3,463.8 L301.6,462.6 L295.4,460.2 L289.8,456.8 L285.1,452.5 L281.5,447.3 L279.1,441.7 L278.1,435.8 L278.5,429.8 L254.9,427.8 L254.9,427.8 L250.2,427.1 L245.6,425.7 L241.4,423.7 L237.5,421.1 L234.1,418.1 L231.3,414.6 L229.2,410.8 L227.8,406.7 L227.1,402.5 L227.1,398.2 L241.7,252.4 L241.7,252.4 L242.7,246.9 L244.7,241.6 L247.6,236.7 L251.4,232.2 L255.8,228.3 L260.9,225.1 L266.5,222.7 L272.5,221.0 L278.7,220.2 L284.9,220.3Z"/><path d="M284.9,219.3 L383.0,227.4 L383.0,227.4 L388.4,228.3 L393.7,229.9 L398.6,232.2 L403.0,235.1 L406.9,238.6 L410.1,242.7 L412.6,247.1 L414.2,251.8 L415.1,256.7 L415.0,261.6 L400.9,411.6 L400.9,411.6 L400.1,415.9 L398.6,419.9 L396.4,423.7 L393.6,427.1 L390.1,430.1 L386.2,432.5 L381.9,434.4 L377.3,435.7 L372.6,436.3 L367.8,436.2 L344.2,434.2 L344.2,434.2 L343.4,440.2 L341.3,445.9 L337.9,451.0 L333.3,455.5 L327.9,459.0 L321.7,461.4 L315.1,462.7 L308.3,462.8 L301.7,461.6 L295.4,459.2 L289.8,455.8 L285.1,451.5 L281.5,446.3 L279.2,440.7 L278.2,434.8 L278.6,428.8 L255.0,426.8 L255.0,426.8 L250.2,426.1 L245.7,424.7 L241.4,422.7 L237.5,420.1 L234.2,417.1 L231.4,413.6 L229.2,409.8 L227.8,405.7 L227.1,401.5 L227.1,397.2 L241.7,251.4 L241.7,251.4 L242.7,245.9 L244.7,240.6 L247.6,235.7 L251.3,231.2 L255.8,227.3 L260.9,224.1 L266.5,221.7 L272.5,220.0 L278.6,219.2 L284.9,219.3Z"/><path d="M284.9,218.3 L383.0,226.4 L383.0,226.4 L388.4,227.3 L393.6,228.9 L398.5,231.2 L403.0,234.1 L406.9,237.6 L410.1,241.7 L412.6,246.1 L414.3,250.8 L415.1,255.7 L415.1,260.6 L401.0,410.6 L401.0,410.6 L400.2,414.9 L398.7,418.9 L396.5,422.7 L393.6,426.1 L390.2,429.1 L386.3,431.5 L382.0,433.4 L377.4,434.7 L372.7,435.3 L367.8,435.2 L344.3,433.2 L344.3,433.2 L343.5,439.2 L341.3,444.9 L337.9,450.0 L333.4,454.5 L327.9,458.0 L321.8,460.4 L315.2,461.7 L308.4,461.8 L301.7,460.6 L295.5,458.2 L289.9,454.8 L285.2,450.5 L281.6,445.3 L279.2,439.7 L278.2,433.8 L278.6,427.8 L255.0,425.8 L255.0,425.8 L250.2,425.1 L245.7,423.7 L241.4,421.7 L237.5,419.1 L234.2,416.1 L231.4,412.6 L229.2,408.8 L227.8,404.7 L227.1,400.5 L227.1,396.2 L241.7,250.4 L241.7,250.4 L242.7,244.9 L244.7,239.6 L247.6,234.7 L251.3,230.2 L255.8,226.3 L260.9,223.1 L266.5,220.7 L272.4,219.0 L278.6,218.2 L284.9,218.3Z"/><path d="M284.9,217.3 L383.0,225.4 L383.0,225.4 L388.4,226.3 L393.6,227.9 L398.5,230.2 L403.0,233.1 L406.9,236.6 L410.1,240.7 L412.6,245.1 L414.3,249.8 L415.1,254.7 L415.1,259.6 L401.0,409.6 L401.0,409.6 L400.2,413.9 L398.7,417.9 L396.5,421.7 L393.7,425.1 L390.3,428.1 L386.4,430.5 L382.1,432.4 L377.5,433.7 L372.7,434.3 L367.9,434.2 L344.3,432.2 L344.3,432.2 L343.5,438.2 L341.4,443.9 L338.0,449.0 L333.5,453.5 L328.0,457.0 L321.8,459.4 L315.2,460.7 L308.5,460.8 L301.8,459.6 L295.5,457.2 L289.9,453.8 L285.2,449.5 L281.6,444.3 L279.3,438.7 L278.3,432.8 L278.6,426.8 L255.0,424.8 L255.0,424.8 L250.3,424.1 L245.7,422.7 L241.4,420.7 L237.6,418.1 L234.2,415.1 L231.4,411.6 L229.3,407.8 L227.8,403.7 L227.1,399.5 L227.1,395.2 L241.6,249.4 L241.6,249.4 L242.7,243.9 L244.7,238.6 L247.6,233.7 L251.3,229.2 L255.8,225.3 L260.8,222.1 L266.4,219.7 L272.4,218.0 L278.6,217.2 L284.9,217.3Z"/><path d="M284.8,216.3 L383.0,224.4 L383.0,224.4 L388.4,225.3 L393.6,226.8 L398.5,229.1 L403.0,232.1 L406.9,235.6 L410.1,239.7 L412.6,244.1 L414.3,248.8 L415.1,253.7 L415.1,258.6 L401.1,408.6 L401.1,408.6 L400.3,412.9 L398.8,416.9 L396.6,420.7 L393.8,424.1 L390.3,427.1 L386.4,429.5 L382.1,431.4 L377.6,432.7 L372.8,433.3 L368.0,433.2 L344.4,431.2 L344.4,431.2 L343.6,437.2 L341.5,442.9 L338.1,448.0 L333.5,452.5 L328.1,456.0 L321.9,458.4 L315.3,459.7 L308.5,459.8 L301.9,458.6 L295.6,456.2 L290.0,452.8 L285.3,448.4 L281.7,443.3 L279.3,437.7 L278.3,431.8 L278.7,425.8 L255.1,423.8 L255.1,423.8 L250.3,423.1 L245.7,421.7 L241.5,419.7 L237.6,417.1 L234.2,414.1 L231.4,410.6 L229.3,406.8 L227.8,402.7 L227.1,398.5 L227.2,394.2 L241.6,248.4 L241.6,248.4 L242.6,242.9 L244.6,237.6 L247.5,232.7 L251.3,228.2 L255.7,224.3 L260.8,221.1 L266.4,218.7 L272.4,217.0 L278.6,216.2 L284.8,216.3Z"/><path d="M284.8,215.3 L383.0,223.4 L383.0,223.4 L388.4,224.3 L393.6,225.8 L398.5,228.1 L403.0,231.1 L406.9,234.6 L410.1,238.7 L412.6,243.1 L414.3,247.8 L415.1,252.7 L415.1,257.6 L401.2,407.6 L401.2,407.6 L400.4,411.8 L398.9,415.9 L396.7,419.7 L393.8,423.1 L390.4,426.1 L386.5,428.5 L382.2,430.4 L377.6,431.7 L372.9,432.3 L368.0,432.2 L344.4,430.2 L344.4,430.2 L343.7,436.2 L341.5,441.9 L338.1,447.0 L333.6,451.5 L328.1,455.0 L322.0,457.4 L315.4,458.7 L308.6,458.8 L301.9,457.6 L295.6,455.2 L290.0,451.8 L285.3,447.4 L281.7,442.3 L279.4,436.7 L278.3,430.8 L278.7,424.8 L255.1,422.8 L255.1,422.8 L250.3,422.1 L245.8,420.7 L241.5,418.7 L237.6,416.1 L234.2,413.1 L231.4,409.6 L229.3,405.8 L227.8,401.7 L227.1,397.5 L227.2,393.2 L241.6,247.4 L241.6,247.4 L242.6,241.9 L244.6,236.6 L247.5,231.7 L251.2,227.2 L255.7,223.3 L260.8,220.1 L266.4,217.7 L272.4,216.0 L278.6,215.2 L284.8,215.3Z"/><path d="M284.8,214.3 L382.9,222.4 L382.9,222.4 L388.4,223.2 L393.6,224.8 L398.5,227.1 L403.0,230.1 L406.9,233.6 L410.1,237.6 L412.6,242.1 L414.3,246.8 L415.1,251.6 L415.1,256.6 L401.2,406.6 L401.2,406.6 L400.5,410.8 L399.0,414.9 L396.8,418.7 L393.9,422.1 L390.5,425.1 L386.6,427.5 L382.3,429.4 L377.7,430.7 L372.9,431.3 L368.1,431.2 L344.5,429.2 L344.5,429.2 L343.7,435.2 L341.6,440.9 L338.2,446.0 L333.7,450.5 L328.2,454.0 L322.0,456.4 L315.4,457.7 L308.6,457.8 L302.0,456.6 L295.7,454.2 L290.1,450.8 L285.4,446.4 L281.8,441.3 L279.4,435.7 L278.4,429.8 L278.7,423.8 L255.1,421.8 L255.1,421.8 L250.4,421.1 L245.8,419.7 L241.5,417.7 L237.6,415.1 L234.3,412.1 L231.5,408.6 L229.3,404.8 L227.9,400.7 L227.2,396.5 L227.2,392.2 L241.6,246.4 L241.6,246.4 L242.6,240.9 L244.6,235.6 L247.5,230.7 L251.2,226.2 L255.7,222.3 L260.8,219.1 L266.4,216.7 L272.3,215.0 L278.5,214.2 L284.8,214.3Z"/><path d="M284.8,213.3 L382.9,221.4 L382.9,221.4 L388.4,222.2 L393.6,223.8 L398.5,226.1 L403.0,229.1 L406.9,232.6 L410.1,236.6 L412.6,241.1 L414.3,245.8 L415.1,250.6 L415.1,255.6 L401.3,405.6 L401.3,405.6 L400.5,409.8 L399.0,413.9 L396.8,417.7 L394.0,421.1 L390.6,424.1 L386.7,426.5 L382.4,428.4 L377.8,429.7 L373.0,430.3 L368.2,430.2 L344.6,428.2 L344.6,428.2 L343.8,434.2 L341.6,439.9 L338.2,445.0 L333.7,449.5 L328.3,453.0 L322.1,455.4 L315.5,456.7 L308.7,456.8 L302.0,455.6 L295.8,453.2 L290.1,449.8 L285.4,445.4 L281.8,440.3 L279.4,434.7 L278.4,428.8 L278.8,422.8 L255.2,420.8 L255.2,420.8 L250.4,420.1 L245.8,418.7 L241.5,416.7 L237.7,414.1 L234.3,411.1 L231.5,407.6 L229.3,403.8 L227.9,399.7 L227.2,395.5 L227.2,391.2 L241.5,245.4 L241.5,245.4 L242.6,239.9 L244.6,234.6 L247.5,229.7 L251.2,225.2 L255.7,221.3 L260.7,218.1 L266.3,215.7 L272.3,214.0 L278.5,213.2 L284.8,213.3Z"/><path d="M284.7,212.3 L382.9,220.4 L382.9,220.4 L388.4,221.2 L393.6,222.8 L398.5,225.1 L403.0,228.1 L406.9,231.6 L410.1,235.6 L412.6,240.1 L414.3,244.8 L415.1,249.6 L415.1,254.6 L401.4,404.6 L401.4,404.6 L400.6,408.8 L399.1,412.9 L396.9,416.7 L394.0,420.1 L390.6,423.1 L386.7,425.5 L382.4,427.4 L377.8,428.7 L373.1,429.3 L368.2,429.2 L344.6,427.2 L344.6,427.2 L343.8,433.2 L341.7,438.9 L338.3,444.0 L333.8,448.5 L328.3,452.0 L322.2,454.4 L315.5,455.7 L308.8,455.8 L302.1,454.6 L295.8,452.2 L290.2,448.8 L285.5,444.4 L281.9,439.3 L279.5,433.7 L278.5,427.8 L278.8,421.8 L255.2,419.8 L255.2,419.8 L250.4,419.1 L245.9,417.7 L241.6,415.7 L237.7,413.1 L234.3,410.1 L231.5,406.6 L229.4,402.8 L227.9,398.7 L227.2,394.5 L227.2,390.2 L241.5,244.4 L241.5,244.4 L242.6,238.9 L244.5,233.6 L247.4,228.7 L251.2,224.2 L255.6,220.3 L260.7,217.1 L266.3,214.7 L272.3,213.0 L278.5,212.2 L284.7,212.3Z"/></g>
<path d="M278.9,421.8L277.5,455.8" stroke="#2a2f38" stroke-width="1.2"/>
<path d="M344.6,427.2L342.5,461.2" stroke="#2a2f38" stroke-width="1.2"/>
<path d="M284.7,212.3 L382.9,220.4 L382.9,220.4 L388.4,221.2 L393.6,222.8 L398.5,225.1 L403.0,228.1 L406.9,231.6 L410.1,235.6 L412.6,240.1 L414.3,244.8 L415.1,249.6 L415.1,254.6 L401.4,404.6 L401.4,404.6 L400.6,408.8 L399.1,412.9 L396.9,416.7 L394.0,420.1 L390.6,423.1 L386.7,425.5 L382.4,427.4 L377.8,428.7 L373.1,429.3 L368.2,429.2 L344.6,427.2 L344.6,427.2 L343.8,433.2 L341.7,438.9 L338.3,444.0 L333.8,448.5 L328.3,452.0 L322.2,454.4 L315.5,455.7 L308.8,455.8 L302.1,454.6 L295.8,452.2 L290.2,448.8 L285.5,444.4 L281.9,439.3 L279.5,433.7 L278.5,427.8 L278.8,421.8 L255.2,419.8 L255.2,419.8 L250.4,419.1 L245.9,417.7 L241.6,415.7 L237.7,413.1 L234.3,410.1 L231.5,406.6 L229.4,402.8 L227.9,398.7 L227.2,394.5 L227.2,390.2 L241.5,244.4 L241.5,244.4 L242.6,238.9 L244.5,233.6 L247.4,228.7 L251.2,224.2 L255.6,220.3 L260.7,217.1 L266.3,214.7 L272.3,213.0 L278.5,212.2 L284.7,212.3Z" fill="#d92f3c" stroke="#2a2f38" stroke-width="1.5" stroke-linejoin="round"/>
<g fill="none" stroke="#3e4f6e" stroke-width="2.4" stroke-linejoin="round"><path d="M739.0,340.0 L739.4,335.6 L740.6,331.3 L742.6,327.3 L745.3,323.5 L748.7,320.2 L752.6,317.3 L757.0,315.1 L761.8,313.4 L766.8,312.3 L772.0,312.0 L777.2,312.3 L782.2,313.4 L787.0,315.1 L791.4,317.3 L795.3,320.2 L798.7,323.5 L801.4,327.3 L803.4,331.3 L804.6,335.6 L805.0,340.0 L798.5,412.0 L798.1,415.4 L796.9,418.8 L794.9,422.0 L792.2,424.9 L788.8,427.6 L784.9,429.8 L780.5,431.6 L775.7,432.9 L770.7,433.7 L765.5,434.0 L760.3,433.7 L755.3,432.9 L750.5,431.6 L746.1,429.8 L742.2,427.6 L738.8,424.9 L736.1,422.0 L734.1,418.8 L732.9,415.4 L732.5,412.0Z"/><path d="M739.0,338.0 L739.4,333.6 L740.6,329.3 L742.6,325.3 L745.3,321.5 L748.7,318.2 L752.6,315.3 L757.0,313.1 L761.8,311.4 L766.8,310.3 L772.0,310.0 L777.2,310.3 L782.2,311.4 L787.0,313.1 L791.4,315.3 L795.3,318.2 L798.7,321.5 L801.4,325.3 L803.4,329.3 L804.6,333.6 L805.0,338.0 L798.5,410.0 L798.1,413.4 L796.9,416.8 L794.9,420.0 L792.2,422.9 L788.8,425.6 L784.9,427.8 L780.5,429.6 L775.7,430.9 L770.7,431.7 L765.5,432.0 L760.3,431.7 L755.3,430.9 L750.5,429.6 L746.1,427.8 L742.2,425.6 L738.8,422.9 L736.1,420.0 L734.1,416.8 L732.9,413.4 L732.5,410.0Z"/><path d="M739.0,336.0 L739.4,331.6 L740.6,327.3 L742.6,323.3 L745.3,319.5 L748.7,316.2 L752.6,313.3 L757.0,311.1 L761.8,309.4 L766.8,308.3 L772.0,308.0 L777.2,308.3 L782.2,309.4 L787.0,311.1 L791.4,313.3 L795.3,316.2 L798.7,319.5 L801.4,323.3 L803.4,327.3 L804.6,331.6 L805.0,336.0 L798.5,408.0 L798.1,411.4 L796.9,414.8 L794.9,418.0 L792.2,420.9 L788.8,423.6 L784.9,425.8 L780.5,427.6 L775.7,428.9 L770.7,429.7 L765.5,430.0 L760.3,429.7 L755.3,428.9 L750.5,427.6 L746.1,425.8 L742.2,423.6 L738.8,420.9 L736.1,418.0 L734.1,414.8 L732.9,411.4 L732.5,408.0Z"/><path d="M739.0,334.0 L739.4,329.6 L740.6,325.3 L742.6,321.3 L745.3,317.5 L748.7,314.2 L752.6,311.3 L757.0,309.1 L761.8,307.4 L766.8,306.3 L772.0,306.0 L777.2,306.3 L782.2,307.4 L787.0,309.1 L791.4,311.3 L795.3,314.2 L798.7,317.5 L801.4,321.3 L803.4,325.3 L804.6,329.6 L805.0,334.0 L798.5,406.0 L798.1,409.4 L796.9,412.8 L794.9,416.0 L792.2,418.9 L788.8,421.6 L784.9,423.8 L780.5,425.6 L775.7,426.9 L770.7,427.7 L765.5,428.0 L760.3,427.7 L755.3,426.9 L750.5,425.6 L746.1,423.8 L742.2,421.6 L738.8,418.9 L736.1,416.0 L734.1,412.8 L732.9,409.4 L732.5,406.0Z"/><path d="M739.0,332.0 L739.4,327.6 L740.6,323.3 L742.6,319.3 L745.3,315.5 L748.7,312.2 L752.6,309.3 L757.0,307.1 L761.8,305.4 L766.8,304.3 L772.0,304.0 L777.2,304.3 L782.2,305.4 L787.0,307.1 L791.4,309.3 L795.3,312.2 L798.7,315.5 L801.4,319.3 L803.4,323.3 L804.6,327.6 L805.0,332.0 L798.5,404.0 L798.1,407.4 L796.9,410.8 L794.9,414.0 L792.2,416.9 L788.8,419.6 L784.9,421.8 L780.5,423.6 L775.7,424.9 L770.7,425.7 L765.5,426.0 L760.3,425.7 L755.3,424.9 L750.5,423.6 L746.1,421.8 L742.2,419.6 L738.8,416.9 L736.1,414.0 L734.1,410.8 L732.9,407.4 L732.5,404.0Z"/><path d="M739.0,330.0 L739.4,325.6 L740.6,321.3 L742.6,317.3 L745.3,313.5 L748.7,310.2 L752.6,307.3 L757.0,305.1 L761.8,303.4 L766.8,302.3 L772.0,302.0 L777.2,302.3 L782.2,303.4 L787.0,305.1 L791.4,307.3 L795.3,310.2 L798.7,313.5 L801.4,317.3 L803.4,321.3 L804.6,325.6 L805.0,330.0 L798.5,402.0 L798.1,405.4 L796.9,408.8 L794.9,412.0 L792.2,414.9 L788.8,417.6 L784.9,419.8 L780.5,421.6 L775.7,422.9 L770.7,423.7 L765.5,424.0 L760.3,423.7 L755.3,422.9 L750.5,421.6 L746.1,419.8 L742.2,417.6 L738.8,414.9 L736.1,412.0 L734.1,408.8 L732.9,405.4 L732.5,402.0Z"/><path d="M739.0,328.0 L739.4,323.6 L740.6,319.3 L742.6,315.3 L745.3,311.5 L748.7,308.2 L752.6,305.3 L757.0,303.1 L761.8,301.4 L766.8,300.3 L772.0,300.0 L777.2,300.3 L782.2,301.4 L787.0,303.1 L791.4,305.3 L795.3,308.2 L798.7,311.5 L801.4,315.3 L803.4,319.3 L804.6,323.6 L805.0,328.0 L798.5,400.0 L798.1,403.4 L796.9,406.8 L794.9,410.0 L792.2,412.9 L788.8,415.6 L784.9,417.8 L780.5,419.6 L775.7,420.9 L770.7,421.7 L765.5,422.0 L760.3,421.7 L755.3,420.9 L750.5,419.6 L746.1,417.8 L742.2,415.6 L738.8,412.9 L736.1,410.0 L734.1,406.8 L732.9,403.4 L732.5,400.0Z"/><path d="M739.0,326.0 L739.4,321.6 L740.6,317.3 L742.6,313.3 L745.3,309.5 L748.7,306.2 L752.6,303.3 L757.0,301.1 L761.8,299.4 L766.8,298.3 L772.0,298.0 L777.2,298.3 L782.2,299.4 L787.0,301.1 L791.4,303.3 L795.3,306.2 L798.7,309.5 L801.4,313.3 L803.4,317.3 L804.6,321.6 L805.0,326.0 L798.5,398.0 L798.1,401.4 L796.9,404.8 L794.9,408.0 L792.2,410.9 L788.8,413.6 L784.9,415.8 L780.5,417.6 L775.7,418.9 L770.7,419.7 L765.5,420.0 L760.3,419.7 L755.3,418.9 L750.5,417.6 L746.1,415.8 L742.2,413.6 L738.8,410.9 L736.1,408.0 L734.1,404.8 L732.9,401.4 L732.5,398.0Z"/><path d="M739.0,324.0 L739.4,319.6 L740.6,315.3 L742.6,311.3 L745.3,307.5 L748.7,304.2 L752.6,301.3 L757.0,299.1 L761.8,297.4 L766.8,296.3 L772.0,296.0 L777.2,296.3 L782.2,297.4 L787.0,299.1 L791.4,301.3 L795.3,304.2 L798.7,307.5 L801.4,311.3 L803.4,315.3 L804.6,319.6 L805.0,324.0 L798.5,396.0 L798.1,399.4 L796.9,402.8 L794.9,406.0 L792.2,408.9 L788.8,411.6 L784.9,413.8 L780.5,415.6 L775.7,416.9 L770.7,417.7 L765.5,418.0 L760.3,417.7 L755.3,416.9 L750.5,415.6 L746.1,413.8 L742.2,411.6 L738.8,408.9 L736.1,406.0 L734.1,402.8 L732.9,399.4 L732.5,396.0Z"/><path d="M739.0,322.0 L739.4,317.6 L740.6,313.3 L742.6,309.3 L745.3,305.5 L748.7,302.2 L752.6,299.3 L757.0,297.1 L761.8,295.4 L766.8,294.3 L772.0,294.0 L777.2,294.3 L782.2,295.4 L787.0,297.1 L791.4,299.3 L795.3,302.2 L798.7,305.5 L801.4,309.3 L803.4,313.3 L804.6,317.6 L805.0,322.0 L798.5,394.0 L798.1,397.4 L796.9,400.8 L794.9,404.0 L792.2,406.9 L788.8,409.6 L784.9,411.8 L780.5,413.6 L775.7,414.9 L770.7,415.7 L765.5,416.0 L760.3,415.7 L755.3,414.9 L750.5,413.6 L746.1,411.8 L742.2,409.6 L738.8,406.9 L736.1,404.0 L734.1,400.8 L732.9,397.4 L732.5,394.0Z"/><path d="M739.0,320.0 L739.4,315.6 L740.6,311.3 L742.6,307.3 L745.3,303.5 L748.7,300.2 L752.6,297.3 L757.0,295.1 L761.8,293.4 L766.8,292.3 L772.0,292.0 L777.2,292.3 L782.2,293.4 L787.0,295.1 L791.4,297.3 L795.3,300.2 L798.7,303.5 L801.4,307.3 L803.4,311.3 L804.6,315.6 L805.0,320.0 L798.5,392.0 L798.1,395.4 L796.9,398.8 L794.9,402.0 L792.2,404.9 L788.8,407.6 L784.9,409.8 L780.5,411.6 L775.7,412.9 L770.7,413.7 L765.5,414.0 L760.3,413.7 L755.3,412.9 L750.5,411.6 L746.1,409.8 L742.2,407.6 L738.8,404.9 L736.1,402.0 L734.1,398.8 L732.9,395.4 L732.5,392.0Z"/><path d="M739.0,318.0 L739.4,313.6 L740.6,309.3 L742.6,305.3 L745.3,301.5 L748.7,298.2 L752.6,295.3 L757.0,293.1 L761.8,291.4 L766.8,290.3 L772.0,290.0 L777.2,290.3 L782.2,291.4 L787.0,293.1 L791.4,295.3 L795.3,298.2 L798.7,301.5 L801.4,305.3 L803.4,309.3 L804.6,313.6 L805.0,318.0 L798.5,390.0 L798.1,393.4 L796.9,396.8 L794.9,400.0 L792.2,402.9 L788.8,405.6 L784.9,407.8 L780.5,409.6 L775.7,410.9 L770.7,411.7 L765.5,412.0 L760.3,411.7 L755.3,410.9 L750.5,409.6 L746.1,407.8 L742.2,405.6 L738.8,402.9 L736.1,400.0 L734.1,396.8 L732.9,393.4 L732.5,390.0Z"/><path d="M739.0,316.0 L739.4,311.6 L740.6,307.3 L742.6,303.3 L745.3,299.5 L748.7,296.2 L752.6,293.3 L757.0,291.1 L761.8,289.4 L766.8,288.3 L772.0,288.0 L777.2,288.3 L782.2,289.4 L787.0,291.1 L791.4,293.3 L795.3,296.2 L798.7,299.5 L801.4,303.3 L803.4,307.3 L804.6,311.6 L805.0,316.0 L798.5,388.0 L798.1,391.4 L796.9,394.8 L794.9,398.0 L792.2,400.9 L788.8,403.6 L784.9,405.8 L780.5,407.6 L775.7,408.9 L770.7,409.7 L765.5,410.0 L760.3,409.7 L755.3,408.9 L750.5,407.6 L746.1,405.8 L742.2,403.6 L738.8,400.9 L736.1,398.0 L734.1,394.8 L732.9,391.4 L732.5,388.0Z"/><path d="M739.0,314.0 L739.4,309.6 L740.6,305.3 L742.6,301.3 L745.3,297.5 L748.7,294.2 L752.6,291.3 L757.0,289.1 L761.8,287.4 L766.8,286.3 L772.0,286.0 L777.2,286.3 L782.2,287.4 L787.0,289.1 L791.4,291.3 L795.3,294.2 L798.7,297.5 L801.4,301.3 L803.4,305.3 L804.6,309.6 L805.0,314.0 L798.5,386.0 L798.1,389.4 L796.9,392.8 L794.9,396.0 L792.2,398.9 L788.8,401.6 L784.9,403.8 L780.5,405.6 L775.7,406.9 L770.7,407.7 L765.5,408.0 L760.3,407.7 L755.3,406.9 L750.5,405.6 L746.1,403.8 L742.2,401.6 L738.8,398.9 L736.1,396.0 L734.1,392.8 L732.9,389.4 L732.5,386.0Z"/><path d="M739.0,312.0 L739.4,307.6 L740.6,303.3 L742.6,299.3 L745.3,295.5 L748.7,292.2 L752.6,289.3 L757.0,287.1 L761.8,285.4 L766.8,284.3 L772.0,284.0 L777.2,284.3 L782.2,285.4 L787.0,287.1 L791.4,289.3 L795.3,292.2 L798.7,295.5 L801.4,299.3 L803.4,303.3 L804.6,307.6 L805.0,312.0 L798.5,384.0 L798.1,387.4 L796.9,390.8 L794.9,394.0 L792.2,396.9 L788.8,399.6 L784.9,401.8 L780.5,403.6 L775.7,404.9 L770.7,405.7 L765.5,406.0 L760.3,405.7 L755.3,404.9 L750.5,403.6 L746.1,401.8 L742.2,399.6 L738.8,396.9 L736.1,394.0 L734.1,390.8 L732.9,387.4 L732.5,384.0Z"/><path d="M739.0,310.0 L739.4,305.6 L740.6,301.3 L742.6,297.3 L745.3,293.5 L748.7,290.2 L752.6,287.3 L757.0,285.1 L761.8,283.4 L766.8,282.3 L772.0,282.0 L777.2,282.3 L782.2,283.4 L787.0,285.1 L791.4,287.3 L795.3,290.2 L798.7,293.5 L801.4,297.3 L803.4,301.3 L804.6,305.6 L805.0,310.0 L798.5,382.0 L798.1,385.4 L796.9,388.8 L794.9,392.0 L792.2,394.9 L788.8,397.6 L784.9,399.8 L780.5,401.6 L775.7,402.9 L770.7,403.7 L765.5,404.0 L760.3,403.7 L755.3,402.9 L750.5,401.6 L746.1,399.8 L742.2,397.6 L738.8,394.9 L736.1,392.0 L734.1,388.8 L732.9,385.4 L732.5,382.0Z"/><path d="M739.0,308.0 L739.4,303.6 L740.6,299.3 L742.6,295.3 L745.3,291.5 L748.7,288.2 L752.6,285.3 L757.0,283.1 L761.8,281.4 L766.8,280.3 L772.0,280.0 L777.2,280.3 L782.2,281.4 L787.0,283.1 L791.4,285.3 L795.3,288.2 L798.7,291.5 L801.4,295.3 L803.4,299.3 L804.6,303.6 L805.0,308.0 L798.5,380.0 L798.1,383.4 L796.9,386.8 L794.9,390.0 L792.2,392.9 L788.8,395.6 L784.9,397.8 L780.5,399.6 L775.7,400.9 L770.7,401.7 L765.5,402.0 L760.3,401.7 L755.3,400.9 L750.5,399.6 L746.1,397.8 L742.2,395.6 L738.8,392.9 L736.1,390.0 L734.1,386.8 L732.9,383.4 L732.5,380.0Z"/><path d="M739.0,306.0 L739.4,301.6 L740.6,297.3 L742.6,293.3 L745.3,289.5 L748.7,286.2 L752.6,283.3 L757.0,281.1 L761.8,279.4 L766.8,278.3 L772.0,278.0 L777.2,278.3 L782.2,279.4 L787.0,281.1 L791.4,283.3 L795.3,286.2 L798.7,289.5 L801.4,293.3 L803.4,297.3 L804.6,301.6 L805.0,306.0 L798.5,378.0 L798.1,381.4 L796.9,384.8 L794.9,388.0 L792.2,390.9 L788.8,393.6 L784.9,395.8 L780.5,397.6 L775.7,398.9 L770.7,399.7 L765.5,400.0 L760.3,399.7 L755.3,398.9 L750.5,397.6 L746.1,395.8 L742.2,393.6 L738.8,390.9 L736.1,388.0 L734.1,384.8 L732.9,381.4 L732.5,378.0Z"/><path d="M739.0,304.0 L739.4,299.6 L740.6,295.3 L742.6,291.3 L745.3,287.5 L748.7,284.2 L752.6,281.3 L757.0,279.1 L761.8,277.4 L766.8,276.3 L772.0,276.0 L777.2,276.3 L782.2,277.4 L787.0,279.1 L791.4,281.3 L795.3,284.2 L798.7,287.5 L801.4,291.3 L803.4,295.3 L804.6,299.6 L805.0,304.0 L798.5,376.0 L798.1,379.4 L796.9,382.8 L794.9,386.0 L792.2,388.9 L788.8,391.6 L784.9,393.8 L780.5,395.6 L775.7,396.9 L770.7,397.7 L765.5,398.0 L760.3,397.7 L755.3,396.9 L750.5,395.6 L746.1,393.8 L742.2,391.6 L738.8,388.9 L736.1,386.0 L734.1,382.8 L732.9,379.4 L732.5,376.0Z"/><path d="M739.0,302.0 L739.4,297.6 L740.6,293.3 L742.6,289.3 L745.3,285.5 L748.7,282.2 L752.6,279.3 L757.0,277.1 L761.8,275.4 L766.8,274.3 L772.0,274.0 L777.2,274.3 L782.2,275.4 L787.0,277.1 L791.4,279.3 L795.3,282.2 L798.7,285.5 L801.4,289.3 L803.4,293.3 L804.6,297.6 L805.0,302.0 L798.5,374.0 L798.1,377.4 L796.9,380.8 L794.9,384.0 L792.2,386.9 L788.8,389.6 L784.9,391.8 L780.5,393.6 L775.7,394.9 L770.7,395.7 L765.5,396.0 L760.3,395.7 L755.3,394.9 L750.5,393.6 L746.1,391.8 L742.2,389.6 L738.8,386.9 L736.1,384.0 L734.1,380.8 L732.9,377.4 L732.5,374.0Z"/><path d="M739.0,300.0 L739.4,295.6 L740.6,291.3 L742.6,287.3 L745.3,283.5 L748.7,280.2 L752.6,277.3 L757.0,275.1 L761.8,273.4 L766.8,272.3 L772.0,272.0 L777.2,272.3 L782.2,273.4 L787.0,275.1 L791.4,277.3 L795.3,280.2 L798.7,283.5 L801.4,287.3 L803.4,291.3 L804.6,295.6 L805.0,300.0 L798.5,372.0 L798.1,375.4 L796.9,378.8 L794.9,382.0 L792.2,384.9 L788.8,387.6 L784.9,389.8 L780.5,391.6 L775.7,392.9 L770.7,393.7 L765.5,394.0 L760.3,393.7 L755.3,392.9 L750.5,391.6 L746.1,389.8 L742.2,387.6 L738.8,384.9 L736.1,382.0 L734.1,378.8 L732.9,375.4 L732.5,372.0Z"/><path d="M739.0,298.0 L739.4,293.6 L740.6,289.3 L742.6,285.3 L745.3,281.5 L748.7,278.2 L752.6,275.3 L757.0,273.1 L761.8,271.4 L766.8,270.3 L772.0,270.0 L777.2,270.3 L782.2,271.4 L787.0,273.1 L791.4,275.3 L795.3,278.2 L798.7,281.5 L801.4,285.3 L803.4,289.3 L804.6,293.6 L805.0,298.0 L798.5,370.0 L798.1,373.4 L796.9,376.8 L794.9,380.0 L792.2,382.9 L788.8,385.6 L784.9,387.8 L780.5,389.6 L775.7,390.9 L770.7,391.7 L765.5,392.0 L760.3,391.7 L755.3,390.9 L750.5,389.6 L746.1,387.8 L742.2,385.6 L738.8,382.9 L736.1,380.0 L734.1,376.8 L732.9,373.4 L732.5,370.0Z"/><path d="M739.0,296.0 L739.4,291.6 L740.6,287.3 L742.6,283.3 L745.3,279.5 L748.7,276.2 L752.6,273.3 L757.0,271.1 L761.8,269.4 L766.8,268.3 L772.0,268.0 L777.2,268.3 L782.2,269.4 L787.0,271.1 L791.4,273.3 L795.3,276.2 L798.7,279.5 L801.4,283.3 L803.4,287.3 L804.6,291.6 L805.0,296.0 L798.5,368.0 L798.1,371.4 L796.9,374.8 L794.9,378.0 L792.2,380.9 L788.8,383.6 L784.9,385.8 L780.5,387.6 L775.7,388.9 L770.7,389.7 L765.5,390.0 L760.3,389.7 L755.3,388.9 L750.5,387.6 L746.1,385.8 L742.2,383.6 L738.8,380.9 L736.1,378.0 L734.1,374.8 L732.9,371.4 L732.5,368.0Z"/><path d="M739.0,294.0 L739.4,289.6 L740.6,285.3 L742.6,281.3 L745.3,277.5 L748.7,274.2 L752.6,271.3 L757.0,269.1 L761.8,267.4 L766.8,266.3 L772.0,266.0 L777.2,266.3 L782.2,267.4 L787.0,269.1 L791.4,271.3 L795.3,274.2 L798.7,277.5 L801.4,281.3 L803.4,285.3 L804.6,289.6 L805.0,294.0 L798.5,366.0 L798.1,369.4 L796.9,372.8 L794.9,376.0 L792.2,378.9 L788.8,381.6 L784.9,383.8 L780.5,385.6 L775.7,386.9 L770.7,387.7 L765.5,388.0 L760.3,387.7 L755.3,386.9 L750.5,385.6 L746.1,383.8 L742.2,381.6 L738.8,378.9 L736.1,376.0 L734.1,372.8 L732.9,369.4 L732.5,366.0Z"/><path d="M739.0,292.0 L739.4,287.6 L740.6,283.3 L742.6,279.3 L745.3,275.5 L748.7,272.2 L752.6,269.3 L757.0,267.1 L761.8,265.4 L766.8,264.3 L772.0,264.0 L777.2,264.3 L782.2,265.4 L787.0,267.1 L791.4,269.3 L795.3,272.2 L798.7,275.5 L801.4,279.3 L803.4,283.3 L804.6,287.6 L805.0,292.0 L798.5,364.0 L798.1,367.4 L796.9,370.8 L794.9,374.0 L792.2,376.9 L788.8,379.6 L784.9,381.8 L780.5,383.6 L775.7,384.9 L770.7,385.7 L765.5,386.0 L760.3,385.7 L755.3,384.9 L750.5,383.6 L746.1,381.8 L742.2,379.6 L738.8,376.9 L736.1,374.0 L734.1,370.8 L732.9,367.4 L732.5,364.0Z"/><path d="M739.0,290.0 L739.4,285.6 L740.6,281.3 L742.6,277.3 L745.3,273.5 L748.7,270.2 L752.6,267.3 L757.0,265.1 L761.8,263.4 L766.8,262.3 L772.0,262.0 L777.2,262.3 L782.2,263.4 L787.0,265.1 L791.4,267.3 L795.3,270.2 L798.7,273.5 L801.4,277.3 L803.4,281.3 L804.6,285.6 L805.0,290.0 L798.5,362.0 L798.1,365.4 L796.9,368.8 L794.9,372.0 L792.2,374.9 L788.8,377.6 L784.9,379.8 L780.5,381.6 L775.7,382.9 L770.7,383.7 L765.5,384.0 L760.3,383.7 L755.3,382.9 L750.5,381.6 L746.1,379.8 L742.2,377.6 L738.8,374.9 L736.1,372.0 L734.1,368.8 L732.9,365.4 L732.5,362.0Z"/><path d="M739.0,288.0 L739.4,283.6 L740.6,279.3 L742.6,275.3 L745.3,271.5 L748.7,268.2 L752.6,265.3 L757.0,263.1 L761.8,261.4 L766.8,260.3 L772.0,260.0 L777.2,260.3 L782.2,261.4 L787.0,263.1 L791.4,265.3 L795.3,268.2 L798.7,271.5 L801.4,275.3 L803.4,279.3 L804.6,283.6 L805.0,288.0 L798.5,360.0 L798.1,363.4 L796.9,366.8 L794.9,370.0 L792.2,372.9 L788.8,375.6 L784.9,377.8 L780.5,379.6 L775.7,380.9 L770.7,381.7 L765.5,382.0 L760.3,381.7 L755.3,380.9 L750.5,379.6 L746.1,377.8 L742.2,375.6 L738.8,372.9 L736.1,370.0 L734.1,366.8 L732.9,363.4 L732.5,360.0Z"/></g>
<g fill="url(#gor)" stroke="none"><path d="M739.0,340.0 L739.4,335.6 L740.6,331.3 L742.6,327.3 L745.3,323.5 L748.7,320.2 L752.6,317.3 L757.0,315.1 L761.8,313.4 L766.8,312.3 L772.0,312.0 L777.2,312.3 L782.2,313.4 L787.0,315.1 L791.4,317.3 L795.3,320.2 L798.7,323.5 L801.4,327.3 L803.4,331.3 L804.6,335.6 L805.0,340.0 L798.5,412.0 L798.1,415.4 L796.9,418.8 L794.9,422.0 L792.2,424.9 L788.8,427.6 L784.9,429.8 L780.5,431.6 L775.7,432.9 L770.7,433.7 L765.5,434.0 L760.3,433.7 L755.3,432.9 L750.5,431.6 L746.1,429.8 L742.2,427.6 L738.8,424.9 L736.1,422.0 L734.1,418.8 L732.9,415.4 L732.5,412.0Z"/><path d="M739.0,339.0 L739.4,334.6 L740.6,330.3 L742.6,326.3 L745.3,322.5 L748.7,319.2 L752.6,316.3 L757.0,314.1 L761.8,312.4 L766.8,311.3 L772.0,311.0 L777.2,311.3 L782.2,312.4 L787.0,314.1 L791.4,316.3 L795.3,319.2 L798.7,322.5 L801.4,326.3 L803.4,330.3 L804.6,334.6 L805.0,339.0 L798.5,411.0 L798.1,414.4 L796.9,417.8 L794.9,421.0 L792.2,423.9 L788.8,426.6 L784.9,428.8 L780.5,430.6 L775.7,431.9 L770.7,432.7 L765.5,433.0 L760.3,432.7 L755.3,431.9 L750.5,430.6 L746.1,428.8 L742.2,426.6 L738.8,423.9 L736.1,421.0 L734.1,417.8 L732.9,414.4 L732.5,411.0Z"/><path d="M739.0,338.0 L739.4,333.6 L740.6,329.3 L742.6,325.3 L745.3,321.5 L748.7,318.2 L752.6,315.3 L757.0,313.1 L761.8,311.4 L766.8,310.3 L772.0,310.0 L777.2,310.3 L782.2,311.4 L787.0,313.1 L791.4,315.3 L795.3,318.2 L798.7,321.5 L801.4,325.3 L803.4,329.3 L804.6,333.6 L805.0,338.0 L798.5,410.0 L798.1,413.4 L796.9,416.8 L794.9,420.0 L792.2,422.9 L788.8,425.6 L784.9,427.8 L780.5,429.6 L775.7,430.9 L770.7,431.7 L765.5,432.0 L760.3,431.7 L755.3,430.9 L750.5,429.6 L746.1,427.8 L742.2,425.6 L738.8,422.9 L736.1,420.0 L734.1,416.8 L732.9,413.4 L732.5,410.0Z"/><path d="M739.0,337.0 L739.4,332.6 L740.6,328.3 L742.6,324.3 L745.3,320.5 L748.7,317.2 L752.6,314.3 L757.0,312.1 L761.8,310.4 L766.8,309.3 L772.0,309.0 L777.2,309.3 L782.2,310.4 L787.0,312.1 L791.4,314.3 L795.3,317.2 L798.7,320.5 L801.4,324.3 L803.4,328.3 L804.6,332.6 L805.0,337.0 L798.5,409.0 L798.1,412.4 L796.9,415.8 L794.9,419.0 L792.2,421.9 L788.8,424.6 L784.9,426.8 L780.5,428.6 L775.7,429.9 L770.7,430.7 L765.5,431.0 L760.3,430.7 L755.3,429.9 L750.5,428.6 L746.1,426.8 L742.2,424.6 L738.8,421.9 L736.1,419.0 L734.1,415.8 L732.9,412.4 L732.5,409.0Z"/><path d="M739.0,336.0 L739.4,331.6 L740.6,327.3 L742.6,323.3 L745.3,319.5 L748.7,316.2 L752.6,313.3 L757.0,311.1 L761.8,309.4 L766.8,308.3 L772.0,308.0 L777.2,308.3 L782.2,309.4 L787.0,311.1 L791.4,313.3 L795.3,316.2 L798.7,319.5 L801.4,323.3 L803.4,327.3 L804.6,331.6 L805.0,336.0 L798.5,408.0 L798.1,411.4 L796.9,414.8 L794.9,418.0 L792.2,420.9 L788.8,423.6 L784.9,425.8 L780.5,427.6 L775.7,428.9 L770.7,429.7 L765.5,430.0 L760.3,429.7 L755.3,428.9 L750.5,427.6 L746.1,425.8 L742.2,423.6 L738.8,420.9 L736.1,418.0 L734.1,414.8 L732.9,411.4 L732.5,408.0Z"/><path d="M739.0,335.0 L739.4,330.6 L740.6,326.3 L742.6,322.3 L745.3,318.5 L748.7,315.2 L752.6,312.3 L757.0,310.1 L761.8,308.4 L766.8,307.3 L772.0,307.0 L777.2,307.3 L782.2,308.4 L787.0,310.1 L791.4,312.3 L795.3,315.2 L798.7,318.5 L801.4,322.3 L803.4,326.3 L804.6,330.6 L805.0,335.0 L798.5,407.0 L798.1,410.4 L796.9,413.8 L794.9,417.0 L792.2,419.9 L788.8,422.6 L784.9,424.8 L780.5,426.6 L775.7,427.9 L770.7,428.7 L765.5,429.0 L760.3,428.7 L755.3,427.9 L750.5,426.6 L746.1,424.8 L742.2,422.6 L738.8,419.9 L736.1,417.0 L734.1,413.8 L732.9,410.4 L732.5,407.0Z"/><path d="M739.0,334.0 L739.4,329.6 L740.6,325.3 L742.6,321.3 L745.3,317.5 L748.7,314.2 L752.6,311.3 L757.0,309.1 L761.8,307.4 L766.8,306.3 L772.0,306.0 L777.2,306.3 L782.2,307.4 L787.0,309.1 L791.4,311.3 L795.3,314.2 L798.7,317.5 L801.4,321.3 L803.4,325.3 L804.6,329.6 L805.0,334.0 L798.5,406.0 L798.1,409.4 L796.9,412.8 L794.9,416.0 L792.2,418.9 L788.8,421.6 L784.9,423.8 L780.5,425.6 L775.7,426.9 L770.7,427.7 L765.5,428.0 L760.3,427.7 L755.3,426.9 L750.5,425.6 L746.1,423.8 L742.2,421.6 L738.8,418.9 L736.1,416.0 L734.1,412.8 L732.9,409.4 L732.5,406.0Z"/><path d="M739.0,333.0 L739.4,328.6 L740.6,324.3 L742.6,320.3 L745.3,316.5 L748.7,313.2 L752.6,310.3 L757.0,308.1 L761.8,306.4 L766.8,305.3 L772.0,305.0 L777.2,305.3 L782.2,306.4 L787.0,308.1 L791.4,310.3 L795.3,313.2 L798.7,316.5 L801.4,320.3 L803.4,324.3 L804.6,328.6 L805.0,333.0 L798.5,405.0 L798.1,408.4 L796.9,411.8 L794.9,415.0 L792.2,417.9 L788.8,420.6 L784.9,422.8 L780.5,424.6 L775.7,425.9 L770.7,426.7 L765.5,427.0 L760.3,426.7 L755.3,425.9 L750.5,424.6 L746.1,422.8 L742.2,420.6 L738.8,417.9 L736.1,415.0 L734.1,411.8 L732.9,408.4 L732.5,405.0Z"/><path d="M739.0,332.0 L739.4,327.6 L740.6,323.3 L742.6,319.3 L745.3,315.5 L748.7,312.2 L752.6,309.3 L757.0,307.1 L761.8,305.4 L766.8,304.3 L772.0,304.0 L777.2,304.3 L782.2,305.4 L787.0,307.1 L791.4,309.3 L795.3,312.2 L798.7,315.5 L801.4,319.3 L803.4,323.3 L804.6,327.6 L805.0,332.0 L798.5,404.0 L798.1,407.4 L796.9,410.8 L794.9,414.0 L792.2,416.9 L788.8,419.6 L784.9,421.8 L780.5,423.6 L775.7,424.9 L770.7,425.7 L765.5,426.0 L760.3,425.7 L755.3,424.9 L750.5,423.6 L746.1,421.8 L742.2,419.6 L738.8,416.9 L736.1,414.0 L734.1,410.8 L732.9,407.4 L732.5,404.0Z"/><path d="M739.0,331.0 L739.4,326.6 L740.6,322.3 L742.6,318.3 L745.3,314.5 L748.7,311.2 L752.6,308.3 L757.0,306.1 L761.8,304.4 L766.8,303.3 L772.0,303.0 L777.2,303.3 L782.2,304.4 L787.0,306.1 L791.4,308.3 L795.3,311.2 L798.7,314.5 L801.4,318.3 L803.4,322.3 L804.6,326.6 L805.0,331.0 L798.5,403.0 L798.1,406.4 L796.9,409.8 L794.9,413.0 L792.2,415.9 L788.8,418.6 L784.9,420.8 L780.5,422.6 L775.7,423.9 L770.7,424.7 L765.5,425.0 L760.3,424.7 L755.3,423.9 L750.5,422.6 L746.1,420.8 L742.2,418.6 L738.8,415.9 L736.1,413.0 L734.1,409.8 L732.9,406.4 L732.5,403.0Z"/><path d="M739.0,330.0 L739.4,325.6 L740.6,321.3 L742.6,317.3 L745.3,313.5 L748.7,310.2 L752.6,307.3 L757.0,305.1 L761.8,303.4 L766.8,302.3 L772.0,302.0 L777.2,302.3 L782.2,303.4 L787.0,305.1 L791.4,307.3 L795.3,310.2 L798.7,313.5 L801.4,317.3 L803.4,321.3 L804.6,325.6 L805.0,330.0 L798.5,402.0 L798.1,405.4 L796.9,408.8 L794.9,412.0 L792.2,414.9 L788.8,417.6 L784.9,419.8 L780.5,421.6 L775.7,422.9 L770.7,423.7 L765.5,424.0 L760.3,423.7 L755.3,422.9 L750.5,421.6 L746.1,419.8 L742.2,417.6 L738.8,414.9 L736.1,412.0 L734.1,408.8 L732.9,405.4 L732.5,402.0Z"/><path d="M739.0,329.0 L739.4,324.6 L740.6,320.3 L742.6,316.3 L745.3,312.5 L748.7,309.2 L752.6,306.3 L757.0,304.1 L761.8,302.4 L766.8,301.3 L772.0,301.0 L777.2,301.3 L782.2,302.4 L787.0,304.1 L791.4,306.3 L795.3,309.2 L798.7,312.5 L801.4,316.3 L803.4,320.3 L804.6,324.6 L805.0,329.0 L798.5,401.0 L798.1,404.4 L796.9,407.8 L794.9,411.0 L792.2,413.9 L788.8,416.6 L784.9,418.8 L780.5,420.6 L775.7,421.9 L770.7,422.7 L765.5,423.0 L760.3,422.7 L755.3,421.9 L750.5,420.6 L746.1,418.8 L742.2,416.6 L738.8,413.9 L736.1,411.0 L734.1,407.8 L732.9,404.4 L732.5,401.0Z"/><path d="M739.0,328.0 L739.4,323.6 L740.6,319.3 L742.6,315.3 L745.3,311.5 L748.7,308.2 L752.6,305.3 L757.0,303.1 L761.8,301.4 L766.8,300.3 L772.0,300.0 L777.2,300.3 L782.2,301.4 L787.0,303.1 L791.4,305.3 L795.3,308.2 L798.7,311.5 L801.4,315.3 L803.4,319.3 L804.6,323.6 L805.0,328.0 L798.5,400.0 L798.1,403.4 L796.9,406.8 L794.9,410.0 L792.2,412.9 L788.8,415.6 L784.9,417.8 L780.5,419.6 L775.7,420.9 L770.7,421.7 L765.5,422.0 L760.3,421.7 L755.3,420.9 L750.5,419.6 L746.1,417.8 L742.2,415.6 L738.8,412.9 L736.1,410.0 L734.1,406.8 L732.9,403.4 L732.5,400.0Z"/><path d="M739.0,327.0 L739.4,322.6 L740.6,318.3 L742.6,314.3 L745.3,310.5 L748.7,307.2 L752.6,304.3 L757.0,302.1 L761.8,300.4 L766.8,299.3 L772.0,299.0 L777.2,299.3 L782.2,300.4 L787.0,302.1 L791.4,304.3 L795.3,307.2 L798.7,310.5 L801.4,314.3 L803.4,318.3 L804.6,322.6 L805.0,327.0 L798.5,399.0 L798.1,402.4 L796.9,405.8 L794.9,409.0 L792.2,411.9 L788.8,414.6 L784.9,416.8 L780.5,418.6 L775.7,419.9 L770.7,420.7 L765.5,421.0 L760.3,420.7 L755.3,419.9 L750.5,418.6 L746.1,416.8 L742.2,414.6 L738.8,411.9 L736.1,409.0 L734.1,405.8 L732.9,402.4 L732.5,399.0Z"/><path d="M739.0,326.0 L739.4,321.6 L740.6,317.3 L742.6,313.3 L745.3,309.5 L748.7,306.2 L752.6,303.3 L757.0,301.1 L761.8,299.4 L766.8,298.3 L772.0,298.0 L777.2,298.3 L782.2,299.4 L787.0,301.1 L791.4,303.3 L795.3,306.2 L798.7,309.5 L801.4,313.3 L803.4,317.3 L804.6,321.6 L805.0,326.0 L798.5,398.0 L798.1,401.4 L796.9,404.8 L794.9,408.0 L792.2,410.9 L788.8,413.6 L784.9,415.8 L780.5,417.6 L775.7,418.9 L770.7,419.7 L765.5,420.0 L760.3,419.7 L755.3,418.9 L750.5,417.6 L746.1,415.8 L742.2,413.6 L738.8,410.9 L736.1,408.0 L734.1,404.8 L732.9,401.4 L732.5,398.0Z"/><path d="M739.0,325.0 L739.4,320.6 L740.6,316.3 L742.6,312.3 L745.3,308.5 L748.7,305.2 L752.6,302.3 L757.0,300.1 L761.8,298.4 L766.8,297.3 L772.0,297.0 L777.2,297.3 L782.2,298.4 L787.0,300.1 L791.4,302.3 L795.3,305.2 L798.7,308.5 L801.4,312.3 L803.4,316.3 L804.6,320.6 L805.0,325.0 L798.5,397.0 L798.1,400.4 L796.9,403.8 L794.9,407.0 L792.2,409.9 L788.8,412.6 L784.9,414.8 L780.5,416.6 L775.7,417.9 L770.7,418.7 L765.5,419.0 L760.3,418.7 L755.3,417.9 L750.5,416.6 L746.1,414.8 L742.2,412.6 L738.8,409.9 L736.1,407.0 L734.1,403.8 L732.9,400.4 L732.5,397.0Z"/><path d="M739.0,324.0 L739.4,319.6 L740.6,315.3 L742.6,311.3 L745.3,307.5 L748.7,304.2 L752.6,301.3 L757.0,299.1 L761.8,297.4 L766.8,296.3 L772.0,296.0 L777.2,296.3 L782.2,297.4 L787.0,299.1 L791.4,301.3 L795.3,304.2 L798.7,307.5 L801.4,311.3 L803.4,315.3 L804.6,319.6 L805.0,324.0 L798.5,396.0 L798.1,399.4 L796.9,402.8 L794.9,406.0 L792.2,408.9 L788.8,411.6 L784.9,413.8 L780.5,415.6 L775.7,416.9 L770.7,417.7 L765.5,418.0 L760.3,417.7 L755.3,416.9 L750.5,415.6 L746.1,413.8 L742.2,411.6 L738.8,408.9 L736.1,406.0 L734.1,402.8 L732.9,399.4 L732.5,396.0Z"/><path d="M739.0,323.0 L739.4,318.6 L740.6,314.3 L742.6,310.3 L745.3,306.5 L748.7,303.2 L752.6,300.3 L757.0,298.1 L761.8,296.4 L766.8,295.3 L772.0,295.0 L777.2,295.3 L782.2,296.4 L787.0,298.1 L791.4,300.3 L795.3,303.2 L798.7,306.5 L801.4,310.3 L803.4,314.3 L804.6,318.6 L805.0,323.0 L798.5,395.0 L798.1,398.4 L796.9,401.8 L794.9,405.0 L792.2,407.9 L788.8,410.6 L784.9,412.8 L780.5,414.6 L775.7,415.9 L770.7,416.7 L765.5,417.0 L760.3,416.7 L755.3,415.9 L750.5,414.6 L746.1,412.8 L742.2,410.6 L738.8,407.9 L736.1,405.0 L734.1,401.8 L732.9,398.4 L732.5,395.0Z"/><path d="M739.0,322.0 L739.4,317.6 L740.6,313.3 L742.6,309.3 L745.3,305.5 L748.7,302.2 L752.6,299.3 L757.0,297.1 L761.8,295.4 L766.8,294.3 L772.0,294.0 L777.2,294.3 L782.2,295.4 L787.0,297.1 L791.4,299.3 L795.3,302.2 L798.7,305.5 L801.4,309.3 L803.4,313.3 L804.6,317.6 L805.0,322.0 L798.5,394.0 L798.1,397.4 L796.9,400.8 L794.9,404.0 L792.2,406.9 L788.8,409.6 L784.9,411.8 L780.5,413.6 L775.7,414.9 L770.7,415.7 L765.5,416.0 L760.3,415.7 L755.3,414.9 L750.5,413.6 L746.1,411.8 L742.2,409.6 L738.8,406.9 L736.1,404.0 L734.1,400.8 L732.9,397.4 L732.5,394.0Z"/><path d="M739.0,321.0 L739.4,316.6 L740.6,312.3 L742.6,308.3 L745.3,304.5 L748.7,301.2 L752.6,298.3 L757.0,296.1 L761.8,294.4 L766.8,293.3 L772.0,293.0 L777.2,293.3 L782.2,294.4 L787.0,296.1 L791.4,298.3 L795.3,301.2 L798.7,304.5 L801.4,308.3 L803.4,312.3 L804.6,316.6 L805.0,321.0 L798.5,393.0 L798.1,396.4 L796.9,399.8 L794.9,403.0 L792.2,405.9 L788.8,408.6 L784.9,410.8 L780.5,412.6 L775.7,413.9 L770.7,414.7 L765.5,415.0 L760.3,414.7 L755.3,413.9 L750.5,412.6 L746.1,410.8 L742.2,408.6 L738.8,405.9 L736.1,403.0 L734.1,399.8 L732.9,396.4 L732.5,393.0Z"/><path d="M739.0,320.0 L739.4,315.6 L740.6,311.3 L742.6,307.3 L745.3,303.5 L748.7,300.2 L752.6,297.3 L757.0,295.1 L761.8,293.4 L766.8,292.3 L772.0,292.0 L777.2,292.3 L782.2,293.4 L787.0,295.1 L791.4,297.3 L795.3,300.2 L798.7,303.5 L801.4,307.3 L803.4,311.3 L804.6,315.6 L805.0,320.0 L798.5,392.0 L798.1,395.4 L796.9,398.8 L794.9,402.0 L792.2,404.9 L788.8,407.6 L784.9,409.8 L780.5,411.6 L775.7,412.9 L770.7,413.7 L765.5,414.0 L760.3,413.7 L755.3,412.9 L750.5,411.6 L746.1,409.8 L742.2,407.6 L738.8,404.9 L736.1,402.0 L734.1,398.8 L732.9,395.4 L732.5,392.0Z"/><path d="M739.0,319.0 L739.4,314.6 L740.6,310.3 L742.6,306.3 L745.3,302.5 L748.7,299.2 L752.6,296.3 L757.0,294.1 L761.8,292.4 L766.8,291.3 L772.0,291.0 L777.2,291.3 L782.2,292.4 L787.0,294.1 L791.4,296.3 L795.3,299.2 L798.7,302.5 L801.4,306.3 L803.4,310.3 L804.6,314.6 L805.0,319.0 L798.5,391.0 L798.1,394.4 L796.9,397.8 L794.9,401.0 L792.2,403.9 L788.8,406.6 L784.9,408.8 L780.5,410.6 L775.7,411.9 L770.7,412.7 L765.5,413.0 L760.3,412.7 L755.3,411.9 L750.5,410.6 L746.1,408.8 L742.2,406.6 L738.8,403.9 L736.1,401.0 L734.1,397.8 L732.9,394.4 L732.5,391.0Z"/><path d="M739.0,318.0 L739.4,313.6 L740.6,309.3 L742.6,305.3 L745.3,301.5 L748.7,298.2 L752.6,295.3 L757.0,293.1 L761.8,291.4 L766.8,290.3 L772.0,290.0 L777.2,290.3 L782.2,291.4 L787.0,293.1 L791.4,295.3 L795.3,298.2 L798.7,301.5 L801.4,305.3 L803.4,309.3 L804.6,313.6 L805.0,318.0 L798.5,390.0 L798.1,393.4 L796.9,396.8 L794.9,400.0 L792.2,402.9 L788.8,405.6 L784.9,407.8 L780.5,409.6 L775.7,410.9 L770.7,411.7 L765.5,412.0 L760.3,411.7 L755.3,410.9 L750.5,409.6 L746.1,407.8 L742.2,405.6 L738.8,402.9 L736.1,400.0 L734.1,396.8 L732.9,393.4 L732.5,390.0Z"/><path d="M739.0,317.0 L739.4,312.6 L740.6,308.3 L742.6,304.3 L745.3,300.5 L748.7,297.2 L752.6,294.3 L757.0,292.1 L761.8,290.4 L766.8,289.3 L772.0,289.0 L777.2,289.3 L782.2,290.4 L787.0,292.1 L791.4,294.3 L795.3,297.2 L798.7,300.5 L801.4,304.3 L803.4,308.3 L804.6,312.6 L805.0,317.0 L798.5,389.0 L798.1,392.4 L796.9,395.8 L794.9,399.0 L792.2,401.9 L788.8,404.6 L784.9,406.8 L780.5,408.6 L775.7,409.9 L770.7,410.7 L765.5,411.0 L760.3,410.7 L755.3,409.9 L750.5,408.6 L746.1,406.8 L742.2,404.6 L738.8,401.9 L736.1,399.0 L734.1,395.8 L732.9,392.4 L732.5,389.0Z"/><path d="M739.0,316.0 L739.4,311.6 L740.6,307.3 L742.6,303.3 L745.3,299.5 L748.7,296.2 L752.6,293.3 L757.0,291.1 L761.8,289.4 L766.8,288.3 L772.0,288.0 L777.2,288.3 L782.2,289.4 L787.0,291.1 L791.4,293.3 L795.3,296.2 L798.7,299.5 L801.4,303.3 L803.4,307.3 L804.6,311.6 L805.0,316.0 L798.5,388.0 L798.1,391.4 L796.9,394.8 L794.9,398.0 L792.2,400.9 L788.8,403.6 L784.9,405.8 L780.5,407.6 L775.7,408.9 L770.7,409.7 L765.5,410.0 L760.3,409.7 L755.3,408.9 L750.5,407.6 L746.1,405.8 L742.2,403.6 L738.8,400.9 L736.1,398.0 L734.1,394.8 L732.9,391.4 L732.5,388.0Z"/><path d="M739.0,315.0 L739.4,310.6 L740.6,306.3 L742.6,302.3 L745.3,298.5 L748.7,295.2 L752.6,292.3 L757.0,290.1 L761.8,288.4 L766.8,287.3 L772.0,287.0 L777.2,287.3 L782.2,288.4 L787.0,290.1 L791.4,292.3 L795.3,295.2 L798.7,298.5 L801.4,302.3 L803.4,306.3 L804.6,310.6 L805.0,315.0 L798.5,387.0 L798.1,390.4 L796.9,393.8 L794.9,397.0 L792.2,399.9 L788.8,402.6 L784.9,404.8 L780.5,406.6 L775.7,407.9 L770.7,408.7 L765.5,409.0 L760.3,408.7 L755.3,407.9 L750.5,406.6 L746.1,404.8 L742.2,402.6 L738.8,399.9 L736.1,397.0 L734.1,393.8 L732.9,390.4 L732.5,387.0Z"/><path d="M739.0,314.0 L739.4,309.6 L740.6,305.3 L742.6,301.3 L745.3,297.5 L748.7,294.2 L752.6,291.3 L757.0,289.1 L761.8,287.4 L766.8,286.3 L772.0,286.0 L777.2,286.3 L782.2,287.4 L787.0,289.1 L791.4,291.3 L795.3,294.2 L798.7,297.5 L801.4,301.3 L803.4,305.3 L804.6,309.6 L805.0,314.0 L798.5,386.0 L798.1,389.4 L796.9,392.8 L794.9,396.0 L792.2,398.9 L788.8,401.6 L784.9,403.8 L780.5,405.6 L775.7,406.9 L770.7,407.7 L765.5,408.0 L760.3,407.7 L755.3,406.9 L750.5,405.6 L746.1,403.8 L742.2,401.6 L738.8,398.9 L736.1,396.0 L734.1,392.8 L732.9,389.4 L732.5,386.0Z"/><path d="M739.0,313.0 L739.4,308.6 L740.6,304.3 L742.6,300.3 L745.3,296.5 L748.7,293.2 L752.6,290.3 L757.0,288.1 L761.8,286.4 L766.8,285.3 L772.0,285.0 L777.2,285.3 L782.2,286.4 L787.0,288.1 L791.4,290.3 L795.3,293.2 L798.7,296.5 L801.4,300.3 L803.4,304.3 L804.6,308.6 L805.0,313.0 L798.5,385.0 L798.1,388.4 L796.9,391.8 L794.9,395.0 L792.2,397.9 L788.8,400.6 L784.9,402.8 L780.5,404.6 L775.7,405.9 L770.7,406.7 L765.5,407.0 L760.3,406.7 L755.3,405.9 L750.5,404.6 L746.1,402.8 L742.2,400.6 L738.8,397.9 L736.1,395.0 L734.1,391.8 L732.9,388.4 L732.5,385.0Z"/><path d="M739.0,312.0 L739.4,307.6 L740.6,303.3 L742.6,299.3 L745.3,295.5 L748.7,292.2 L752.6,289.3 L757.0,287.1 L761.8,285.4 L766.8,284.3 L772.0,284.0 L777.2,284.3 L782.2,285.4 L787.0,287.1 L791.4,289.3 L795.3,292.2 L798.7,295.5 L801.4,299.3 L803.4,303.3 L804.6,307.6 L805.0,312.0 L798.5,384.0 L798.1,387.4 L796.9,390.8 L794.9,394.0 L792.2,396.9 L788.8,399.6 L784.9,401.8 L780.5,403.6 L775.7,404.9 L770.7,405.7 L765.5,406.0 L760.3,405.7 L755.3,404.9 L750.5,403.6 L746.1,401.8 L742.2,399.6 L738.8,396.9 L736.1,394.0 L734.1,390.8 L732.9,387.4 L732.5,384.0Z"/><path d="M739.0,311.0 L739.4,306.6 L740.6,302.3 L742.6,298.3 L745.3,294.5 L748.7,291.2 L752.6,288.3 L757.0,286.1 L761.8,284.4 L766.8,283.3 L772.0,283.0 L777.2,283.3 L782.2,284.4 L787.0,286.1 L791.4,288.3 L795.3,291.2 L798.7,294.5 L801.4,298.3 L803.4,302.3 L804.6,306.6 L805.0,311.0 L798.5,383.0 L798.1,386.4 L796.9,389.8 L794.9,393.0 L792.2,395.9 L788.8,398.6 L784.9,400.8 L780.5,402.6 L775.7,403.9 L770.7,404.7 L765.5,405.0 L760.3,404.7 L755.3,403.9 L750.5,402.6 L746.1,400.8 L742.2,398.6 L738.8,395.9 L736.1,393.0 L734.1,389.8 L732.9,386.4 L732.5,383.0Z"/><path d="M739.0,310.0 L739.4,305.6 L740.6,301.3 L742.6,297.3 L745.3,293.5 L748.7,290.2 L752.6,287.3 L757.0,285.1 L761.8,283.4 L766.8,282.3 L772.0,282.0 L777.2,282.3 L782.2,283.4 L787.0,285.1 L791.4,287.3 L795.3,290.2 L798.7,293.5 L801.4,297.3 L803.4,301.3 L804.6,305.6 L805.0,310.0 L798.5,382.0 L798.1,385.4 L796.9,388.8 L794.9,392.0 L792.2,394.9 L788.8,397.6 L784.9,399.8 L780.5,401.6 L775.7,402.9 L770.7,403.7 L765.5,404.0 L760.3,403.7 L755.3,402.9 L750.5,401.6 L746.1,399.8 L742.2,397.6 L738.8,394.9 L736.1,392.0 L734.1,388.8 L732.9,385.4 L732.5,382.0Z"/><path d="M739.0,309.0 L739.4,304.6 L740.6,300.3 L742.6,296.3 L745.3,292.5 L748.7,289.2 L752.6,286.3 L757.0,284.1 L761.8,282.4 L766.8,281.3 L772.0,281.0 L777.2,281.3 L782.2,282.4 L787.0,284.1 L791.4,286.3 L795.3,289.2 L798.7,292.5 L801.4,296.3 L803.4,300.3 L804.6,304.6 L805.0,309.0 L798.5,381.0 L798.1,384.4 L796.9,387.8 L794.9,391.0 L792.2,393.9 L788.8,396.6 L784.9,398.8 L780.5,400.6 L775.7,401.9 L770.7,402.7 L765.5,403.0 L760.3,402.7 L755.3,401.9 L750.5,400.6 L746.1,398.8 L742.2,396.6 L738.8,393.9 L736.1,391.0 L734.1,387.8 L732.9,384.4 L732.5,381.0Z"/><path d="M739.0,308.0 L739.4,303.6 L740.6,299.3 L742.6,295.3 L745.3,291.5 L748.7,288.2 L752.6,285.3 L757.0,283.1 L761.8,281.4 L766.8,280.3 L772.0,280.0 L777.2,280.3 L782.2,281.4 L787.0,283.1 L791.4,285.3 L795.3,288.2 L798.7,291.5 L801.4,295.3 L803.4,299.3 L804.6,303.6 L805.0,308.0 L798.5,380.0 L798.1,383.4 L796.9,386.8 L794.9,390.0 L792.2,392.9 L788.8,395.6 L784.9,397.8 L780.5,399.6 L775.7,400.9 L770.7,401.7 L765.5,402.0 L760.3,401.7 L755.3,400.9 L750.5,399.6 L746.1,397.8 L742.2,395.6 L738.8,392.9 L736.1,390.0 L734.1,386.8 L732.9,383.4 L732.5,380.0Z"/><path d="M739.0,307.0 L739.4,302.6 L740.6,298.3 L742.6,294.3 L745.3,290.5 L748.7,287.2 L752.6,284.3 L757.0,282.1 L761.8,280.4 L766.8,279.3 L772.0,279.0 L777.2,279.3 L782.2,280.4 L787.0,282.1 L791.4,284.3 L795.3,287.2 L798.7,290.5 L801.4,294.3 L803.4,298.3 L804.6,302.6 L805.0,307.0 L798.5,379.0 L798.1,382.4 L796.9,385.8 L794.9,389.0 L792.2,391.9 L788.8,394.6 L784.9,396.8 L780.5,398.6 L775.7,399.9 L770.7,400.7 L765.5,401.0 L760.3,400.7 L755.3,399.9 L750.5,398.6 L746.1,396.8 L742.2,394.6 L738.8,391.9 L736.1,389.0 L734.1,385.8 L732.9,382.4 L732.5,379.0Z"/><path d="M739.0,306.0 L739.4,301.6 L740.6,297.3 L742.6,293.3 L745.3,289.5 L748.7,286.2 L752.6,283.3 L757.0,281.1 L761.8,279.4 L766.8,278.3 L772.0,278.0 L777.2,278.3 L782.2,279.4 L787.0,281.1 L791.4,283.3 L795.3,286.2 L798.7,289.5 L801.4,293.3 L803.4,297.3 L804.6,301.6 L805.0,306.0 L798.5,378.0 L798.1,381.4 L796.9,384.8 L794.9,388.0 L792.2,390.9 L788.8,393.6 L784.9,395.8 L780.5,397.6 L775.7,398.9 L770.7,399.7 L765.5,400.0 L760.3,399.7 L755.3,398.9 L750.5,397.6 L746.1,395.8 L742.2,393.6 L738.8,390.9 L736.1,388.0 L734.1,384.8 L732.9,381.4 L732.5,378.0Z"/><path d="M739.0,305.0 L739.4,300.6 L740.6,296.3 L742.6,292.3 L745.3,288.5 L748.7,285.2 L752.6,282.3 L757.0,280.1 L761.8,278.4 L766.8,277.3 L772.0,277.0 L777.2,277.3 L782.2,278.4 L787.0,280.1 L791.4,282.3 L795.3,285.2 L798.7,288.5 L801.4,292.3 L803.4,296.3 L804.6,300.6 L805.0,305.0 L798.5,377.0 L798.1,380.4 L796.9,383.8 L794.9,387.0 L792.2,389.9 L788.8,392.6 L784.9,394.8 L780.5,396.6 L775.7,397.9 L770.7,398.7 L765.5,399.0 L760.3,398.7 L755.3,397.9 L750.5,396.6 L746.1,394.8 L742.2,392.6 L738.8,389.9 L736.1,387.0 L734.1,383.8 L732.9,380.4 L732.5,377.0Z"/><path d="M739.0,304.0 L739.4,299.6 L740.6,295.3 L742.6,291.3 L745.3,287.5 L748.7,284.2 L752.6,281.3 L757.0,279.1 L761.8,277.4 L766.8,276.3 L772.0,276.0 L777.2,276.3 L782.2,277.4 L787.0,279.1 L791.4,281.3 L795.3,284.2 L798.7,287.5 L801.4,291.3 L803.4,295.3 L804.6,299.6 L805.0,304.0 L798.5,376.0 L798.1,379.4 L796.9,382.8 L794.9,386.0 L792.2,388.9 L788.8,391.6 L784.9,393.8 L780.5,395.6 L775.7,396.9 L770.7,397.7 L765.5,398.0 L760.3,397.7 L755.3,396.9 L750.5,395.6 L746.1,393.8 L742.2,391.6 L738.8,388.9 L736.1,386.0 L734.1,382.8 L732.9,379.4 L732.5,376.0Z"/><path d="M739.0,303.0 L739.4,298.6 L740.6,294.3 L742.6,290.3 L745.3,286.5 L748.7,283.2 L752.6,280.3 L757.0,278.1 L761.8,276.4 L766.8,275.3 L772.0,275.0 L777.2,275.3 L782.2,276.4 L787.0,278.1 L791.4,280.3 L795.3,283.2 L798.7,286.5 L801.4,290.3 L803.4,294.3 L804.6,298.6 L805.0,303.0 L798.5,375.0 L798.1,378.4 L796.9,381.8 L794.9,385.0 L792.2,387.9 L788.8,390.6 L784.9,392.8 L780.5,394.6 L775.7,395.9 L770.7,396.7 L765.5,397.0 L760.3,396.7 L755.3,395.9 L750.5,394.6 L746.1,392.8 L742.2,390.6 L738.8,387.9 L736.1,385.0 L734.1,381.8 L732.9,378.4 L732.5,375.0Z"/><path d="M739.0,302.0 L739.4,297.6 L740.6,293.3 L742.6,289.3 L745.3,285.5 L748.7,282.2 L752.6,279.3 L757.0,277.1 L761.8,275.4 L766.8,274.3 L772.0,274.0 L777.2,274.3 L782.2,275.4 L787.0,277.1 L791.4,279.3 L795.3,282.2 L798.7,285.5 L801.4,289.3 L803.4,293.3 L804.6,297.6 L805.0,302.0 L798.5,374.0 L798.1,377.4 L796.9,380.8 L794.9,384.0 L792.2,386.9 L788.8,389.6 L784.9,391.8 L780.5,393.6 L775.7,394.9 L770.7,395.7 L765.5,396.0 L760.3,395.7 L755.3,394.9 L750.5,393.6 L746.1,391.8 L742.2,389.6 L738.8,386.9 L736.1,384.0 L734.1,380.8 L732.9,377.4 L732.5,374.0Z"/><path d="M739.0,301.0 L739.4,296.6 L740.6,292.3 L742.6,288.3 L745.3,284.5 L748.7,281.2 L752.6,278.3 L757.0,276.1 L761.8,274.4 L766.8,273.3 L772.0,273.0 L777.2,273.3 L782.2,274.4 L787.0,276.1 L791.4,278.3 L795.3,281.2 L798.7,284.5 L801.4,288.3 L803.4,292.3 L804.6,296.6 L805.0,301.0 L798.5,373.0 L798.1,376.4 L796.9,379.8 L794.9,383.0 L792.2,385.9 L788.8,388.6 L784.9,390.8 L780.5,392.6 L775.7,393.9 L770.7,394.7 L765.5,395.0 L760.3,394.7 L755.3,393.9 L750.5,392.6 L746.1,390.8 L742.2,388.6 L738.8,385.9 L736.1,383.0 L734.1,379.8 L732.9,376.4 L732.5,373.0Z"/><path d="M739.0,300.0 L739.4,295.6 L740.6,291.3 L742.6,287.3 L745.3,283.5 L748.7,280.2 L752.6,277.3 L757.0,275.1 L761.8,273.4 L766.8,272.3 L772.0,272.0 L777.2,272.3 L782.2,273.4 L787.0,275.1 L791.4,277.3 L795.3,280.2 L798.7,283.5 L801.4,287.3 L803.4,291.3 L804.6,295.6 L805.0,300.0 L798.5,372.0 L798.1,375.4 L796.9,378.8 L794.9,382.0 L792.2,384.9 L788.8,387.6 L784.9,389.8 L780.5,391.6 L775.7,392.9 L770.7,393.7 L765.5,394.0 L760.3,393.7 L755.3,392.9 L750.5,391.6 L746.1,389.8 L742.2,387.6 L738.8,384.9 L736.1,382.0 L734.1,378.8 L732.9,375.4 L732.5,372.0Z"/><path d="M739.0,299.0 L739.4,294.6 L740.6,290.3 L742.6,286.3 L745.3,282.5 L748.7,279.2 L752.6,276.3 L757.0,274.1 L761.8,272.4 L766.8,271.3 L772.0,271.0 L777.2,271.3 L782.2,272.4 L787.0,274.1 L791.4,276.3 L795.3,279.2 L798.7,282.5 L801.4,286.3 L803.4,290.3 L804.6,294.6 L805.0,299.0 L798.5,371.0 L798.1,374.4 L796.9,377.8 L794.9,381.0 L792.2,383.9 L788.8,386.6 L784.9,388.8 L780.5,390.6 L775.7,391.9 L770.7,392.7 L765.5,393.0 L760.3,392.7 L755.3,391.9 L750.5,390.6 L746.1,388.8 L742.2,386.6 L738.8,383.9 L736.1,381.0 L734.1,377.8 L732.9,374.4 L732.5,371.0Z"/><path d="M739.0,298.0 L739.4,293.6 L740.6,289.3 L742.6,285.3 L745.3,281.5 L748.7,278.2 L752.6,275.3 L757.0,273.1 L761.8,271.4 L766.8,270.3 L772.0,270.0 L777.2,270.3 L782.2,271.4 L787.0,273.1 L791.4,275.3 L795.3,278.2 L798.7,281.5 L801.4,285.3 L803.4,289.3 L804.6,293.6 L805.0,298.0 L798.5,370.0 L798.1,373.4 L796.9,376.8 L794.9,380.0 L792.2,382.9 L788.8,385.6 L784.9,387.8 L780.5,389.6 L775.7,390.9 L770.7,391.7 L765.5,392.0 L760.3,391.7 L755.3,390.9 L750.5,389.6 L746.1,387.8 L742.2,385.6 L738.8,382.9 L736.1,380.0 L734.1,376.8 L732.9,373.4 L732.5,370.0Z"/><path d="M739.0,297.0 L739.4,292.6 L740.6,288.3 L742.6,284.3 L745.3,280.5 L748.7,277.2 L752.6,274.3 L757.0,272.1 L761.8,270.4 L766.8,269.3 L772.0,269.0 L777.2,269.3 L782.2,270.4 L787.0,272.1 L791.4,274.3 L795.3,277.2 L798.7,280.5 L801.4,284.3 L803.4,288.3 L804.6,292.6 L805.0,297.0 L798.5,369.0 L798.1,372.4 L796.9,375.8 L794.9,379.0 L792.2,381.9 L788.8,384.6 L784.9,386.8 L780.5,388.6 L775.7,389.9 L770.7,390.7 L765.5,391.0 L760.3,390.7 L755.3,389.9 L750.5,388.6 L746.1,386.8 L742.2,384.6 L738.8,381.9 L736.1,379.0 L734.1,375.8 L732.9,372.4 L732.5,369.0Z"/><path d="M739.0,296.0 L739.4,291.6 L740.6,287.3 L742.6,283.3 L745.3,279.5 L748.7,276.2 L752.6,273.3 L757.0,271.1 L761.8,269.4 L766.8,268.3 L772.0,268.0 L777.2,268.3 L782.2,269.4 L787.0,271.1 L791.4,273.3 L795.3,276.2 L798.7,279.5 L801.4,283.3 L803.4,287.3 L804.6,291.6 L805.0,296.0 L798.5,368.0 L798.1,371.4 L796.9,374.8 L794.9,378.0 L792.2,380.9 L788.8,383.6 L784.9,385.8 L780.5,387.6 L775.7,388.9 L770.7,389.7 L765.5,390.0 L760.3,389.7 L755.3,388.9 L750.5,387.6 L746.1,385.8 L742.2,383.6 L738.8,380.9 L736.1,378.0 L734.1,374.8 L732.9,371.4 L732.5,368.0Z"/><path d="M739.0,295.0 L739.4,290.6 L740.6,286.3 L742.6,282.3 L745.3,278.5 L748.7,275.2 L752.6,272.3 L757.0,270.1 L761.8,268.4 L766.8,267.3 L772.0,267.0 L777.2,267.3 L782.2,268.4 L787.0,270.1 L791.4,272.3 L795.3,275.2 L798.7,278.5 L801.4,282.3 L803.4,286.3 L804.6,290.6 L805.0,295.0 L798.5,367.0 L798.1,370.4 L796.9,373.8 L794.9,377.0 L792.2,379.9 L788.8,382.6 L784.9,384.8 L780.5,386.6 L775.7,387.9 L770.7,388.7 L765.5,389.0 L760.3,388.7 L755.3,387.9 L750.5,386.6 L746.1,384.8 L742.2,382.6 L738.8,379.9 L736.1,377.0 L734.1,373.8 L732.9,370.4 L732.5,367.0Z"/><path d="M739.0,294.0 L739.4,289.6 L740.6,285.3 L742.6,281.3 L745.3,277.5 L748.7,274.2 L752.6,271.3 L757.0,269.1 L761.8,267.4 L766.8,266.3 L772.0,266.0 L777.2,266.3 L782.2,267.4 L787.0,269.1 L791.4,271.3 L795.3,274.2 L798.7,277.5 L801.4,281.3 L803.4,285.3 L804.6,289.6 L805.0,294.0 L798.5,366.0 L798.1,369.4 L796.9,372.8 L794.9,376.0 L792.2,378.9 L788.8,381.6 L784.9,383.8 L780.5,385.6 L775.7,386.9 L770.7,387.7 L765.5,388.0 L760.3,387.7 L755.3,386.9 L750.5,385.6 L746.1,383.8 L742.2,381.6 L738.8,378.9 L736.1,376.0 L734.1,372.8 L732.9,369.4 L732.5,366.0Z"/><path d="M739.0,293.0 L739.4,288.6 L740.6,284.3 L742.6,280.3 L745.3,276.5 L748.7,273.2 L752.6,270.3 L757.0,268.1 L761.8,266.4 L766.8,265.3 L772.0,265.0 L777.2,265.3 L782.2,266.4 L787.0,268.1 L791.4,270.3 L795.3,273.2 L798.7,276.5 L801.4,280.3 L803.4,284.3 L804.6,288.6 L805.0,293.0 L798.5,365.0 L798.1,368.4 L796.9,371.8 L794.9,375.0 L792.2,377.9 L788.8,380.6 L784.9,382.8 L780.5,384.6 L775.7,385.9 L770.7,386.7 L765.5,387.0 L760.3,386.7 L755.3,385.9 L750.5,384.6 L746.1,382.8 L742.2,380.6 L738.8,377.9 L736.1,375.0 L734.1,371.8 L732.9,368.4 L732.5,365.0Z"/><path d="M739.0,292.0 L739.4,287.6 L740.6,283.3 L742.6,279.3 L745.3,275.5 L748.7,272.2 L752.6,269.3 L757.0,267.1 L761.8,265.4 L766.8,264.3 L772.0,264.0 L777.2,264.3 L782.2,265.4 L787.0,267.1 L791.4,269.3 L795.3,272.2 L798.7,275.5 L801.4,279.3 L803.4,283.3 L804.6,287.6 L805.0,292.0 L798.5,364.0 L798.1,367.4 L796.9,370.8 L794.9,374.0 L792.2,376.9 L788.8,379.6 L784.9,381.8 L780.5,383.6 L775.7,384.9 L770.7,385.7 L765.5,386.0 L760.3,385.7 L755.3,384.9 L750.5,383.6 L746.1,381.8 L742.2,379.6 L738.8,376.9 L736.1,374.0 L734.1,370.8 L732.9,367.4 L732.5,364.0Z"/><path d="M739.0,291.0 L739.4,286.6 L740.6,282.3 L742.6,278.3 L745.3,274.5 L748.7,271.2 L752.6,268.3 L757.0,266.1 L761.8,264.4 L766.8,263.3 L772.0,263.0 L777.2,263.3 L782.2,264.4 L787.0,266.1 L791.4,268.3 L795.3,271.2 L798.7,274.5 L801.4,278.3 L803.4,282.3 L804.6,286.6 L805.0,291.0 L798.5,363.0 L798.1,366.4 L796.9,369.8 L794.9,373.0 L792.2,375.9 L788.8,378.6 L784.9,380.8 L780.5,382.6 L775.7,383.9 L770.7,384.7 L765.5,385.0 L760.3,384.7 L755.3,383.9 L750.5,382.6 L746.1,380.8 L742.2,378.6 L738.8,375.9 L736.1,373.0 L734.1,369.8 L732.9,366.4 L732.5,363.0Z"/><path d="M739.0,290.0 L739.4,285.6 L740.6,281.3 L742.6,277.3 L745.3,273.5 L748.7,270.2 L752.6,267.3 L757.0,265.1 L761.8,263.4 L766.8,262.3 L772.0,262.0 L777.2,262.3 L782.2,263.4 L787.0,265.1 L791.4,267.3 L795.3,270.2 L798.7,273.5 L801.4,277.3 L803.4,281.3 L804.6,285.6 L805.0,290.0 L798.5,362.0 L798.1,365.4 L796.9,368.8 L794.9,372.0 L792.2,374.9 L788.8,377.6 L784.9,379.8 L780.5,381.6 L775.7,382.9 L770.7,383.7 L765.5,384.0 L760.3,383.7 L755.3,382.9 L750.5,381.6 L746.1,379.8 L742.2,377.6 L738.8,374.9 L736.1,372.0 L734.1,368.8 L732.9,365.4 L732.5,362.0Z"/><path d="M739.0,289.0 L739.4,284.6 L740.6,280.3 L742.6,276.3 L745.3,272.5 L748.7,269.2 L752.6,266.3 L757.0,264.1 L761.8,262.4 L766.8,261.3 L772.0,261.0 L777.2,261.3 L782.2,262.4 L787.0,264.1 L791.4,266.3 L795.3,269.2 L798.7,272.5 L801.4,276.3 L803.4,280.3 L804.6,284.6 L805.0,289.0 L798.5,361.0 L798.1,364.4 L796.9,367.8 L794.9,371.0 L792.2,373.9 L788.8,376.6 L784.9,378.8 L780.5,380.6 L775.7,381.9 L770.7,382.7 L765.5,383.0 L760.3,382.7 L755.3,381.9 L750.5,380.6 L746.1,378.8 L742.2,376.6 L738.8,373.9 L736.1,371.0 L734.1,367.8 L732.9,364.4 L732.5,361.0Z"/><path d="M739.0,288.0 L739.4,283.6 L740.6,279.3 L742.6,275.3 L745.3,271.5 L748.7,268.2 L752.6,265.3 L757.0,263.1 L761.8,261.4 L766.8,260.3 L772.0,260.0 L777.2,260.3 L782.2,261.4 L787.0,263.1 L791.4,265.3 L795.3,268.2 L798.7,271.5 L801.4,275.3 L803.4,279.3 L804.6,283.6 L805.0,288.0 L798.5,360.0 L798.1,363.4 L796.9,366.8 L794.9,370.0 L792.2,372.9 L788.8,375.6 L784.9,377.8 L780.5,379.6 L775.7,380.9 L770.7,381.7 L765.5,382.0 L760.3,381.7 L755.3,380.9 L750.5,379.6 L746.1,377.8 L742.2,375.6 L738.8,372.9 L736.1,370.0 L734.1,366.8 L732.9,363.4 L732.5,360.0Z"/><path d="M739.0,287.0 L739.4,282.6 L740.6,278.3 L742.6,274.3 L745.3,270.5 L748.7,267.2 L752.6,264.3 L757.0,262.1 L761.8,260.4 L766.8,259.3 L772.0,259.0 L777.2,259.3 L782.2,260.4 L787.0,262.1 L791.4,264.3 L795.3,267.2 L798.7,270.5 L801.4,274.3 L803.4,278.3 L804.6,282.6 L805.0,287.0 L798.5,359.0 L798.1,362.4 L796.9,365.8 L794.9,369.0 L792.2,371.9 L788.8,374.6 L784.9,376.8 L780.5,378.6 L775.7,379.9 L770.7,380.7 L765.5,381.0 L760.3,380.7 L755.3,379.9 L750.5,378.6 L746.1,376.8 L742.2,374.6 L738.8,371.9 L736.1,369.0 L734.1,365.8 L732.9,362.4 L732.5,359.0Z"/></g>
<path d="M739.0,287.0 L739.4,282.6 L740.6,278.3 L742.6,274.3 L745.3,270.5 L748.7,267.2 L752.6,264.3 L757.0,262.1 L761.8,260.4 L766.8,259.3 L772.0,259.0 L777.2,259.3 L782.2,260.4 L787.0,262.1 L791.4,264.3 L795.3,267.2 L798.7,270.5 L801.4,274.3 L803.4,278.3 L804.6,282.6 L805.0,287.0 L798.5,359.0 L798.1,362.4 L796.9,365.8 L794.9,369.0 L792.2,371.9 L788.8,374.6 L784.9,376.8 L780.5,378.6 L775.7,379.9 L770.7,380.7 L765.5,381.0 L760.3,380.7 L755.3,379.9 L750.5,378.6 L746.1,376.8 L742.2,374.6 L738.8,371.9 L736.1,369.0 L734.1,365.8 L732.9,362.4 L732.5,359.0Z" fill="#e8731e" stroke="#3e4f6e" stroke-width="1.2"/>
<path d="M744.0,288.0 L744.3,284.4 L745.4,280.9 L747.1,277.6 L749.3,274.5 L752.2,271.7 L755.5,269.4 L759.3,267.5 L763.3,266.1 L767.6,265.3 L772.0,265.0 L776.4,265.3 L780.7,266.1 L784.7,267.5 L788.5,269.4 L791.8,271.7 L794.7,274.5 L796.9,277.6 L798.6,280.9 L799.7,284.4 L800.0,288.0 L793.5,358.0 L793.2,360.8 L792.1,363.6 L790.4,366.2 L788.2,368.6 L785.3,370.7 L782.0,372.6 L778.2,374.0 L774.2,375.1 L769.9,375.8 L765.5,376.0 L761.1,375.8 L756.8,375.1 L752.8,374.0 L749.0,372.6 L745.7,370.7 L742.8,368.6 L740.6,366.2 L738.9,363.6 L737.8,360.8 L737.5,358.0Z" fill="url(#gori)" stroke="#3e4f6e" stroke-width="1"/>
<clipPath id="eclip"><path d="M744.0,288.0 L744.3,284.4 L745.4,280.9 L747.1,277.6 L749.3,274.5 L752.2,271.7 L755.5,269.4 L759.3,267.5 L763.3,266.1 L767.6,265.3 L772.0,265.0 L776.4,265.3 L780.7,266.1 L784.7,267.5 L788.5,269.4 L791.8,271.7 L794.7,274.5 L796.9,277.6 L798.6,280.9 L799.7,284.4 L800.0,288.0 L793.5,358.0 L793.2,360.8 L792.1,363.6 L790.4,366.2 L788.2,368.6 L785.3,370.7 L782.0,372.6 L778.2,374.0 L774.2,375.1 L769.9,375.8 L765.5,376.0 L761.1,375.8 L756.8,375.1 L752.8,374.0 L749.0,372.6 L745.7,370.7 L742.8,368.6 L740.6,366.2 L738.9,363.6 L737.8,360.8 L737.5,358.0Z"/></clipPath>
<path d="M744.0,298.0 L744.3,294.4 L745.4,290.9 L747.1,287.6 L749.3,284.5 L752.2,281.7 L755.5,279.4 L759.3,277.5 L763.3,276.1 L767.6,275.3 L772.0,275.0 L776.4,275.3 L780.7,276.1 L784.7,277.5 L788.5,279.4 L791.8,281.7 L794.7,284.5 L796.9,287.6 L798.6,290.9 L799.7,294.4 L800.0,298.0 L793.5,368.0 L793.2,370.8 L792.1,373.6 L790.4,376.2 L788.2,378.6 L785.3,380.7 L782.0,382.6 L778.2,384.0 L774.2,385.1 L769.9,385.8 L765.5,386.0 L761.1,385.8 L756.8,385.1 L752.8,384.0 L749.0,382.6 L745.7,380.7 L742.8,378.6 L740.6,376.2 L738.9,373.6 L737.8,370.8 L737.5,368.0Z" fill="#e8731e" stroke="#3e4f6e" stroke-width="1" clip-path="url(#eclip)"/>
<path d="M246.0,243.0L418.0,257.5L393.0,497.0L220.5,482.5Z" fill="none" stroke="#2a2a2a" stroke-width="1" stroke-dasharray="2,2"/>
<path d="M319.5,337 L320,370" stroke="#555" stroke-width="1" stroke-dasharray="1.5,2"/>
<rect x="241.5" y="238.5" width="9" height="9" fill="#e6e6e6" stroke="#262626" stroke-width="2"/>
<rect x="413.5" y="253.0" width="9" height="9" fill="#e6e6e6" stroke="#262626" stroke-width="2"/>
<rect x="388.5" y="492.5" width="9" height="9" fill="#e6e6e6" stroke="#262626" stroke-width="2"/>
<rect x="216.0" y="478.0" width="9" height="9" fill="#e6e6e6" stroke="#262626" stroke-width="2"/>
<rect x="314.8" y="331.9" width="9" height="9" fill="#e6e6e6" stroke="#262626" stroke-width="2"/>
<rect x="328.9" y="247.1" width="7" height="7" fill="#262626"/>
<rect x="303.5" y="486.1" width="7" height="7" fill="#262626"/>
<rect x="229.3" y="359.4" width="7" height="7" fill="#262626"/>
<rect x="402.8" y="374.0" width="7" height="7" fill="#262626"/>
<circle cx="319.7" cy="312" r="4.5" fill="#262626"/>
<path d="M322,189.5 Q331,183.5 342,191" fill="none" stroke="#444" stroke-width="1.3"/>
<path d="M320.5,189.5 l4,-2.5 l0.5,3.5z M344,192 l-4.5,-0.5 l2,-3z" fill="#444"/>
<path d="M432.5,371.5 Q443,379 431.5,388.5" fill="none" stroke="#2a3030" stroke-width="1.6"/>
<path d="M429.5,369.8 l6,0 l-2.5,4.5z M427.5,390 l6,-0.5 l-2.5,-4z" fill="#2a3030"/>
<path d="M111.4,232 L243.8,242.7" stroke="#5a5a5a" stroke-width="1"/>
<path d="M85,471.3 L216,481.8" stroke="#5a5a5a" stroke-width="1"/>
<path d="M221.5,250 L198.5,472" stroke="#37474f" stroke-width="1.2"/>
<path d="M222.4,241.5 L217.3,251.5 L227.5,252.3z M197.5,481.5 L192.6,471 L202.8,471.8z" fill="#37474f"/>
<path d="M219,494 L216,528 M392,502 L389,542" stroke="#5a5a5a" stroke-width="1"/>
<path d="M226,503.5 L383,517.5" stroke="#37474f" stroke-width="1.2"/>
<path d="M218.5,503.2 L230,499 L229.3,508.5z M391,518 L379.5,522.3 L380.2,512.8z" fill="#37474f"/>
<path d="M393,463 L427.6,466 M405,498 L427.6,499.7" stroke="#5a5a5a" stroke-width="1"/>
<path d="M416.7,470 L416.7,494" stroke="#37474f" stroke-width="1.3"/>
<path d="M416.7,465.8 L411.8,471.5 L421.6,471.5z M416.7,498.8 L411.8,493 L421.6,493z" fill="#37474f"/>
<path d="M438.8,501 L460.5,503" stroke="#888" stroke-width="1"/>
<path d="M83,471 L103,472.6 L100.5,503 L80.5,501.5Z" fill="#9fe39a" opacity="0.7"/>
<path d="M97,502 L218,512 L216.5,528 L96,520Z" fill="#9fe39a" opacity="0.7"/>
<path d="M102.5,472.5 L108,473 L105.5,501 L100,501Z" fill="#5fc9a0" opacity="0.6"/>
<path d="M100,499 L218,508.5 L218,514 L99.5,505Z" fill="#5fc9a0" opacity="0.6"/>
<path d="M109.6,505.9L108.8,512.9M121.2,506.7L120.4,517.7M132.8,507.6L132.0,514.6M144.4,508.5L143.6,519.5M156.0,509.4L155.2,516.4M167.6,510.2L166.8,521.2M179.2,511.1L178.4,518.1M190.8,512.0L190.0,523.0M202.4,512.8L201.6,519.8M214.0,513.7L213.2,524.7" stroke="#33bfc0" stroke-width="1.5"/>
<path d="M120.2,306.5L109.2,305.0M119.1,316.9L103.1,315.4M118.0,327.3L107.0,325.8M116.9,337.7L100.9,336.2M115.8,348.1L104.8,346.6M114.7,358.5L98.7,357.0M113.6,368.9L102.6,367.4M112.4,379.3L96.4,377.8M111.3,389.7L100.3,388.2M110.2,400.1L94.2,398.6M109.1,410.5L98.1,409.0M108.0,420.9L92.0,419.4M104.8,432.0L93.8,430.5M103.7,442.4L87.7,440.9M102.6,452.8L91.6,451.3M101.5,463.2L85.5,461.7M226.0,517.6L225.2,526.6M237.7,518.3L236.9,532.3M249.4,519.0L248.6,528.0M261.1,519.7L260.3,533.7M272.8,520.4L272.0,529.4M284.5,521.1L283.7,535.1M296.2,521.8L295.4,530.8M307.9,522.5L307.1,536.5M319.6,523.2L318.8,532.2" stroke="#3cb3e3" stroke-width="1.6"/>
<path d="M75.5,501.6 L104,504 M102,460 L96.5,523.7" stroke="#3cb3e3" stroke-width="1.4"/>
<path d="M97.5,500 L96,482" stroke="#6b8a6b" stroke-width="1.2"/><path d="M95.8,473 L91,483 L101,483.5z" fill="#6b8a6b"/>
<path d="M105,512 L206,520" stroke="#6b8a6b" stroke-width="1.2"/><path d="M216,521 L206,515 L205.5,526z" fill="#778877"/>
<circle cx="98.4" cy="503.5" r="6.8" fill="none" stroke="#111" stroke-width="2.6"/>
</svg>
<div id="hdr">
  <div id="logo">
    <div class="lg" style="left:1px;top:2px;background:#e8361c">T</div>
    <div class="lg" style="left:15px;top:2px;background:#f06a32">I</div>
    <div class="lg" style="left:29px;top:2px;background:#f57f20">N</div>
    <div class="lg" style="left:1px;top:16px;background:#1da33d">K</div>
    <div class="lg" style="left:15px;top:16px;background:#6bbb1c">E</div>
    <div class="lg" style="left:29px;top:16px;background:#c8c21a">R</div>
    <div class="lg" style="left:1px;top:30px;background:#0d4ea6">C</div>
    <div class="lg" style="left:15px;top:30px;background:#2a7cc6">A</div>
    <div class="lg" style="left:29px;top:30px;background:#51a9dc">D</div>
  </div>
  <svg class="ic" style="left:55px;top:12px" width="21" height="20" viewBox="0 0 21 20">
    <rect x="1" y="1" width="19" height="18" rx="1.5" fill="none" stroke="#1a1a1a" stroke-width="2"/>
    <rect x="5" y="5.5" width="2" height="2" fill="#1a1a1a"/><rect x="9" y="5.5" width="7" height="2" fill="#1a1a1a"/>
    <rect x="5" y="9" width="2" height="2" fill="#1a1a1a"/><rect x="9" y="9" width="7" height="2" fill="#1a1a1a"/>
    <rect x="5" y="12.5" width="2" height="2" fill="#1a1a1a"/><rect x="9" y="12.5" width="7" height="2" fill="#1a1a1a"/>
  </svg>
  <div id="title">Mighty Krunk</div>
  <div id="blue"></div>
</div>
<div id="tb">
</div>
<svg id="ui" style="position:absolute;left:0;top:0" width="1000" height="714" viewBox="0 0 1000 714">
 <!-- separators -->
 <g fill="#d8dce2"><rect x="179.5" y="47" width="1" height="43"/><rect x="270.5" y="47" width="1" height="43"/><rect x="700" y="47" width="1" height="43"/><rect x="769" y="47" width="1" height="43"/><rect x="860" y="47" width="1" height="43"/><rect x="996" y="47" width="1" height="43"/></g>
 <!-- copy -->
 <g fill="none" stroke="#1e1e1e" stroke-width="1.9" stroke-linejoin="round">
  <path d="M11.5,58.5 H26.5 V63.5 M11.5,58.5 V73.5 H16.5"/>
  <rect x="16.8" y="64" width="15.5" height="15.5" rx="0.8"/>
 </g>
 <!-- paste -->
 <g fill="none" stroke="#1e1e1e" stroke-width="1.8" stroke-linejoin="round">
  <rect x="56" y="59.8" width="14.8" height="19.4" rx="0.8"/>
  <rect x="64.9" y="65.3" width="10.6" height="10.7" rx="0.8" fill="#eeeff1"/>
 </g>
 <path d="M59.5,59 H67 L65.8,62.3 H60.7Z" fill="#1e1e1e"/>
 <circle cx="63.2" cy="58.2" r="1.9" fill="none" stroke="#1e1e1e" stroke-width="1.4"/>
 <!-- duplicate -->
 <g fill="none" stroke="#1e1e1e" stroke-width="1.9" stroke-linejoin="round">
  <rect x="109" y="58.5" width="14.5" height="14.5" rx="0.5" stroke-width="2.4"/>
  <path d="M108.5,62 L104.5,63 L106,76 L119,75"/>
  <path d="M104.5,67 L100,68.5 L102.5,82 L115.5,80"/>
 </g>
 <!-- trash -->
 <g fill="none" stroke="#1e1e1e" stroke-linejoin="round">
  <path d="M147,59.2 H167.2" stroke-width="2"/>
  <path d="M154,58.5 V56.5 Q154,55.4 155.4,55.4 H158.8 Q160.2,55.4 160.2,56.5 V58.5" stroke-width="1.8"/>
  <path d="M149,61 V77.5 Q149,80 151.5,80 H162.5 Q165,80 165,77.5 V61" stroke-width="2.3"/>
  <path d="M153.3,63 V76 M157,63 V76 M160.7,63 V76" stroke-width="1.6"/>
 </g>
 <!-- undo / redo -->
 <path d="M193.5,68.2 L200.5,62.5 L200.5,66.2 Q210,65.5 213.8,73.5 Q208.5,69.8 200.5,70.3 L200.5,74 Z" fill="#1e2428"/>
 <path d="M257.5,68.2 L250.5,62.5 L250.5,66.2 Q241,65.5 237.2,73.5 Q242.5,69.8 250.5,70.3 L250.5,74 Z" fill="#c2ccd8"/>
 <!-- bulb -->
 <g fill="none" stroke="#b6c3d0" stroke-width="1.8" stroke-linecap="round">
  <path d="M717,77 V73.5 Q712,69 712,64.5 Q712,56.5 721,56.5 Q730,56.5 730,64.5 Q730,69 725,73.5 V77 Z"/>
  <path d="M718,79.7 H724 M719.2,81.5 H722.8"/>
  <path d="M716.5,63 Q717,59.5 720.5,59" stroke-width="1.2"/>
 </g>
 <rect x="741" y="58" width="1.2" height="21" fill="#c6ced8"/>
 <path d="M750,65 H759.5 L754.75,70.8Z" fill="#1e1e1e"/>
 <!-- group light -->
 <path d="M782,59 H798 Q800.5,59 800.5,61.5 V65 Q804.5,68.5 804.5,72.5 Q804.5,81 795.5,81 Q790,81 787.5,77.5 H782 Z" fill="none" stroke="#b6c3d0" stroke-width="1.9" stroke-linejoin="round"/>
 <!-- group dark -->
 <g fill="none" stroke="#1e1e1e" stroke-width="2.1">
  <path d="M838.5,75 H827.8 V58.7 H846.5 V64.5"/>
  <circle cx="841.8" cy="73" r="7.6" fill="#eeeff1"/>
 </g>
 <!-- align light -->
 <g fill="none" stroke="#b6c3d0" stroke-width="1.8">
  <path d="M875.5,57 V80.5"/>
  <rect x="880" y="60" width="13" height="6"/>
  <rect x="880" y="70.5" width="8.5" height="6"/>
 </g>
 <!-- mirror -->
 <g fill="none" stroke="#1e1e1e" stroke-width="2" stroke-linejoin="round">
  <path d="M928.5,54.5 V82.5" stroke-width="2.3"/>
  <path d="M925,60 V77 H914.5 Z"/>
  <path d="M932,60 V77 H942.5 Z"/>
 </g>
 <!-- magnet -->
 <g transform="rotate(-22 971 66)" fill="none" stroke="#1e1e1e" stroke-width="1.9" stroke-linejoin="round">
  <path d="M962.5,75 V63 A8.5,8.5 0 0 1 979.5,63 V75 H974.8 V63 A3.8,3.8 0 0 0 967.2,63 V75 Z"/>
  <path d="M962.5,70.8 H967.2 M974.8,70.8 H979.5"/>
 </g>
 <g stroke="#1e1e1e" stroke-width="2.1" stroke-linecap="round">
  <path d="M961.2,78.4 l0.3,0.2 M964.6,80.4 l0.6,0.1 M969.2,80.4 l0.6,-0.1 M973.4,78.7 l0.6,-0.3 M977.5,76.9 l0.5,0 M982,77.4 l0.6,0.3 M985.8,79.4 l0.4,0.3"/>
 </g>
 <!-- header blue icon -->
 <g fill="#fff"><rect x="992.5" y="12" width="9" height="7" rx="1"/><rect x="992.5" y="20.3" width="9" height="6.3" rx="1"/><rect x="992.5" y="28" width="9" height="6.3" rx="1"/></g>

 <!-- view cube -->
 <defs><linearGradient id="cubef" x1="0" y1="0" x2="0" y2="1"><stop offset="0" stop-color="#f4f4f4"/><stop offset="1" stop-color="#dedede"/></linearGradient></defs>
 <path d="M25,160.5 L85,164.4 L82.2,182.3 L33.5,179Z" fill="url(#cubef)" stroke="#c2c2c2" stroke-width="1"/>
 <path d="M34.6,112.8 L86.7,116.8 L85,164.4 L25,160.5Z" fill="#fafafa" stroke="#b9b9b9" stroke-width="1"/>
 <text x="46.5" y="143.5" transform="rotate(4 58 138)" font-family="Liberation Sans" font-weight="bold" font-size="12.5" fill="#868a90" letter-spacing="-0.4">TOP</text>
 <text x="38" y="176.5" transform="rotate(4 56 173)" font-family="Liberation Serif" font-weight="bold" font-size="7" fill="#8e8e8e" letter-spacing="1.6">FRONT</text>

 <!-- nav buttons -->
 <g fill="#f8f8f8" stroke="#a9acb0" stroke-width="1">
  <circle cx="32" cy="227.4" r="15.5"/><circle cx="32" cy="266.6" r="15.5"/><circle cx="32" cy="305.8" r="15.5"/><circle cx="32" cy="345" r="15.5"/><circle cx="32" cy="384.4" r="15.5"/>
 </g>
 <g fill="none" stroke="#a0a4a8" stroke-width="1.3" stroke-linejoin="round">
  <path d="M25.5,227 L32,221 L38.5,227 M27.5,225.5 V233 H30.5 V229.5 H33.5 V233 H36.5 V225.5"/>
  <path d="M25,262 V259.5 H27.5 M36.5,259.5 H39 V262 M39,271 V273.5 H36.5 M27.5,273.5 H25 V271"/>
  <path d="M32,299.5 V312 M25.8,305.8 H38.2" stroke-width="1.6"/>
  <path d="M25.8,345 H38.2" stroke-width="1.6"/>
  <path d="M25,391 H39 M28,390 V380.5 L30.5,378.5 H35 V390 M28,380.5 H32.5 L35,378.5 M32.5,380.5 V390"/>
 </g>

 <!-- labels -->
 <g fill="#ffffff" fill-opacity="0.92">
  <rect x="146.7" y="347.4" width="44.2" height="20.1" rx="3"/>
  <rect x="32.8" y="473.3" width="38.5" height="21.7" rx="3"/>
  <rect x="132" y="527" width="38" height="21" rx="3"/>
  <rect x="283" y="527.5" width="38" height="19" rx="3"/>
  <rect x="436" y="474.5" width="37.8" height="21" rx="3"/>
  <rect x="468" y="494" width="31.7" height="20.7" rx="3"/>
 </g>
 <g font-family="Liberation Sans" font-size="11.5" fill="#111" stroke="#111" stroke-width="0.25" text-anchor="middle">
  <text x="168.8" y="361.5">115.00</text>
  <text x="52" y="488.3">15.00</text>
  <text x="151" y="541.5">51.00</text>
  <text x="302" y="540">74.00</text>
  <text x="454.9" y="489.3">32.00</text>
  <text x="483.8" y="508.5">0.00</text>
 </g>
 <!-- close & menu circles -->
 <circle cx="77" cy="519.5" r="9.5" fill="#fdfdfd" stroke="#e2e2e2" stroke-width="1"/>
 <path d="M73.5,516 L80.5,523 M80.5,516 L73.5,523" stroke="#333" stroke-width="1.2"/>
 <circle cx="74.8" cy="542" r="10" fill="#f8f8f8" stroke="#222" stroke-width="1.5"/>
 <path d="M69,538.5 Q75,537.8 80.5,538.8 M68.5,542 Q75,541.5 81,542.3 M69,545.5 Q75,545.3 80.5,546" fill="none" stroke="#222" stroke-width="1.4"/>

 <!-- right toggle -->
 <rect x="993.5" y="420" width="8" height="44" rx="2" fill="#eef0f3" stroke="#d5d9df" stroke-width="1"/>
 <path d="M998,432 L1001,435 M998,454 L1001,451" stroke="#111" stroke-width="1.8"/>
</svg>
<div id="panel" style="position:absolute;left:751px;top:103px;width:241px;height:62px;background:#fff;border-radius:4px;box-shadow:0 1px 2px rgba(0,0,0,0.18)">
 <div style="position:absolute;left:47px;top:6px;font-size:14px;font-weight:bold;color:#1c2b3d">Shape</div>
 <svg style="position:absolute;left:0;top:0" width="241" height="62" viewBox="751 103 241 62">
  <path d="M763.5,131.5 L770,138 L776.5,131.5" fill="none" stroke="#1c2b3d" stroke-width="2"/>
  <circle cx="808.9" cy="144.4" r="14" fill="#fff" stroke="#6aa2e6" stroke-width="1.5"/>
  <circle cx="808.9" cy="144.4" r="11.5" fill="#e21b2c"/>
  <defs><pattern id="hatch" width="5.5" height="5.5" patternUnits="userSpaceOnUse" patternTransform="rotate(45)"><rect width="5.5" height="5.5" fill="#a6a6a6"/><rect width="2.6" height="5.5" fill="#cfcfcf"/></pattern></defs>
  <circle cx="841" cy="144.4" r="11.3" fill="url(#hatch)"/>
  <rect x="928.4" y="142" width="11.4" height="8.4" rx="1" fill="#4f5d6e"/>
  <path d="M932.3,136.8 Q934,134.2 936.5,134.6 Q939.6,135.3 939.3,138.5 Q939,140.8 936.5,142.2" fill="none" stroke="#4f5d6e" stroke-width="1.6"/>
  <path d="M963.2,146 V144.5 Q960,141.5 960,138.8 Q960,133.3 966.3,133.3 Q972.6,133.3 972.6,138.8 Q972.6,141.5 969.4,144.5 V146 Z" fill="#c9cdd3" stroke="#2f3b49" stroke-width="1.5"/>
  <path d="M963.5,148.8 H969 M964.5,151 H968" stroke="#5b6878" stroke-width="1.4"/>
 </svg>
</div>

</body></html>
